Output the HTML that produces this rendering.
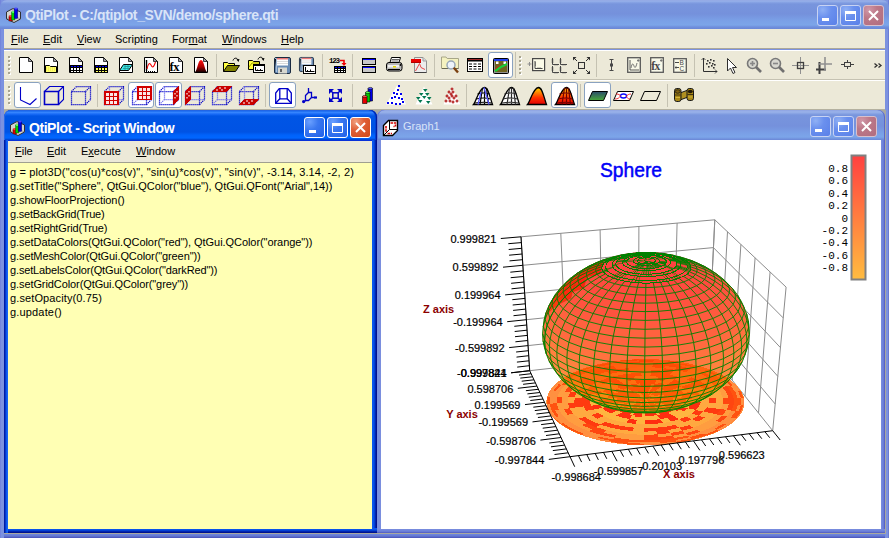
<!DOCTYPE html>
<html><head><meta charset="utf-8"><style>
*{box-sizing:border-box}
html,body{margin:0;padding:0;width:889px;height:538px;overflow:hidden;background:#7a8fdf;font-family:"Liberation Sans", sans-serif;font-size:11px}
.a{position:absolute}
#main{left:0;top:0;width:889px;height:538px;background:linear-gradient(90deg,#6a78d8 0,#7c92e0 1px,#7c92e0 3px,#7890df 4px) left/4px 100% no-repeat,linear-gradient(270deg,#5a68c8 0,#7c92e0 1px) right/3px 100% no-repeat,#7b91df}
#mtitle{left:0;top:0;width:889px;height:29px;border-radius:7px 7px 0 0;background:linear-gradient(180deg,#8fa3e2 0,#9ab3ea 1px,#8aa6e6 2px,#7895dd 4px,#7591dc 14px,#7a9fe6 20px,#7ca5e9 25px,#6f8fdd 27px,#6a86d6 29px)}
.ttxt{color:#d8e4f8;font-weight:bold;font-size:14px;letter-spacing:-.3px;white-space:nowrap}
.menu{background:#ece9d8;white-space:nowrap;color:#000}
.menu span{position:absolute;top:0}
u{text-decoration:underline;text-underline-offset:1px}
.tb{background:#ece9d8}
#mdi{left:4px;top:110px;width:882px;height:424px;background:#a8a8a0}
.btn{position:absolute;width:21px;height:21px;border-radius:3px}
.ib{border:1px solid #c8d3f3;background:radial-gradient(circle at 25% 20%,#8fb0f4 0,#6a90ee 40%,#5a80e8 100%)}
.ibc{border:1px solid #d8c0cc;background:radial-gradient(circle at 25% 20%,#d098a8 0,#bc7888 40%,#b06c80 100%)}
.ab{border:1px solid #fff;background:radial-gradient(circle at 25% 20%,#6aa0ff 0,#3a78f0 40%,#2060e8 100%)}
.abc{border:1px solid #fff;background:radial-gradient(circle at 25% 20%,#f0a080 0,#e06038 40%,#d04818 100%)}
svg text{font-family:"Liberation Sans", sans-serif}
svg .mono text{font-family:"Liberation Mono",monospace}
</style></head><body>
<div id="main" class="a">
 <div id="mtitle" class="a"></div>
 <svg class="a" style="left:6px;top:7px" width="16" height="16" viewBox="0 0 16 16"><path d="M.5 5L7 1.5L14.5 5V12L8 15.5L.5 12Z" fill="#d4d4d0" stroke="#303030"/><path d="M.5 12L7 8.5L14.5 12M7 1.5V8.5" stroke="#888" fill="none" stroke-width=".7"/><rect x="3" y="9" width="3.5" height="5" fill="#e00000" stroke="#400000" stroke-width=".4"/><ellipse cx="4.75" cy="9" rx="1.75" ry=".9" fill="#ff4040"/><rect x="5.5" y="5" width="3.5" height="8" fill="#00d000" stroke="#004000" stroke-width=".4"/><ellipse cx="7.25" cy="5" rx="1.75" ry=".9" fill="#60ff60"/><rect x="8.2" y="1.5" width="3.5" height="10" fill="#0000e0" stroke="#000040" stroke-width=".4"/><ellipse cx="9.95" cy="1.5" rx="1.75" ry=".9" fill="#4848ff"/></svg>
 <div class="a ttxt" style="left:25px;top:7px;letter-spacing:-.38px">QtiPlot - C:/qtiplot_SVN/demo/sphere.qti</div>
 <div class="btn ib" style="left:817px;top:5px"><svg width="19" height="19" viewBox="0 0 19 19" style="position:absolute;left:0;top:0"><rect x="4" y="12" width="7" height="3" fill="#fff"/></svg></div><div class="btn ib" style="left:840px;top:5px"><svg width="19" height="19" viewBox="0 0 19 19" style="position:absolute;left:0;top:0"><path d="M4.5 5.5H14.5V14.5H4.5Z" fill="none" stroke="#fff"/><rect x="4" y="5" width="11" height="3" fill="#fff"/></svg></div><div class="btn ibc" style="left:863px;top:5px"><svg width="19" height="19" viewBox="0 0 19 19" style="position:absolute;left:0;top:0"><path d="M5 5L14 14M14 5L5 14" stroke="#fff" stroke-width="2"/></svg></div>
 <div class="a menu" style="left:4px;top:29px;width:881px;height:20px;border-bottom:1px solid #aca899">
  <span style="left:7px;top:4px"><u>F</u>ile</span><span style="left:39px;top:4px"><u>E</u>dit</span><span style="left:73px;top:4px"><u>V</u>iew</span><span style="left:111px;top:4px">Scripting</span><span style="left:168px;top:4px">For<u>m</u>at</span><span style="left:218px;top:4px"><u>W</u>indows</span><span style="left:277px;top:4px"><u>H</u>elp</span>
 </div>
 <div class="a tb" style="left:4px;top:50px;width:881px;height:59px;border-top:1px solid #fff"></div>
 <div class="a" style="left:4px;top:534px;width:881px;height:4px;background:linear-gradient(180deg,#7088dc,#6478d4 50%,#4850b8)"></div>
 <div class="a" style="left:4px;top:79px;width:881px;height:1px;background:#c5c2b2"></div>
 <div class="a" style="left:4px;top:80px;width:881px;height:1px;background:#fff"></div>
 <div class="a" style="left:4px;top:109px;width:881px;height:1px;background:#b4b1a0"></div>
<div class="a" style="left:8px;top:56px;width:2px;height:2px;background:#a8a590;box-shadow:1px 1px 0 #fff"></div>
<div class="a" style="left:8px;top:60px;width:2px;height:2px;background:#a8a590;box-shadow:1px 1px 0 #fff"></div>
<div class="a" style="left:8px;top:64px;width:2px;height:2px;background:#a8a590;box-shadow:1px 1px 0 #fff"></div>
<div class="a" style="left:8px;top:68px;width:2px;height:2px;background:#a8a590;box-shadow:1px 1px 0 #fff"></div>
<div class="a" style="left:8px;top:72px;width:2px;height:2px;background:#a8a590;box-shadow:1px 1px 0 #fff"></div>
<div class="a" style="left:216px;top:54px;width:1px;height:23px;background:#c5c2b2"></div>
<div class="a" style="left:322px;top:54px;width:1px;height:23px;background:#c5c2b2"></div>
<div class="a" style="left:352px;top:54px;width:1px;height:23px;background:#c5c2b2"></div>
<div class="a" style="left:434px;top:54px;width:1px;height:23px;background:#c5c2b2"></div>
<div class="a" style="left:488px;top:52px;width:25px;height:26px;background:#fff;border:1px solid #8aa2c0;border-radius:3px"></div>
<div class="a" style="left:515px;top:52px;width:1px;height:26px;background:#c5c2b2"></div>
<div class="a" style="left:519px;top:56px;width:2px;height:2px;background:#a8a590;box-shadow:1px 1px 0 #fff"></div>
<div class="a" style="left:519px;top:60px;width:2px;height:2px;background:#a8a590;box-shadow:1px 1px 0 #fff"></div>
<div class="a" style="left:519px;top:64px;width:2px;height:2px;background:#a8a590;box-shadow:1px 1px 0 #fff"></div>
<div class="a" style="left:519px;top:68px;width:2px;height:2px;background:#a8a590;box-shadow:1px 1px 0 #fff"></div>
<div class="a" style="left:519px;top:72px;width:2px;height:2px;background:#a8a590;box-shadow:1px 1px 0 #fff"></div>
<div class="a" style="left:596px;top:54px;width:1px;height:23px;background:#c5c2b2"></div>
<div class="a" style="left:694px;top:54px;width:1px;height:23px;background:#c5c2b2"></div>
<div class="a" style="left:8px;top:86px;width:2px;height:2px;background:#a8a590;box-shadow:1px 1px 0 #fff"></div>
<div class="a" style="left:8px;top:90px;width:2px;height:2px;background:#a8a590;box-shadow:1px 1px 0 #fff"></div>
<div class="a" style="left:8px;top:94px;width:2px;height:2px;background:#a8a590;box-shadow:1px 1px 0 #fff"></div>
<div class="a" style="left:8px;top:98px;width:2px;height:2px;background:#a8a590;box-shadow:1px 1px 0 #fff"></div>
<div class="a" style="left:8px;top:102px;width:2px;height:2px;background:#a8a590;box-shadow:1px 1px 0 #fff"></div>
<div class="a" style="left:14px;top:82px;width:27px;height:26px;background:#fff;border:1px solid #8aa2c0;border-radius:3px"></div>
<div class="a" style="left:97px;top:84px;width:1px;height:23px;background:#c5c2b2"></div>
<div class="a" style="left:128px;top:82px;width:26px;height:26px;background:#fff;border:1px solid #8aa2c0;border-radius:3px"></div>
<div class="a" style="left:155px;top:82px;width:27px;height:26px;background:#fff;border:1px solid #8aa2c0;border-radius:3px"></div>
<div class="a" style="left:265px;top:84px;width:1px;height:23px;background:#c5c2b2"></div>
<div class="a" style="left:269px;top:82px;width:27px;height:26px;background:#fff;border:1px solid #8aa2c0;border-radius:3px"></div>
<div class="a" style="left:352px;top:84px;width:1px;height:23px;background:#c5c2b2"></div>
<div class="a" style="left:466px;top:84px;width:1px;height:23px;background:#c5c2b2"></div>
<div class="a" style="left:551px;top:82px;width:27px;height:26px;background:#fff;border:1px solid #8aa2c0;border-radius:3px"></div>
<div class="a" style="left:580px;top:84px;width:1px;height:23px;background:#c5c2b2"></div>
<div class="a" style="left:584px;top:82px;width:27px;height:26px;background:#fff;border:1px solid #8aa2c0;border-radius:3px"></div>
<div class="a" style="left:667px;top:84px;width:1px;height:23px;background:#c5c2b2"></div>
<svg class="a" style="left:0;top:0" width="889" height="110" viewBox="0 0 889 110"><g transform="translate(19 57)"><path d="M.5 .5H9.5L13.5 4.5V15.5H.5Z" fill="#fff" stroke="#000"/><path d="M9.5 .5V4.5H13.5Z" fill="#a0a0a8" stroke="#000" stroke-width=".7"/></g><g transform="translate(44 57)"><path d="M.5 .5H9.5L13.5 4.5V15.5H.5Z" fill="#fff" stroke="#000"/><path d="M9.5 .5V4.5H13.5Z" fill="#a0a0a8" stroke="#000" stroke-width=".7"/><path d="M1.5 8.5H5.5L6.5 9.5H12.5V15.5H1.5Z" fill="#ffff70" stroke="#000"/><path d="M2 11H12M2 13H12" stroke="#e8e040" stroke-dasharray="1 1" stroke-width="1"/></g><g transform="translate(69 57)"><path d="M.5 .5H9.5L13.5 4.5V15.5H.5Z" fill="#fff" stroke="#000"/><path d="M9.5 .5V4.5H13.5Z" fill="#a0a0a8" stroke="#000" stroke-width=".7"/><rect x="1" y="8" width="13" height="8" fill="#000"/><rect x="2" y="9" width="2" height="1" fill="#0000f0"/><rect x="2" y="11" width="2" height="2" fill="#fff"/><rect x="2" y="14" width="2" height="1" fill="#fff"/><rect x="5" y="9" width="2" height="1" fill="#0000f0"/><rect x="5" y="11" width="2" height="2" fill="#fff"/><rect x="5" y="14" width="2" height="1" fill="#fff"/><rect x="8" y="9" width="2" height="1" fill="#0000f0"/><rect x="8" y="11" width="2" height="2" fill="#fff"/><rect x="8" y="14" width="2" height="1" fill="#fff"/><rect x="11" y="9" width="2" height="1" fill="#0000f0"/><rect x="11" y="11" width="2" height="2" fill="#fff"/><rect x="11" y="14" width="2" height="1" fill="#fff"/></g><g transform="translate(94 57)"><path d="M.5 .5H9.5L13.5 4.5V15.5H.5Z" fill="#fff" stroke="#000"/><path d="M9.5 .5V4.5H13.5Z" fill="#a0a0a8" stroke="#000" stroke-width=".7"/><rect x="1" y="8" width="13" height="8" fill="#000"/><rect x="2" y="9" width="2" height="1" fill="#0000f0"/><rect x="2" y="11" width="2" height="2" fill="#ffff60"/><rect x="2" y="14" width="2" height="1" fill="#ffff60"/><rect x="5" y="9" width="2" height="1" fill="#0000f0"/><rect x="5" y="11" width="2" height="2" fill="#ffff60"/><rect x="5" y="14" width="2" height="1" fill="#ffff60"/><rect x="8" y="9" width="2" height="1" fill="#0000f0"/><rect x="8" y="11" width="2" height="2" fill="#ffff60"/><rect x="8" y="14" width="2" height="1" fill="#ffff60"/><rect x="11" y="9" width="2" height="1" fill="#0000f0"/><rect x="11" y="11" width="2" height="2" fill="#ffff60"/><rect x="11" y="14" width="2" height="1" fill="#ffff60"/></g><g transform="translate(119 57)"><path d="M.5 .5H9.5L13.5 4.5V15.5H.5Z" fill="#fff" stroke="#000"/><path d="M9.5 .5V4.5H13.5Z" fill="#a0a0a8" stroke="#000" stroke-width=".7"/><path d="M4.5 7.5H13.5L9.5 13.5H.5Z" fill="#40e8e8" stroke="#000"/><path d="M5.5 9.5H11.5M4 11.5H10M6 8V13M9 8V13" stroke="#209090" stroke-width=".8"/></g><g transform="translate(144 57)"><path d="M.5 .5H9.5L13.5 4.5V15.5H.5Z" fill="#fff" stroke="#000"/><path d="M9.5 .5V4.5H13.5Z" fill="#a0a0a8" stroke="#000" stroke-width=".7"/><path d="M2.5 3V14" stroke="#000" stroke-width="1.4"/><path d="M2 14.5H12" stroke="#000" stroke-dasharray="1 1"/><path d="M3 12C4 7 5.5 5 7 8S9.5 11 11.5 5" stroke="#f00000" fill="none" stroke-width="1.1"/></g><g transform="translate(169 57)"><path d="M.5 .5H9.5L13.5 4.5V15.5H.5Z" fill="#fff" stroke="#000"/><path d="M9.5 .5V4.5H13.5Z" fill="#a0a0a8" stroke="#000" stroke-width=".7"/><text x=".5" y="13.5" style="font-family:Liberation Serif" font-weight="bold" font-size="12.5" letter-spacing="-.5">fx</text></g><g transform="translate(194 57)"><path d="M.5 .5H9.5L13.5 4.5V15.5H.5Z" fill="#fff" stroke="#000"/><path d="M9.5 .5V4.5H13.5Z" fill="#a0a0a8" stroke="#000" stroke-width=".7"/><defs><linearGradient id="g3d" x1="0" y1="0" x2="0" y2="1"><stop offset="0" stop-color="#ff1010"/><stop offset=".55" stop-color="#b00000"/><stop offset="1" stop-color="#180000"/></linearGradient></defs><path d="M1 15C3.5 13 4 3 7 3S10.5 13 13 15Z" fill="url(#g3d)"/></g><g transform="translate(223 56)"><path d="M10 4.5C11 1.5 14 1.5 15 4" stroke="#000" fill="none"/><path d="M13.5 3.5L16.5 3L15.5 6Z" fill="#000"/><path d="M.5 6.5H4.5L5.5 7.5H11.5V9.5H.5Z" fill="#ffff40" stroke="#000"/><path d="M.5 7V15.5" stroke="#000"/><path d="M1 7H4L5 8H11V9.5H4.5L1 15Z" fill="#ffff40"/><path d="M4.5 9.5H16.5L12.5 15.5H.5Z" fill="#808000" stroke="#000"/></g><g transform="translate(248 56)"><path d="M10 3.5C11 .5 14 .5 15 3" stroke="#000" fill="none"/><path d="M13.5 2.5L16.5 2L15.5 5Z" fill="#000"/><path d="M.5 4.5H4.5L5.5 5.5H11.5V13.5H.5Z" fill="#ffff40" stroke="#000"/><path d="M1 11L4 7H11" stroke="#a0a000" fill="none"/><rect x="5.5" y="8.5" width="11" height="8" fill="#fff" stroke="#000"/><path d="M5.5 9.5H16.5" stroke="#000"/><path d="M7.5 11V14.5H15M9.5 13.5V14.5M12.5 13V14.5" stroke="#000" fill="none"/></g><g transform="translate(274 57)"><rect x=".5" y=".5" width="16" height="16" rx="1.5" fill="#6a8cb4" stroke="#1a2a40"/><path d="M1 1.5H2.5V15" stroke="#a8c0dc" stroke-width="1"/><rect x="3" y="1" width="11" height="7.5" fill="#fff"/><rect x="3" y="1" width="11" height="1.5" fill="#e87878"/><path d="M3 4.5H14M3 6.5H14" stroke="#d0d0d0" stroke-width=".8"/><rect x="4" y="10.5" width="9" height="6" fill="#d8d8d0"/><rect x="6" y="12" width="2" height="3" fill="#606060"/></g><g transform="translate(299 57)"><g transform="scale(.88)"><rect x=".5" y=".5" width="16" height="16" rx="1.5" fill="#6a8cb4" stroke="#1a2a40"/><path d="M1 1.5H2.5V15" stroke="#a8c0dc" stroke-width="1"/><rect x="3" y="1" width="11" height="7.5" fill="#fff"/><rect x="3" y="1" width="11" height="1.5" fill="#e87878"/><path d="M3 4.5H14M3 6.5H14" stroke="#d0d0d0" stroke-width=".8"/><rect x="4" y="10.5" width="9" height="6" fill="#d8d8d0"/><rect x="6" y="12" width="2" height="3" fill="#606060"/></g><rect x="4.5" y="8.5" width="12" height="8" fill="#fff" stroke="#000"/><path d="M6.5 10V14.5H15.5M8.5 13V14.5M11.5 12.5V14.5" stroke="#000" fill="none"/></g><g transform="translate(329 57)"><text x="0" y="6.2" style="font-family:Liberation Mono" font-weight="bold" font-size="7.5" letter-spacing="-1.2">123</text><path d="M10.5 3.5H15V6" stroke="#f00000" stroke-width="1.6" fill="none"/><path d="M12.5 6H17.5L15 9Z" fill="#f00000"/><rect x="5" y="9" width="12" height="7" fill="#000"/><path d="M6 10.5H16" stroke="#0000f0" stroke-dasharray="2 1"/><path d="M6 12.5H16M6 14.5H16" stroke="#fff" stroke-dasharray="2 1"/></g><g transform="translate(361 57)"><rect x="1.5" y="1.5" width="13" height="6" fill="#c8c8c8" stroke="#000"/><path d="M2 2.5H14" stroke="#0000ff"/><rect x="1.5" y="9.5" width="13" height="6" fill="#c8c8c8" stroke="#000"/><path d="M2 10.5H14" stroke="#0000ff"/></g><g transform="translate(386 57)"><path d="M5.5 .5H14.5L13 5.5H4Z" fill="#fff" stroke="#000"/><path d="M6 2.5H13M5.5 4H12.5" stroke="#000" stroke-width=".6"/><rect x=".5" y="5.5" width="15.5" height="8.5" rx="2.5" fill="#b8b8b8" stroke="#000"/><rect x="2" y="8" width="11" height="2.5" fill="#f0f0f0"/><rect x="7" y="9" width="3" height="1.5" fill="#e8d800"/><path d="M2 12.5H14" stroke="#000"/><circle cx="14.5" cy="8" r=".9" fill="#000"/></g><g transform="translate(410 57)"><path d="M4.5 .5H13L16.5 4V15.5H4.5Z" fill="#ececec" stroke="#909090"/><path d="M4.5 15.5H16.5" stroke="#404040"/><path d="M13 .5V4H16.5" fill="#d8d8d8" stroke="#a0a0a0"/><rect x="1" y="2" width="10" height="4" fill="#e80000"/><rect x="1" y="5" width="10" height="1" fill="#b00000"/><path d="M5.5 14L9.5 6.5L11 10.5L15 12.5" stroke="#e84848" fill="none" stroke-width="1"/></g><g transform="translate(441 56)"><path d="M.5 1H5L6.2 2.5H17.5V12.5H.5Z" fill="#f4f2c0" stroke="#a8a688"/><path d="M1 12.5H17.5" stroke="#686850"/><circle cx="10" cy="9" r="4" fill="#eef4fa" stroke="#98a8b8" stroke-width="1.5"/><path d="M12.8 11.8L17 16.5" stroke="#7a4010" stroke-width="2.4"/></g><g transform="translate(467 58)"><rect x=".5" y=".5" width="15" height="13" fill="#fff" stroke="#000"/><rect x="1" y="1" width="14" height="2.5" fill="#000"/><path d="M1 1.5H15" stroke="#a02828"/><path d="M2 6H14M2 8.5H14M2 11H14" stroke="#000" stroke-width="1.2" stroke-dasharray="3 1.5"/></g><g transform="translate(493 58)"><rect x=".5" y=".5" width="15" height="15" rx="1" fill="#909090" stroke="#000"/><rect x="1" y="1" width="14" height="2" fill="#2040f0"/><rect x="2" y="3" width="12" height="11" fill="#706420"/><rect x="3" y="3.5" width="2.5" height="2.5" fill="#fff"/><rect x="10.5" y="3.5" width="2.5" height="2.5" fill="#fff"/><path d="M2 13C6 10 9 8 14 6" stroke="#18d038" stroke-width="2.2"/><path d="M2 11.5L6 7.5" stroke="#e02020" stroke-width="1"/></g><g transform="translate(527 58)"><path d="M2.5 4V8M.5 6H4.5" stroke="#909090"/><rect x="5.6" y=".6" width="12" height="12" fill="#fbfbe8" stroke="#484848" stroke-width="1.2"/><path d="M8 3V10.5H15.5" stroke="#484848" fill="none"/><path d="M8 5H9M8 7H9M11 10.5V9.5M13 10.5V9.5" stroke="#484848"/></g><g transform="translate(551 57)"><g fill="none" stroke="#484848"><path d="M1.5 1V7.5H8M9.5 1V7.5H16M1.5 9V15.5H8M9.5 9V15.5H16"/><path d="M.5 3H2.5M.5 5H2.5M8.5 3H10.5M8.5 5H10.5M.5 11H2.5M.5 13H2.5M8.5 11H10.5M8.5 13H10.5M4 7.5V8.5M6 7.5V8.5M12 7.5V8.5M14 7.5V8.5M4 15.5V16.5M6 15.5V16.5M12 15.5V16.5M14 15.5V16.5" stroke-width=".8"/></g></g><g transform="translate(573 57)"><g stroke="#303030" fill="none"><rect x="5.5" y="5.5" width="6" height="6"/><path d="M1 1L4 4M16 1L13 4M1 16L4 13M16 16L13 13"/></g><path d="M0 0H3.5L0 3.5ZM17 0H13.5L17 3.5ZM0 17H3.5L0 13.5ZM17 17H13.5L17 13.5Z" fill="#303030"/></g><g transform="translate(609 59)"><path d="M.5 .5H4.5M2.5 .5V11.5M.5 11.5H4.5" stroke="#484848" fill="none"/><rect x="1" y="4.5" width="3" height="3" fill="#484848"/></g><g transform="translate(627 57)"><rect x=".7" y=".7" width="12.6" height="14.6" fill="#f8f8e8" stroke="#585858" stroke-width="1.3"/><path d="M3 3V13H12" stroke="#484848" fill="none" stroke-width=".9"/><path d="M4 11C5 6 6 6 7 9S9 10 10 6" stroke="#686868" fill="none" stroke-width=".9"/><path d="M10 3.5H12.5M11.2 2V5" stroke="#686868" stroke-width=".8"/></g><g transform="translate(650 57)"><rect x=".7" y=".7" width="12.6" height="14.6" fill="#f8f8e8" stroke="#585858" stroke-width="1.3"/><text x="1.2" y="12.8" style="font-family:Liberation Serif" font-weight="bold" font-size="11.5" fill="#484848" letter-spacing="-.6">fx</text><path d="M10 3.5H12.5M11.2 2V5" stroke="#686868" stroke-width=".8"/></g><g transform="translate(673 58)"><rect x=".7" y=".7" width="12.6" height="13.6" fill="#f8f8e8" stroke="#585858" stroke-width="1.3"/><path d="M2 4.5H6M2 9.5H6" stroke="#484848"/><circle cx="3" cy="9.5" r="1.1" fill="#484848"/><text x="6.5" y="7" style="font-family:Liberation Sans" font-size="6.5" fill="#484848">B</text><text x="6.5" y="12.8" style="font-family:Liberation Sans" font-size="6.5" fill="#484848">C</text></g><g transform="translate(701 57)"><g stroke="#303030" fill="none"><path d="M2.5 1V14.5H16"/><path d="M.5 3L2.5 1L4.5 3M14 12.5L16 14.5L14 16.5M4 14.5H14" stroke-width=".8"/></g><g fill="#303030"><rect x="6" y="3" width="1.6" height="1.6"/><rect x="9" y="2" width="1.6" height="1.6"/><rect x="12" y="3" width="1.6" height="1.6"/><rect x="5" y="6" width="1.6" height="1.6"/><rect x="8" y="5" width="1.6" height="1.6"/><rect x="11" y="6" width="1.6" height="1.6"/><rect x="7" y="9" width="1.6" height="1.6"/><rect x="10" y="8" width="1.6" height="1.6"/><rect x="12" y="10" width="1.6" height="1.6"/><rect x="13" y="7" width="1.6" height="1.6"/></g></g><g transform="translate(727 58)"><path d="M.5 .5V13L3.5 10L6 15.5L8 14.5L5.5 9.5H9.5Z" fill="#fff" stroke="#303030"/></g><g transform="translate(746 57)"><circle cx="6.5" cy="6.5" r="5" fill="#d8d8d0" stroke="#787878" stroke-width="1.6"/><path d="M10 10L15 15" stroke="#707070" stroke-width="2.6"/><path d="M4 6.5H9" stroke="#888" stroke-width="1.6"/><path d="M6.5 4V9" stroke="#888" stroke-width="1.6"/></g><g transform="translate(769 57)"><circle cx="6.5" cy="6.5" r="5" fill="#d8d8d0" stroke="#787878" stroke-width="1.6"/><path d="M10 10L15 15" stroke="#707070" stroke-width="2.6"/><path d="M4 6.5H9" stroke="#888" stroke-width="1.6"/></g><g transform="translate(792 57)"><path d="M0 8.5H17M8.5 0V17" stroke="#909090"/><rect x="5.5" y="5.5" width="6" height="6" fill="none" stroke="#404040" stroke-width="1.3"/></g><g transform="translate(815 57)"><path d="M1 12.5H11M4.5 5V17" stroke="#404040" stroke-width="2"/><path d="M3 7H17M10 0V14" stroke="#909090" stroke-width="1.6"/></g><g transform="translate(841 60)"><path d="M0 4.5H13M6.5 0V9" stroke="#404040"/><rect x="3.5" y="2.5" width="6" height="4" fill="#ece9d8" stroke="#404040"/></g><g transform="translate(874 63)"><path d="M.5 .5L3 2.5L.5 4.5M4.5 .5L7 2.5L4.5 4.5" stroke="#303030" stroke-width="1.3" fill="none"/></g><g transform="translate(14 82)"><path d="M6.5 5V18L16 22.5L22.5 16.5" stroke="#0000c8" fill="none" stroke-width="1.1"/></g><g transform="translate(43 85)"><path d="M1.5 6.5H15.5V19.5H1.5Z" fill="none" stroke="#0000c8" stroke-width="1.6"/><path d="M1.5 6.5L6.5 1.5H20.5V14.5L15.5 19.5M15.5 6.5L20.5 1.5" fill="none" stroke="#0000c8" stroke-width="1.1"/></g><g transform="translate(70 85)"><g fill="none" stroke-width="1.25" stroke-dasharray="1.2 .8"><path d="M1.5 6.5H15.5V19.5H1.5Z" stroke="#0000c8"/><path d="M1.5 6.5L6.5 1.5H20.5V14.5L15.5 19.5M15.5 6.5L20.5 1.5" stroke="#0000c8"/></g></g><g transform="translate(103 85)"><g fill="none" stroke-width="1.25" stroke-dasharray="1.2 .8"><path d="M1.5 6.5H15.5V19.5H1.5Z" stroke="#0000c8"/><path d="M1.5 6.5L6.5 1.5H20.5V14.5L15.5 19.5M15.5 6.5L20.5 1.5" stroke="#0000c8"/><path d="M6.5 1.5V14.5H20.5M6.5 14.5L1.5 19.5" stroke="#7070f0"/></g><rect x="1" y="6" width="15" height="14" fill="#d00000"/><rect x="3" y="8" width="3" height="3" fill="#fff" fill-opacity=".9"/><rect x="3" y="12" width="3" height="3" fill="#fff" fill-opacity=".9"/><rect x="3" y="16" width="3" height="3" fill="#fff" fill-opacity=".9"/><rect x="7" y="8" width="3" height="3" fill="#fff" fill-opacity=".9"/><rect x="7" y="12" width="3" height="3" fill="#fff" fill-opacity=".9"/><rect x="7" y="16" width="3" height="3" fill="#fff" fill-opacity=".9"/><rect x="11" y="8" width="3" height="3" fill="#fff" fill-opacity=".9"/><rect x="11" y="12" width="3" height="3" fill="#fff" fill-opacity=".9"/><rect x="11" y="16" width="3" height="3" fill="#fff" fill-opacity=".9"/></g><g transform="translate(131 85)"><g fill="none" stroke-width="1.25" stroke-dasharray="1.2 .8"><path d="M1.5 6.5H15.5V19.5H1.5Z" stroke="#0000c8"/><path d="M1.5 6.5L6.5 1.5H20.5V14.5L15.5 19.5M15.5 6.5L20.5 1.5" stroke="#0000c8"/><path d="M6.5 1.5V14.5H20.5M6.5 14.5L1.5 19.5" stroke="#7070f0"/></g><rect x="6" y="1" width="15" height="14" fill="#d00000"/><rect x="8" y="3" width="3" height="3" fill="#fff" fill-opacity=".9"/><rect x="8" y="7" width="3" height="3" fill="#fff" fill-opacity=".9"/><rect x="8" y="11" width="3" height="3" fill="#fff" fill-opacity=".9"/><rect x="12" y="3" width="3" height="3" fill="#fff" fill-opacity=".9"/><rect x="12" y="7" width="3" height="3" fill="#fff" fill-opacity=".9"/><rect x="12" y="11" width="3" height="3" fill="#fff" fill-opacity=".9"/><rect x="16" y="3" width="3" height="3" fill="#fff" fill-opacity=".9"/><rect x="16" y="7" width="3" height="3" fill="#fff" fill-opacity=".9"/><rect x="16" y="11" width="3" height="3" fill="#fff" fill-opacity=".9"/></g><g transform="translate(158 85)"><g fill="none" stroke-width="1.25" stroke-dasharray="1.2 .8"><path d="M1.5 6.5H15.5V19.5H1.5Z" stroke="#0000c8"/><path d="M1.5 6.5L6.5 1.5H20.5V14.5L15.5 19.5M15.5 6.5L20.5 1.5" stroke="#0000c8"/><path d="M6.5 1.5V14.5H20.5M6.5 14.5L1.5 19.5" stroke="#7070f0"/></g><path d="M15.5 6.5L20.5 1.5V14.5L15.5 19.5Z" fill="#c80000" stroke="#c80000"/><path d="M17 8V9.5M19 6V7.5M17 12V13.5M19 10V11.5" stroke="#fff" stroke-width="1.1"/></g><g transform="translate(184 85)"><g fill="none" stroke-width="1.25" stroke-dasharray="1.2 .8"><path d="M1.5 6.5H15.5V19.5H1.5Z" stroke="#0000c8"/><path d="M1.5 6.5L6.5 1.5H20.5V14.5L15.5 19.5M15.5 6.5L20.5 1.5" stroke="#0000c8"/><path d="M6.5 1.5V14.5H20.5M6.5 14.5L1.5 19.5" stroke="#7070f0"/></g><path d="M1.5 6.5L6.5 1.5V14.5L1.5 19.5Z" fill="#c80000" stroke="#c80000"/><path d="M3 8V9.5M5 6V7.5M3 12V13.5M5 10V11.5" stroke="#fff" stroke-width="1.1"/></g><g transform="translate(211 85)"><g fill="none" stroke-width="1.25" stroke-dasharray="1.2 .8"><path d="M1.5 6.5H15.5V19.5H1.5Z" stroke="#0000c8"/><path d="M1.5 6.5L6.5 1.5H20.5V14.5L15.5 19.5M15.5 6.5L20.5 1.5" stroke="#0000c8"/><path d="M6.5 1.5V14.5H20.5M6.5 14.5L1.5 19.5" stroke="#7070f0"/></g><path d="M1.5 6.5L6.5 1.5H20.5L15.5 6.5Z" fill="#c80000" stroke="#c80000"/><path d="M8 3H10M13 3H15M5 5H7M10 5H12" stroke="#fff" stroke-width="1.1"/></g><g transform="translate(238 85)"><g fill="none" stroke-width="1.25" stroke-dasharray="1.2 .8"><path d="M1.5 6.5H15.5V19.5H1.5Z" stroke="#0000c8"/><path d="M1.5 6.5L6.5 1.5H20.5V14.5L15.5 19.5M15.5 6.5L20.5 1.5" stroke="#0000c8"/><path d="M6.5 1.5V14.5H20.5M6.5 14.5L1.5 19.5" stroke="#7070f0"/></g><path d="M1.5 19.5L6.5 14.5H20.5L15.5 19.5Z" fill="#c80000" stroke="#c80000"/><path d="M8 16H10M13 16H15M5 18H7M10 18H12" stroke="#fff" stroke-width="1.1"/></g><g transform="translate(275 88)"><g fill="none" stroke="#0000c8" stroke-width="1.3"><path d="M.7 15.3V5L4.2 .7H12.8L16.3 5V15.3Z"/><path d="M4.8 .7V10.8H12.2V.7"/><path d="M.7 15.3L4.8 10.8M16.3 15.3L12.2 10.8"/></g></g><g transform="translate(302 88)"><g fill="none" stroke="#0000c8" stroke-width="1.3"><path d="M6.5 0V4.5M9.5 9.5H14.5"/><path d="M3.5 7.5L6.5 4.5H9.5V9.5L6.5 12.5H3.5Z"/><path d="M3.5 12.5L1.5 14"/></g><rect x="12" y="8.5" width="3" height="2" fill="#0000c8"/><circle cx="1.6" cy="13.6" r="1.6" fill="#0000c8"/></g><g transform="translate(329 89)"><g fill="none" stroke="#0000c8" stroke-width="1.5"><rect x="3.8" y="3.8" width="5.4" height="5.4"/><path d="M1.5 1.5L3.8 3.8M11.5 1.5L9.2 3.8M1.5 11.5L3.8 9.2M11.5 11.5L9.2 9.2"/></g><path d="M0 0H5L0 5ZM13 0H8L13 5ZM0 13H5L0 8ZM13 13H8L13 8Z" fill="#0000c8"/></g><g transform="translate(362 86)"><path d="M6 2.5H10.5V15H6Z" fill="#0000e8" stroke="#000" stroke-width=".6"/><ellipse cx="8.3" cy="2.5" rx="2.3" ry="1.1" fill="#5050ff" stroke="#000" stroke-width=".5"/><path d="M3.5 6.5H8V16H3.5Z" fill="#00c800" stroke="#000" stroke-width=".6"/><ellipse cx="5.8" cy="6.5" rx="2.3" ry="1.1" fill="#50ff50" stroke="#000" stroke-width=".5"/><path d="M.5 10.5H5V17.5H.5Z" fill="#e80000" stroke="#000" stroke-width=".6"/><ellipse cx="2.8" cy="10.5" rx="2.3" ry="1.1" fill="#ff5050" stroke="#000" stroke-width=".5"/></g><g transform="translate(386 85)"><path d="M11 .5L20 19.5H0Z" fill="#fff"/><rect x="12" y="0" width="2" height="2" fill="#0000f0"/><rect x="11" y="4" width="2" height="2" fill="#0000f0"/><rect x="7" y="7" width="2" height="2" fill="#0000f0"/><rect x="10" y="8" width="2" height="2" fill="#0000f0"/><rect x="14" y="8" width="2" height="2" fill="#0000f0"/><rect x="8" y="11" width="2" height="2" fill="#0000f0"/><rect x="5" y="12" width="2" height="2" fill="#0000f0"/><rect x="12" y="12" width="2" height="2" fill="#0000f0"/><rect x="15" y="13" width="2" height="2" fill="#0000f0"/><rect x="1" y="17" width="2" height="2" fill="#0000f0"/><rect x="5" y="17" width="2" height="2" fill="#0000f0"/><rect x="9" y="18" width="2" height="2" fill="#0000f0"/><rect x="13" y="18" width="2" height="2" fill="#0000f0"/><rect x="16" y="16" width="2" height="2" fill="#0000f0"/></g><g transform="translate(415 86)"><path d="M9 .5L17.5 18.5H.5Z" fill="#fff"/><path d="M8 3H12.5L10.25 6Z" fill="#007850"/><path d="M4 7H8.5L6.25 10Z" fill="#007850"/><path d="M10 7H14.5L12.25 10Z" fill="#007850"/><path d="M1 11H5.5L3.25 14Z" fill="#007850"/><path d="M7 10H11.5L9.25 13Z" fill="#007850"/><path d="M12 11H16.5L14.25 14Z" fill="#007850"/><path d="M3 14H7.5L5.25 17Z" fill="#007850"/><path d="M11 15H15.5L13.25 18Z" fill="#007850"/></g><g transform="translate(443 86)"><path d="M9 .5L17.5 18.5H.5Z" fill="#fff"/><path d="M7.5 3H10.5M9 1.5V4.5" stroke="#a80000" stroke-width="1.1"/><path d="M4.5 6H7.5M6 4.5V7.5" stroke="#a80000" stroke-width="1.1"/><path d="M8.5 6H11.5M10 4.5V7.5" stroke="#a80000" stroke-width="1.1"/><path d="M6.5 8H9.5M8 6.5V9.5" stroke="#a80000" stroke-width="1.1"/><path d="M2.5 10H5.5M4 8.5V11.5" stroke="#a80000" stroke-width="1.1"/><path d="M7.5 10H10.5M9 8.5V11.5" stroke="#a80000" stroke-width="1.1"/><path d="M11.5 10H14.5M13 8.5V11.5" stroke="#a80000" stroke-width="1.1"/><path d="M4.5 12H7.5M6 10.5V13.5" stroke="#a80000" stroke-width="1.1"/><path d="M9.5 12H12.5M11 10.5V13.5" stroke="#a80000" stroke-width="1.1"/><path d="M1.5 15H4.5M3 13.5V16.5" stroke="#a80000" stroke-width="1.1"/><path d="M5.5 15H8.5M7 13.5V16.5" stroke="#a80000" stroke-width="1.1"/><path d="M8.5 16H11.5M10 14.5V17.5" stroke="#a80000" stroke-width="1.1"/><path d="M12.5 15H15.5M14 13.5V16.5" stroke="#a80000" stroke-width="1.1"/></g><g transform="translate(473 86)"><path d="M.5 18.5C3 16 6 2 11.5 1.5C15.5 1.5 17 12 19.5 18.5Z" fill="#fff" stroke="#000" stroke-width="1.3"/><path d="M9.5 2L7 18.5M11.5 1.5V18.5M13.5 2L15.5 18.5M4.5 8Q11 6 16.5 8M3 13Q11 11 17.5 13M2 17Q11 15.5 18.5 17" stroke="#000" stroke-width="1.2" fill="none"/><path d="M11 1.5L16 18.5M8 6L5 18.5" stroke="#5858ff" stroke-width="1.3"/></g><g transform="translate(500 86)"><path d="M.5 18.5C3 16 6 2 11.5 1.5C15.5 1.5 17 12 19.5 18.5Z" fill="#fff" stroke="#000" stroke-width="1.3"/><path d="M9.5 2L7 18.5M11.5 1.5V18.5M13.5 2L15.5 18.5M4.5 8Q11 6 16.5 8M3 13Q11 11 17.5 13M2 17Q11 15.5 18.5 17" stroke="#282828" stroke-width="1.2" fill="none"/></g><g transform="translate(527 86)"><defs><linearGradient id="hg" x1="0" y1="0" x2="0" y2="1"><stop offset="0" stop-color="#ffd800"/><stop offset=".6" stop-color="#ff3000"/><stop offset="1" stop-color="#e00000"/></linearGradient></defs><path d="M.5 18.5C3 16 6 2 11.5 1.5C15.5 1.5 17 12 19.5 18.5Z" fill="url(#hg)" stroke="#000" stroke-width="1.3"/></g><g transform="translate(555 86)"><path d="M.5 18.5C3 16 6 2 11.5 1.5C15.5 1.5 17 12 19.5 18.5Z" fill="url(#hg)" stroke="#000" stroke-width="1.3"/><path d="M9.5 2L7 18.5M11.5 1.5V18.5M13.5 2L15.5 18.5M4.5 8Q11 6 16.5 8M3 13Q11 11 17.5 13M2 17Q11 15.5 18.5 17" stroke="#700000" stroke-width="1.2" fill="none"/></g><g transform="translate(588 91)"><defs><linearGradient id="pg" x1="0" y1="0" x2="0" y2="1"><stop offset="0" stop-color="#2c4c6c"/><stop offset="1" stop-color="#48a838"/></linearGradient></defs><path d="M4.5 .5H19.5L15.5 9.5H.5Z" fill="url(#pg)" stroke="#000"/></g><g transform="translate(613 91)"><path d="M4.5 .5H20.5L16.5 9.5H.5Z" fill="#fff" stroke="#000"/><ellipse cx="10.5" cy="5" rx="3" ry="2" fill="none" stroke="#0000ff" stroke-width="1.3"/><path d="M3 3C6 3 7 4 7.5 5M13.5 5C14 4 16 3 18 3M2 8C5 8 6 7 7.5 5M13.5 5C14 7 15 8 17 8" stroke="#f02020" fill="none" stroke-width=".9"/></g><g transform="translate(640 91)"><path d="M4.5 .5H20.5L16.5 9.5H.5Z" fill="none" stroke="#000"/></g><g transform="translate(674 88)"><path d="M6 5L14 2V9L6 12Z" fill="#b09020" stroke="#181818"/><rect x=".5" y=".5" width="6.5" height="13" rx="2.2" fill="#a88818" stroke="#181818"/><rect x="13" y=".5" width="6.5" height="12" rx="2.2" fill="#a88818" stroke="#181818"/><ellipse cx="3.75" cy="3.5" rx="2.5" ry="1.8" fill="#806010" stroke="#181818" stroke-width=".8"/><ellipse cx="16.25" cy="3.5" rx="2.5" ry="1.8" fill="#201808"/><path d="M1 7H6.5M13.5 6.5H19" stroke="#282010" stroke-width=".8"/><path d="M1.5 9.5H6M14 9H18.5" stroke="#e0c048" stroke-width=".8"/></g></svg>
 <div id="mdi" class="a"></div>

 <!-- script window -->
 <div class="a" style="left:4px;top:110px;width:373px;height:423px;background:#0831d9;border-radius:7px 7px 0 0">
  <div class="a" style="left:0;top:0;width:373px;height:30px;border-radius:7px 7px 0 0;box-shadow:inset -1px 0 #0020a0,inset -2px 0 #0040d8,inset 1px 0 #2a6ae8;background:linear-gradient(180deg,#3a6fe0 0,#0a5ae8 1px,#3d8cff 2px,#1a6cf8 4px,#0055e5 6px,#0053e4 22px,#0062fa 25px,#0066ff 28px,#0040c8 30px)"></div>
  <div class="a" style="left:368px;top:30px;width:5px;height:393px;background:linear-gradient(90deg,#0a5af0 0,#0850e8 2px,#0030c0 3px,#000880 5px)"></div>
  <div class="a" style="left:4px;top:418px;width:369px;height:5px;background:linear-gradient(180deg,#0a5af0 0,#0850e8 2px,#0030c0 3px,#000880 5px)"></div><div class="a" style="left:0;top:418px;width:4px;height:5px;background:#0018a0"></div>
  <div class="a" style="left:0;top:30px;width:4px;height:393px;background:linear-gradient(90deg,#0018a0 0,#0020a8 1px,#0850e8 2px,#1868f8 4px)"></div>
  <svg class="a" style="left:6px;top:10px" width="16" height="16" viewBox="0 0 16 16"><path d="M.5 5L7 1.5L14.5 5V12L8 15.5L.5 12Z" fill="#d4d4d0" stroke="#303030"/><path d="M.5 12L7 8.5L14.5 12M7 1.5V8.5" stroke="#888" fill="none" stroke-width=".7"/><rect x="3" y="9" width="3.5" height="5" fill="#e00000" stroke="#400000" stroke-width=".4"/><ellipse cx="4.75" cy="9" rx="1.75" ry=".9" fill="#ff4040"/><rect x="5.5" y="5" width="3.5" height="8" fill="#00d000" stroke="#004000" stroke-width=".4"/><ellipse cx="7.25" cy="5" rx="1.75" ry=".9" fill="#60ff60"/><rect x="8.2" y="1.5" width="3.5" height="10" fill="#0000e0" stroke="#000040" stroke-width=".4"/><ellipse cx="9.95" cy="1.5" rx="1.75" ry=".9" fill="#4848ff"/></svg>
  <div class="a ttxt" style="left:25px;top:10px;color:#fff;letter-spacing:-.45px">QtiPlot - Script Window</div>
  <div class="btn ab" style="left:300px;top:7px"><svg width="19" height="19" viewBox="0 0 19 19" style="position:absolute;left:0;top:0"><rect x="4" y="12" width="7" height="3" fill="#fff"/></svg></div><div class="btn ab" style="left:323px;top:7px"><svg width="19" height="19" viewBox="0 0 19 19" style="position:absolute;left:0;top:0"><path d="M4.5 5.5H14.5V14.5H4.5Z" fill="none" stroke="#fff"/><rect x="4" y="5" width="11" height="3" fill="#fff"/></svg></div><div class="btn abc" style="left:346px;top:7px"><svg width="19" height="19" viewBox="0 0 19 19" style="position:absolute;left:0;top:0"><path d="M5 5L14 14M14 5L5 14" stroke="#fff" stroke-width="2"/></svg></div>
  <div class="a menu" style="left:4px;top:31px;width:364px;height:21px">
   <span style="left:7px;top:4px"><u>F</u>ile</span><span style="left:39px;top:4px"><u>E</u>dit</span><span style="left:73px;top:4px">E<u>x</u>ecute</span><span style="left:128px;top:4px"><u>W</u>indow</span>
  </div>
  <div class="a" style="left:4px;top:52px;width:364px;height:367px;background:#ffffb4;border-top:1px solid #a0a090;padding:2px 0 0 2px;line-height:14px;white-space:pre;color:#000"><div style="letter-spacing:0.140px">g = plot3D(&quot;cos(u)*cos(v)&quot;, &quot;sin(u)*cos(v)&quot;, &quot;sin(v)&quot;, -3.14, 3.14, -2, 2)</div><div style="letter-spacing:-0.031px">g.setTitle(&quot;Sphere&quot;, QtGui.QColor(&quot;blue&quot;), QtGui.QFont(&quot;Arial&quot;,14))</div><div style="letter-spacing:-0.068px">g.showFloorProjection()</div><div style="letter-spacing:-0.223px">g.setBackGrid(True)</div><div style="letter-spacing:-0.122px">g.setRightGrid(True)</div><div style="letter-spacing:-0.060px">g.setDataColors(QtGui.QColor(&quot;red&quot;), QtGui.QColor(&quot;orange&quot;))</div><div style="letter-spacing:-0.099px">g.setMeshColor(QtGui.QColor(&quot;green&quot;))</div><div style="letter-spacing:-0.147px">g.setLabelsColor(QtGui.QColor(&quot;darkRed&quot;))</div><div style="letter-spacing:-0.092px">g.setGridColor(QtGui.QColor(&quot;grey&quot;))</div><div style="letter-spacing:0.118px">g.setOpacity(0.75)</div><div style="letter-spacing:0.164px">g.update()</div></div>
 </div>

 <!-- graph window -->
 <div class="a" style="left:377px;top:110px;width:508px;height:423px;background:#7a8ede;border-radius:7px 7px 0 0">
  <div class="a" style="left:504px;top:30px;width:4px;height:393px;background:linear-gradient(90deg,#7a8ede,#6a7ed8 60%,#5058c0)"></div><div class="a" style="left:0;top:419px;width:508px;height:4px;background:linear-gradient(180deg,#7a8ede,#6a7ed8 60%,#5058c0)"></div>
  <div class="a" style="left:0;top:0;width:508px;height:30px;border-radius:7px 7px 0 0;box-shadow:inset -1px 0 #5a68c8,inset 1px 0 #6a7ad4;background:linear-gradient(180deg,#8fa3e2 0,#9ab3ea 2px,#7895dd 5px,#7591dc 16px,#7a9fe6 23px,#7ca5e9 27px,#6a86d6 30px)"></div>
  <svg class="a" style="left:5px;top:9px" width="17" height="18" viewBox="0 0 17 18"><path d="M1.5 6.5L6.5 1.5H15.5V11.5L10.5 16.5H1.5Z" fill="#fff" stroke="#000" stroke-width="1.4"/><path d="M7.5 2V10.5H15M7.5 10.5L2 16" stroke="#000" fill="none" stroke-width="1"/><path d="M8.5 4H13.5V7.5M12.5 7.5H11.5M4 7V13.5M5.5 14.5H10" stroke="#d00000" fill="none" stroke-width="1.6" stroke-dasharray="2.5 .8"/></svg>
  <div class="a" style="left:26px;top:10px;color:#d8e4f8;font-size:11px">Graph1</div>
  <div class="btn ib" style="left:433px;top:6px"><svg width="19" height="19" viewBox="0 0 19 19" style="position:absolute;left:0;top:0"><rect x="4" y="12" width="7" height="3" fill="#fff"/></svg></div><div class="btn ib" style="left:456px;top:6px"><svg width="19" height="19" viewBox="0 0 19 19" style="position:absolute;left:0;top:0"><path d="M4.5 5.5H14.5V14.5H4.5Z" fill="none" stroke="#fff"/><rect x="4" y="5" width="11" height="3" fill="#fff"/></svg></div><div class="btn ibc" style="left:479px;top:6px"><svg width="19" height="19" viewBox="0 0 19 19" style="position:absolute;left:0;top:0"><path d="M5 5L14 14M14 5L5 14" stroke="#fff" stroke-width="2"/></svg></div>
  <svg class="a" style="left:4px;top:30px;background:#fff" width="500" height="389" viewBox="381 140 500 389">
   <text x="631" y="177" text-anchor="middle" fill="#0000f8" stroke="#0000f8" stroke-width=".45" font-size="19.3">Sphere</text>
   <defs><linearGradient id="lg" x1="0" y1="0" x2="0" y2="1"><stop offset="0" stop-color="#ff4040"/><stop offset="1" stop-color="#ffbc40"/></linearGradient></defs>
   <rect x="851.5" y="155.5" width="14" height="124" fill="url(#lg)" stroke="#808080" stroke-width="2"/>
   <g class="mono" font-size="11" text-anchor="end" fill="#000">
    <text x="848" y="172">0.8</text><text x="848" y="184.4">0.6</text><text x="848" y="196.8">0.4</text><text x="848" y="209.2">0.2</text><text x="848" y="221.6">0</text><text x="848" y="234">-0.2</text><text x="848" y="246.4">-0.4</text><text x="848" y="258.8">-0.6</text><text x="848" y="271.2">-0.8</text>
   </g>
   <path d="M529.7 370.7L521 236.8M566.4 366.6L560.8 233.3M602.6 362.5L600.1 229.8M638.4 358.5L638.9 226.4M673.7 354.6L677.1 223.1M708.5 350.7L714.8 219.8M529.7 370.7L708.5 350.7M528 345.6L709.7 326.1M526.4 319.7L710.9 300.8M524.6 293L712.2 274.6M522.8 265.3L713.4 247.6M521 236.8L714.8 219.8M772.7 430.7L786.1 287.1M758.5 412.9L770.1 272M745 396.1L755.1 257.8M732.2 380.2L740.9 244.4M720.1 365L727.5 231.7M708.5 350.7L714.8 219.8M772.7 430.7L708.5 350.7M775.2 404L709.7 326.1M777.8 376.3L710.9 300.8M780.5 347.7L712.2 274.6M783.2 317.9L713.4 247.6M786.1 287.1L714.8 219.8" stroke="#8c8c8c" stroke-width="1" fill="none"/>
   <path fill="#fff" stroke="#fff" d="M623.5 411L633.9 412.2L635.4 412.6L626.4 411.5ZM633.9 412.2L644.7 412.6L644.7 412.9L635.4 412.6ZM644.7 412.6L655.4 412.3L654.1 412.7L644.7 412.9ZM655.4 412.3L665.9 411.2L663.1 411.7L654.1 412.7ZM585.8 397.9L595.2 401.8L599.8 404.5L591.2 401ZM599.8 404.5L609.8 407.4L613.7 409L604.8 406.5ZM595.2 401.8L606.1 404.9L609.8 407.4L599.8 404.5ZM609.8 407.4L620.8 409.6L623.5 411L613.7 409ZM606.1 404.9L618.3 407.3L620.8 409.6L609.8 407.4ZM620.8 409.6L632.5 410.9L633.9 412.2L623.5 411ZM618.3 407.3L631.2 408.8L632.5 410.9L620.8 409.6ZM632.5 410.9L644.6 411.4L644.7 412.6L633.9 412.2ZM631.2 408.8L644.6 409.3L644.6 411.4L632.5 410.9ZM644.6 411.4L656.7 411L655.4 412.3L644.7 412.6ZM644.6 409.3L658 408.9L656.7 411L644.6 411.4ZM656.7 411L668.6 409.8L665.9 411.2L655.4 412.3ZM658 408.9L671 407.6L668.6 409.8L656.7 411ZM668.6 409.8L679.7 407.8L675.8 409.4L665.9 411.2ZM671 407.6L683.2 405.4L679.7 407.8L668.6 409.8ZM679.7 407.8L689.8 405L684.9 406.9L675.8 409.4ZM683.2 405.4L694.4 402.3L689.8 405L679.7 407.8ZM694.4 402.3L704.1 398.5L698.7 401.6L689.8 405ZM704.1 398.5L712.1 394.2L706 397.6L698.7 401.6ZM572.6 389.3L580.9 394.1L585.8 397.9L578 393.5ZM580.9 394.1L591.1 398.2L595.2 401.8L585.8 397.9ZM591.1 398.2L602.9 401.7L606.1 404.9L595.2 401.8ZM602.9 401.7L616 404.2L618.3 407.3L606.1 404.9ZM616 404.2L630 405.8L631.2 408.8L618.3 407.3ZM630 405.8L644.5 406.4L644.6 409.3L631.2 408.8ZM644.5 406.4L659.1 406L658 408.9L644.6 409.3ZM659.1 406L673.2 404.5L671 407.6L658 408.9ZM673.2 404.5L686.5 402.1L683.2 405.4L671 407.6ZM686.5 402.1L698.5 398.8L694.4 402.3L683.2 405.4ZM698.5 398.8L709 394.8L704.1 398.5L694.4 402.3ZM709 394.8L717.6 390.1L712.1 394.2L704.1 398.5ZM561.2 379L567.8 384.5L572.6 389.3L566.3 384.1ZM556.9 373.3L563.8 379.1L567.8 384.5L561.2 379ZM567.8 384.5L576.7 389.5L580.9 394.1L572.6 389.3ZM563.8 379.1L573.1 384.3L576.7 389.5L567.8 384.5ZM576.7 389.5L587.5 394L591.1 398.2L580.9 394.1ZM573.1 384.3L584.5 388.9L587.5 394L576.7 389.5ZM587.5 394L600.1 397.6L602.9 401.7L591.1 398.2ZM584.5 388.9L597.7 392.7L600.1 397.6L587.5 394ZM600.1 397.6L614.1 400.3L616 404.2L602.9 401.7ZM597.7 392.7L612.5 395.5L614.1 400.3L600.1 397.6ZM614.1 400.3L629 402L630 405.8L616 404.2ZM612.5 395.5L628.2 397.3L629 402L614.1 400.3ZM629 402L644.5 402.6L644.5 406.4L630 405.8ZM628.2 397.3L644.5 398L644.5 402.6L629 402ZM644.5 402.6L660 402.1L659.1 406L644.5 406.4ZM644.5 398L660.9 397.5L660 402.1L644.5 402.6ZM660 402.1L675.1 400.6L673.2 404.5L659.1 406ZM660.9 397.5L676.7 395.9L675.1 400.6L660 402.1ZM675.1 400.6L689.3 398L686.5 402.1L673.2 404.5ZM676.7 395.9L691.6 393.2L689.3 398L675.1 400.6ZM689.3 398L702.1 394.6L698.5 398.8L686.5 402.1ZM691.6 393.2L705.1 389.6L702.1 394.6L689.3 398ZM702.1 394.6L713.3 390.3L709 394.8L698.5 398.8ZM705.1 389.6L716.8 385.1L713.3 390.3L702.1 394.6ZM713.3 390.3L722.4 385.3L717.6 390.1L709 394.8ZM716.8 385.1L726.5 379.9L722.4 385.3L713.3 390.3ZM722.4 385.3L729.4 379.8L724.2 384.9L717.6 390.1ZM726.5 379.9L733.7 374.2L729.4 379.8L722.4 385.3ZM733.7 374.2L738.6 368.1L734 374L729.4 379.8ZM549 360.9L553.6 367.2L556.9 373.3L552.5 367.3ZM553.6 367.2L560.7 373.1L563.8 379.1L556.9 373.3ZM560.7 373.1L570.3 378.5L573.1 384.3L563.8 379.1ZM570.3 378.5L582.1 383.2L584.5 388.9L573.1 384.3ZM582.1 383.2L595.9 387.1L597.7 392.7L584.5 388.9ZM595.9 387.1L611.2 390L612.5 395.5L597.7 392.7ZM611.2 390L627.6 391.9L628.2 397.3L612.5 395.5ZM627.6 391.9L644.5 392.5L644.5 398L628.2 397.3ZM644.5 392.5L661.5 392L660.9 397.5L644.5 398ZM661.5 392L678 390.4L676.7 395.9L660.9 397.5ZM678 390.4L693.5 387.6L691.6 393.2L676.7 395.9ZM693.5 387.6L707.6 383.9L705.1 389.6L691.6 393.2ZM707.6 383.9L719.7 379.3L716.8 385.1L705.1 389.6ZM719.7 379.3L729.7 373.9L726.5 379.9L716.8 385.1ZM729.7 373.9L737.2 368.1L733.7 374.2L726.5 379.9ZM737.2 368.1L742.2 361.8L738.6 368.1L733.7 374.2ZM546.5 354.3L551.2 360.6L553.6 367.2L549 360.9ZM551.2 360.6L558.5 366.6L560.7 373.1L553.6 367.2ZM558.5 366.6L568.3 372.1L570.3 378.5L560.7 373.1ZM568.3 372.1L580.5 376.9L582.1 383.2L570.3 378.5ZM580.5 376.9L594.6 380.9L595.9 387.1L582.1 383.2ZM594.6 380.9L610.3 383.8L611.2 390L595.9 387.1ZM610.3 383.8L627.1 385.7L627.6 391.9L611.2 390ZM627.1 385.7L644.6 386.4L644.5 392.5L627.6 391.9ZM644.6 386.4L662 385.9L661.5 392L644.5 392.5ZM662 385.9L679 384.2L678 390.4L661.5 392ZM679 384.2L694.9 381.4L693.5 387.6L678 390.4ZM694.9 381.4L709.3 377.6L707.6 383.9L693.5 387.6ZM709.3 377.6L721.8 372.9L719.7 379.3L707.6 383.9ZM721.8 372.9L732 367.4L729.7 373.9L719.7 379.3ZM732 367.4L739.7 361.5L737.2 368.1L729.7 373.9ZM739.7 361.5L744.8 355.2L742.2 361.8L737.2 368.1ZM545 347.3L549.8 353.7L551.2 360.6L546.5 354.3ZM544.7 340.1L549.4 346.4L549.8 353.7L545 347.3ZM549.8 353.7L557.2 359.7L558.5 366.6L551.2 360.6ZM549.4 346.4L556.8 352.4L557.2 359.7L549.8 353.7ZM557.2 359.7L567.2 365.2L568.3 372.1L558.5 366.6ZM556.8 352.4L566.9 357.9L567.2 365.2L557.2 359.7ZM567.2 365.2L579.5 370L580.5 376.9L568.3 372.1ZM566.9 357.9L579.2 362.7L579.5 370L567.2 365.2ZM579.5 370L593.8 374L594.6 380.9L580.5 376.9ZM579.2 362.7L593.6 366.6L593.8 374L579.5 370ZM593.8 374L609.8 377L610.3 383.8L594.6 380.9ZM593.6 366.6L609.7 369.6L609.8 377L593.8 374ZM609.8 377L626.9 378.8L627.1 385.7L610.3 383.8ZM609.7 369.6L626.9 371.4L626.9 378.8L609.8 377ZM626.9 378.8L644.6 379.5L644.6 386.4L627.1 385.7ZM626.9 371.4L644.7 372.1L644.6 379.5L626.9 378.8ZM644.6 379.5L662.4 379L662 385.9L644.6 386.4ZM644.7 372.1L662.5 371.6L662.4 379L644.6 379.5ZM662.4 379L679.6 377.3L679 384.2L662 385.9ZM662.5 371.6L679.8 369.9L679.6 377.3L662.4 379ZM679.6 377.3L695.8 374.5L694.9 381.4L679 384.2ZM679.8 369.9L696.1 367.1L695.8 374.5L679.6 377.3ZM695.8 374.5L710.4 370.7L709.3 377.6L694.9 381.4ZM696.1 367.1L710.8 363.3L710.4 370.7L695.8 374.5ZM710.4 370.7L723.1 365.9L721.8 372.9L709.3 377.6ZM710.8 363.3L723.5 358.6L723.1 365.9L710.4 370.7ZM723.1 365.9L733.4 360.5L732 367.4L721.8 372.9ZM723.5 358.6L733.9 353.2L733.4 360.5L723.1 365.9ZM733.4 360.5L741.2 354.5L739.7 361.5L732 367.4ZM733.9 353.2L741.7 347.3L741.2 354.5L733.4 360.5ZM741.2 354.5L746.4 348.2L744.8 355.2L739.7 361.5ZM741.7 347.3L746.9 341L746.4 348.2L741.2 354.5ZM746.4 348.2L748.7 341.7L747.1 348.7L744.8 355.2ZM746.9 341L749.3 334.6L748.7 341.7L746.4 348.2ZM543 340.7L545 347.2L546.4 354.2L544.5 347.7ZM542.6 333.6L544.6 340L545 347.2L543 340.7ZM545.3 332.8L550.1 339L549.4 346.4L544.7 340.1ZM550.1 339L557.5 344.9L556.8 352.4L549.4 346.4ZM557.5 344.9L567.4 350.2L566.9 357.9L556.8 352.4ZM567.4 350.2L579.7 354.9L579.2 362.7L566.9 357.9ZM579.7 354.9L594.1 358.8L593.6 366.6L579.2 362.7ZM594.1 358.8L610 361.6L609.7 369.6L593.6 366.6ZM610 361.6L627.1 363.5L626.9 371.4L609.7 369.6ZM627.1 363.5L644.7 364.1L644.7 372.1L626.9 371.4ZM644.7 364.1L662.5 363.6L662.5 371.6L644.7 372.1ZM662.5 363.6L679.7 362L679.8 369.9L662.5 371.6ZM679.7 362L695.8 359.2L696.1 367.1L679.8 369.9ZM695.8 359.2L710.4 355.5L710.8 363.3L696.1 367.1ZM710.4 355.5L723.1 350.9L723.5 358.6L710.8 363.3ZM723.1 350.9L733.4 345.6L733.9 353.2L723.5 358.6ZM733.4 345.6L741.2 339.8L741.7 347.3L733.9 353.2ZM741.2 339.8L746.3 333.6L746.9 341L741.7 347.3ZM746.3 333.6L748.7 327.3L749.3 334.6L746.9 341ZM748.7 327.3L748.4 321L748.9 328.1L749.3 334.6ZM543.3 326.4L545.3 332.7L544.6 340L542.6 333.6ZM547.1 325.4L551.8 331.4L550.1 339L545.3 332.8ZM551.8 331.4L559.1 337.1L557.5 344.9L550.1 339ZM559.1 337.1L568.9 342.3L567.4 350.2L557.5 344.9ZM568.9 342.3L581 346.8L579.7 354.9L567.4 350.2ZM581 346.8L595.1 350.6L594.1 358.8L579.7 354.9ZM595.1 350.6L610.7 353.4L610 361.6L594.1 358.8ZM610.7 353.4L627.5 355.1L627.1 363.5L610 361.6ZM627.5 355.1L644.8 355.8L644.7 364.1L627.1 363.5ZM644.8 355.8L662.2 355.3L662.5 363.6L644.7 364.1ZM662.2 355.3L679.1 353.7L679.7 362L662.5 363.6ZM679.1 353.7L695 351L695.8 359.2L679.7 362ZM695 351L709.3 347.4L710.4 355.5L695.8 359.2ZM709.3 347.4L721.7 342.9L723.1 350.9L710.4 355.5ZM721.7 342.9L731.9 337.8L733.4 345.6L723.1 350.9ZM731.9 337.8L739.6 332.2L741.2 339.8L733.4 345.6ZM739.6 332.2L744.6 326.2L746.3 333.6L741.2 339.8ZM744.6 326.2L747 320.1L748.7 327.3L746.3 333.6ZM747 320.1L746.7 314L748.4 321L748.7 327.3ZM545.9 313.1L545.1 319.2L543.3 326.4L544.1 320.1ZM545.1 319.2L547.1 325.3L545.3 332.7L543.3 326.4ZM550 318.1L554.6 323.8L551.8 331.4L547.1 325.4ZM554.6 323.8L561.7 329.3L559.1 337.1L551.8 331.4ZM561.7 329.3L571.2 334.2L568.9 342.3L559.1 337.1ZM571.2 334.2L583 338.6L581 346.8L568.9 342.3ZM583 338.6L596.6 342.1L595.1 350.6L581 346.8ZM596.6 342.1L611.8 344.8L610.7 353.4L595.1 350.6ZM611.8 344.8L628.1 346.5L627.5 355.1L610.7 353.4ZM628.1 346.5L644.9 347.1L644.8 355.8L627.5 355.1ZM644.9 347.1L661.8 346.6L662.2 355.3L644.8 355.8ZM661.8 346.6L678.2 345.1L679.1 353.7L662.2 355.3ZM678.2 345.1L693.6 342.5L695 351L679.1 353.7ZM693.6 342.5L707.5 339.1L709.3 347.4L695 351ZM707.5 339.1L719.6 334.8L721.7 342.9L709.3 347.4ZM719.6 334.8L729.5 329.9L731.9 337.8L721.7 342.9ZM729.5 329.9L737 324.5L739.6 332.2L731.9 337.8ZM737 324.5L741.9 318.8L744.6 326.2L739.6 332.2ZM741.9 318.8L744.2 312.9L747 320.1L744.6 326.2ZM744.2 312.9L743.9 307.1L746.7 314L747 320.1ZM548.7 306.3L548 312.1L545.1 319.2L545.9 313.1ZM548 312.1L549.9 318L547.1 325.3L545.1 319.2ZM554 310.8L558.4 316.3L554.6 323.8L550 318.1ZM558.9 303.8L563.1 308.8L558.4 316.3L554 310.8ZM558.4 316.3L565.2 321.4L561.7 329.3L554.6 323.8ZM563.1 308.8L569.7 313.6L565.2 321.4L558.4 316.3ZM565.2 321.4L574.4 326.1L571.2 334.2L561.7 329.3ZM569.7 313.6L578.4 318L574.4 326.1L565.2 321.4ZM574.4 326.1L585.7 330.2L583 338.6L571.2 334.2ZM578.4 318L589.1 321.8L585.7 330.2L574.4 326.1ZM585.7 330.2L598.8 333.5L596.6 342.1L583 338.6ZM589.1 321.8L601.5 324.9L598.8 333.5L585.7 330.2ZM598.8 333.5L613.3 336.1L611.8 344.8L596.6 342.1ZM601.5 324.9L615.2 327.3L613.3 336.1L598.8 333.5ZM613.3 336.1L628.9 337.6L628.1 346.5L611.8 344.8ZM615.2 327.3L629.9 328.7L628.9 337.6L613.3 336.1ZM628.9 337.6L645 338.2L644.9 347.1L628.1 346.5ZM629.9 328.7L645.1 329.3L645 338.2L628.9 337.6ZM645 338.2L661.2 337.8L661.8 346.6L644.9 347.1ZM645.1 329.3L660.4 328.8L661.2 337.8L645 338.2ZM661.2 337.8L676.9 336.3L678.2 345.1L661.8 346.6ZM660.4 328.8L675.2 327.5L676.9 336.3L661.2 337.8ZM676.9 336.3L691.6 333.9L693.6 342.5L678.2 345.1ZM675.2 327.5L689.2 325.3L691.6 333.9L676.9 336.3ZM691.6 333.9L705 330.7L707.5 339.1L693.6 342.5ZM689.2 325.3L701.8 322.2L705 330.7L691.6 333.9ZM705 330.7L716.6 326.6L719.6 334.8L707.5 339.1ZM701.8 322.2L712.8 318.5L716.6 326.6L705 330.7ZM716.6 326.6L726.1 322L729.5 329.9L719.6 334.8ZM712.8 318.5L721.8 314.2L726.1 322L716.6 326.6ZM726.1 322L733.3 316.9L737 324.5L729.5 329.9ZM721.8 314.2L728.6 309.4L733.3 316.9L726.1 322ZM733.3 316.9L738.1 311.5L741.9 318.8L737 324.5ZM728.6 309.4L733.2 304.4L738.1 311.5L733.3 316.9ZM738.1 311.5L740.3 305.9L744.2 312.9L741.9 318.8ZM733.2 304.4L735.4 299.2L740.3 305.9L738.1 311.5ZM740.3 305.9L740.1 300.4L743.9 307.1L744.2 312.9ZM735.4 299.2L735.2 294L740.1 300.4L740.3 305.9ZM740.1 300.4L737.5 295L741.2 301.3L743.9 307.1ZM735.2 294L732.8 288.9L737.5 295L740.1 300.4ZM555.6 294.2L552.6 299.6L548.7 306.3L551.8 300.6ZM560.3 288.3L557.6 293.3L552.6 299.6L555.6 294.2ZM552.6 299.6L552 305.2L548 312.1L548.7 306.3ZM557.6 293.3L557 298.5L552 305.2L552.6 299.6ZM552 305.2L553.9 310.7L549.9 318L548 312.1ZM557 298.5L558.9 303.7L553.9 310.7L552 305.2ZM564.9 297L568.9 301.7L563.1 308.8L558.9 303.8ZM568.9 301.7L575 306L569.7 313.6L563.1 308.8ZM575 306L583.1 310.1L578.4 318L569.7 313.6ZM583.1 310.1L593.1 313.5L589.1 321.8L578.4 318ZM593.1 313.5L604.7 316.4L601.5 324.9L589.1 321.8ZM604.7 316.4L617.5 318.5L615.2 327.3L601.5 324.9ZM617.5 318.5L631.1 319.9L629.9 328.7L615.2 327.3ZM631.1 319.9L645.3 320.4L645.1 329.3L629.9 328.7ZM645.3 320.4L659.5 320L660.4 328.8L645.1 329.3ZM659.5 320L673.2 318.8L675.2 327.5L660.4 328.8ZM673.2 318.8L686.2 316.7L689.2 325.3L675.2 327.5ZM686.2 316.7L698 313.9L701.8 322.2L689.2 325.3ZM698 313.9L708.2 310.5L712.8 318.5L701.8 322.2ZM708.2 310.5L716.6 306.6L721.8 314.2L712.8 318.5ZM716.6 306.6L723 302.2L728.6 309.4L721.8 314.2ZM723 302.2L727.3 297.5L733.2 304.4L728.6 309.4ZM727.3 297.5L729.4 292.8L735.4 299.2L733.2 304.4ZM729.4 292.8L729.4 288L735.2 294L735.4 299.2ZM729.4 288L727.1 283.3L732.8 288.9L735.2 294ZM727.1 283.3L722.9 278.8L728.2 284.1L732.8 288.9ZM565.2 283.5L560.3 288.3L566 282.7L570.5 278.3ZM566 282.7L563.5 287.3L557.6 293.3L560.3 288.3ZM563.5 287.3L563.1 292.1L557 298.5L557.6 293.3ZM563.1 292.1L564.8 296.9L558.9 303.7L557 298.5ZM571.7 290.6L575.5 294.8L568.9 301.7L564.9 297ZM579.5 284.6L582.8 288.3L575.5 294.8L571.7 290.6ZM575.5 294.8L581.1 298.8L575 306L568.9 301.7ZM582.8 288.3L588 291.8L581.1 298.8L575.5 294.8ZM581.1 298.8L588.6 302.4L583.1 310.1L575 306ZM588 291.8L594.7 295L588.6 302.4L581.1 298.8ZM588.6 302.4L597.7 305.5L593.1 313.5L583.1 310.1ZM594.7 295L602.9 297.8L597.7 305.5L588.6 302.4ZM597.7 305.5L608.3 308.1L604.7 316.4L593.1 313.5ZM602.9 297.8L612.4 300.1L608.3 308.1L597.7 305.5ZM608.3 308.1L620 310L617.5 318.5L604.7 316.4ZM612.4 300.1L622.9 301.7L620 310L608.3 308.1ZM620 310L632.5 311.2L631.1 319.9L617.5 318.5ZM622.9 301.7L634 302.8L632.5 311.2L620 310ZM632.5 311.2L645.4 311.6L645.3 320.4L631.1 319.9ZM634 302.8L645.6 303.2L645.4 311.6L632.5 311.2ZM645.4 311.6L658.4 311.3L659.5 320L645.3 320.4ZM645.6 303.2L657.1 302.9L658.4 311.3L645.4 311.6ZM658.4 311.3L670.9 310.2L673.2 318.8L659.5 320ZM657.1 302.9L668.3 301.9L670.9 310.2L658.4 311.3ZM670.9 310.2L682.8 308.3L686.2 316.7L673.2 318.8ZM668.3 301.9L678.9 300.3L682.8 308.3L670.9 310.2ZM682.8 308.3L693.5 305.8L698 313.9L686.2 316.7ZM678.9 300.3L688.6 298.1L693.5 305.8L682.8 308.3ZM693.5 305.8L702.9 302.8L708.2 310.5L698 313.9ZM688.6 298.1L697 295.4L702.9 302.8L693.5 305.8ZM702.9 302.8L710.7 299.2L716.6 306.6L708.2 310.5ZM697 295.4L704 292.2L710.7 299.2L702.9 302.8ZM710.7 299.2L716.6 295.3L723 302.2L716.6 306.6ZM704 292.2L709.3 288.7L716.6 295.3L710.7 299.2ZM716.6 295.3L720.6 291.1L727.3 297.5L723 302.2ZM709.3 288.7L713 285L720.6 291.1L716.6 295.3ZM720.6 291.1L722.6 286.7L729.4 292.8L727.3 297.5ZM713 285L714.8 281.2L722.6 286.7L720.6 291.1ZM722.6 286.7L722.5 282.4L729.4 288L729.4 292.8ZM714.8 281.2L714.8 277.3L722.5 282.4L722.6 286.7ZM722.5 282.4L720.6 278.1L727.1 283.3L729.4 288ZM714.8 277.3L713.1 273.5L720.6 278.1L722.5 282.4ZM720.6 278.1L716.7 274.1L722.9 278.8L727.1 283.3ZM713.1 273.5L709.7 269.9L716.7 274.1L720.6 278.1ZM709.7 269.9L704.8 266.6L711.2 270.3L716.7 274.1ZM588.9 266.2L583.7 269.5L576.7 273.6L582.5 269.9ZM576.7 273.6L572.6 277.6L566 282.7L570.5 278.3ZM583.7 269.5L580.1 273.1L572.6 277.6L576.7 273.6ZM572.6 277.6L570.4 281.8L563.5 287.3L566 282.7ZM580.1 273.1L578.1 276.8L570.4 281.8L572.6 277.6ZM570.4 281.8L570 286.2L563.1 292.1L563.5 287.3ZM578.1 276.8L577.9 280.7L570 286.2L570.4 281.8ZM570 286.2L571.7 290.5L564.8 296.9L563.1 292.1ZM577.9 280.7L579.4 284.5L571.7 290.5L570 286.2ZM587.9 279.1L590.9 282.4L582.8 288.3L579.5 284.6ZM597 274.3L599.6 276.9L590.9 282.4L587.9 279.1ZM590.9 282.4L595.4 285.4L588 291.8L582.8 288.3ZM599.6 276.9L603.5 279.5L595.4 285.4L590.9 282.4ZM595.4 285.4L601.4 288.1L594.7 295L588 291.8ZM603.5 279.5L608.5 281.7L601.4 288.1L595.4 285.4ZM601.4 288.1L608.6 290.5L602.9 297.8L594.7 295ZM608.5 281.7L614.6 283.7L608.6 290.5L601.4 288.1ZM608.6 290.5L616.8 292.4L612.4 300.1L602.9 297.8ZM614.6 283.7L621.6 285.3L616.8 292.4L608.6 290.5ZM616.8 292.4L625.9 293.9L622.9 301.7L612.4 300.1ZM621.6 285.3L629.2 286.5L625.9 293.9L616.8 292.4ZM625.9 293.9L635.7 294.8L634 302.8L622.9 301.7ZM629.2 286.5L637.4 287.3L635.7 294.8L625.9 293.9ZM635.7 294.8L645.7 295.1L645.6 303.2L634 302.8ZM637.4 287.3L645.8 287.5L645.7 295.1L635.7 294.8ZM645.7 295.1L655.7 294.9L657.1 302.9L645.6 303.2ZM645.8 287.5L654.3 287.3L655.7 294.9L645.7 295.1ZM655.7 294.9L665.5 294L668.3 301.9L657.1 302.9ZM654.3 287.3L662.5 286.6L665.5 294L655.7 294.9ZM665.5 294L674.8 292.6L678.9 300.3L668.3 301.9ZM662.5 286.6L670.3 285.5L674.8 292.6L665.5 294ZM674.8 292.6L683.2 290.7L688.6 298.1L678.9 300.3ZM670.3 285.5L677.4 283.9L683.2 290.7L674.8 292.6ZM683.2 290.7L690.5 288.4L697 295.4L688.6 298.1ZM677.4 283.9L683.6 282L690.5 288.4L683.2 290.7ZM690.5 288.4L696.6 285.7L704 292.2L697 295.4ZM683.6 282L688.8 279.7L696.6 285.7L690.5 288.4ZM696.6 285.7L701.4 282.7L709.3 288.7L704 292.2ZM688.8 279.7L692.8 277.2L701.4 282.7L696.6 285.7ZM701.4 282.7L704.6 279.5L713 285L709.3 288.7ZM692.8 277.2L695.5 274.5L704.6 279.5L701.4 282.7ZM704.6 279.5L706.2 276.2L714.8 281.2L713 285ZM695.5 274.5L697 271.8L706.2 276.2L704.6 279.5ZM706.2 276.2L706.3 272.8L714.8 277.3L714.8 281.2ZM697 271.8L697.1 269L706.3 272.8L706.2 276.2ZM706.3 272.8L704.9 269.5L713.1 273.5L714.8 277.3ZM697.1 269L696 266.2L704.9 269.5L706.3 272.8ZM704.9 269.5L702 266.4L709.7 269.9L713.1 273.5ZM696 266.2L693.5 263.5L702 266.4L704.9 269.5ZM702 266.4L697.7 263.5L704.8 266.6L709.7 269.9ZM693.5 263.5L689.9 261.1L697.7 263.5L702 266.4ZM697.7 263.5L692.1 260.8L698.4 263.5L704.8 266.6ZM689.9 261.1L685.3 258.9L692.1 260.8L697.7 263.5ZM685.3 258.9L679.7 256.9L685.5 258.5L692.1 260.8ZM614.1 256.7L608.4 258.6L601.6 260.5L608.4 258.3ZM601.6 260.5L595.9 263.1L588.9 266.2L595.4 263.2ZM608.4 258.6L603.6 260.8L595.9 263.1L601.6 260.5ZM595.9 263.1L591.4 266L583.7 269.5L588.9 266.2ZM603.6 260.8L599.8 263.2L591.4 266L595.9 263.1ZM591.4 266L588.3 269.1L580.1 273.1L583.7 269.5ZM599.8 263.2L597.2 265.9L588.3 269.1L591.4 266ZM588.3 269.1L586.6 272.4L578.1 276.8L580.1 273.1ZM597.2 265.9L595.8 268.6L586.6 272.4L588.3 269.1ZM586.6 272.4L586.5 275.7L577.9 280.7L578.1 276.8ZM595.8 268.6L595.8 271.4L586.5 275.7L586.6 272.4ZM586.5 275.7L587.9 279.1L579.4 284.5L577.9 280.7ZM595.8 271.4L597 274.2L587.9 279.1L586.5 275.7ZM606.7 270L608.8 272.2L599.6 276.9L597 274.3ZM616.8 266.5L618.4 268L608.8 272.2L606.7 270ZM627.2 263.6L628.3 264.7L618.4 268L616.8 266.5ZM637.8 261.6L638.3 262.1L628.3 264.7L627.2 263.6ZM648.4 260.3L648.3 260.2L638.3 262.1L637.8 261.6ZM648.4 260.3L648.3 260.2L658.3 259.2L659 259.9ZM659 259.9L658.3 259.2L668 259L669.4 260.2ZM669.4 260.2L668 259L677.4 259.6L679.4 261.4ZM679.4 261.4L677.4 259.6L686.4 261L689.1 263.2ZM608.8 272.2L612 274.2L603.5 279.5L599.6 276.9ZM618.4 268L620.8 269.5L612 274.2L608.8 272.2ZM628.3 264.7L629.8 265.6L620.8 269.5L618.4 268ZM638.3 262.1L639 262.5L629.8 265.6L628.3 264.7ZM648.3 260.2L648.2 260.1L639 262.5L638.3 262.1ZM648.3 260.2L648.2 260.1L657.2 258.6L658.3 259.2ZM658.3 259.2L657.2 258.6L666.1 257.9L668 259ZM668 259L666.1 257.9L674.6 258L677.4 259.6ZM677.4 259.6L674.6 258L682.8 258.9L686.4 261ZM612 274.2L616 276L608.5 281.7L603.5 279.5ZM620.8 269.5L623.8 270.9L616 276L612 274.2ZM629.8 265.6L631.8 266.5L623.8 270.9L620.8 269.5ZM639 262.5L639.9 262.9L631.8 266.5L629.8 265.6ZM648.2 260.1L648 260.1L639.9 262.9L639 262.5ZM648.2 260.1L648 260.1L655.9 258.1L657.2 258.6ZM657.2 258.6L655.9 258.1L663.7 256.9L666.1 257.9ZM666.1 257.9L663.7 256.9L671.1 256.6L674.6 258ZM674.6 258L671.1 256.6L678.3 257.1L682.8 258.9ZM616 276L620.9 277.5L614.6 283.7L608.5 281.7ZM623.8 270.9L627.5 272L620.9 277.5L616 276ZM631.8 266.5L634.2 267.2L627.5 272L623.8 270.9ZM639.9 262.9L641 263.2L634.2 267.2L631.8 266.5ZM648 260.1L647.7 260L641 263.2L639.9 262.9ZM648 260.1L647.7 260L654.4 257.6L655.9 258.1ZM655.9 258.1L654.4 257.6L660.8 256.1L663.7 256.9ZM663.7 256.9L660.8 256.1L667 255.4L671.1 256.6ZM671.1 256.6L667 255.4L673 255.5L678.3 257.1ZM620.9 277.5L626.5 278.8L621.6 285.3L614.6 283.7ZM627.5 272L631.7 273L626.5 278.8L620.9 277.5ZM634.2 267.2L636.9 267.8L631.7 273L627.5 272ZM641 263.2L642.2 263.5L636.9 267.8L634.2 267.2ZM647.7 260L647.4 259.9L642.2 263.5L641 263.2ZM647.7 260L647.4 259.9L652.6 257.2L654.4 257.6ZM654.4 257.6L652.6 257.2L657.6 255.4L660.8 256.1ZM660.8 256.1L657.6 255.4L662.4 254.4L667 255.4ZM667 255.4L662.4 254.4L667 254.3L673 255.5ZM626.5 278.8L632.7 279.8L629.2 286.5L621.6 285.3ZM631.7 273L636.2 273.6L632.7 279.8L626.5 278.8ZM636.9 267.8L639.9 268.3L636.2 273.6L631.7 273ZM642.2 263.5L643.5 263.7L639.9 268.3L636.9 267.8ZM647.4 259.9L647.1 259.9L643.5 263.7L642.2 263.5ZM647.4 259.9L647.1 259.9L650.7 257L652.6 257.2ZM652.6 257.2L650.7 257L654.1 254.9L657.6 255.4ZM657.6 255.4L654.1 254.9L657.5 253.7L662.4 254.4ZM662.4 254.4L657.5 253.7L660.6 253.4L667 254.3ZM632.7 279.8L639.2 280.3L637.4 287.3L629.2 286.5ZM636.2 273.6L641.1 274.1L639.2 280.3L632.7 279.8ZM639.9 268.3L643 268.5L641.1 274.1L636.2 273.6ZM643.5 263.7L644.9 263.8L643 268.5L639.9 268.3ZM647.1 259.9L646.8 259.9L644.9 263.8L643.5 263.7ZM647.1 259.9L646.8 259.9L648.7 256.8L650.7 257ZM650.7 257L648.7 256.8L650.5 254.6L654.1 254.9ZM654.1 254.9L650.5 254.6L652.2 253.2L657.5 253.7ZM657.5 253.7L652.2 253.2L653.8 252.8L660.6 253.4ZM639.2 280.3L646 280.6L645.8 287.5L637.4 287.3ZM641.1 274.1L646.1 274.2L646 280.6L639.2 280.3ZM643 268.5L646.3 268.6L646.1 274.2L641.1 274.1ZM644.9 263.8L646.4 263.8L646.3 268.6L643 268.5ZM646.8 259.9L646.5 259.8L646.4 263.8L644.9 263.8ZM646.8 259.9L646.5 259.8L646.6 256.7L648.7 256.8ZM648.7 256.8L646.6 256.7L646.7 254.5L650.5 254.6ZM650.5 254.6L646.7 254.5L646.8 253.1L652.2 253.2ZM652.2 253.2L646.8 253.1L646.9 252.6L653.8 252.8ZM646 280.6L652.7 280.4L654.3 287.3L645.8 287.5ZM646.1 274.2L651.1 274.1L652.7 280.4L646 280.6ZM646.3 268.6L649.5 268.6L651.1 274.1L646.1 274.2ZM646.4 263.8L647.8 263.8L649.5 268.6L646.3 268.6ZM646.5 259.8L646.2 259.9L647.8 263.8L646.4 263.8ZM646.5 259.8L646.2 259.9L644.5 256.8L646.6 256.7ZM646.6 256.7L644.5 256.8L642.9 254.6L646.7 254.5ZM646.7 254.5L642.9 254.6L641.4 253.2L646.8 253.1ZM646.8 253.1L641.4 253.2L639.9 252.7L646.9 252.6ZM652.7 280.4L659.3 279.8L662.5 286.6L654.3 287.3ZM651.1 274.1L656 273.7L659.3 279.8L652.7 280.4ZM649.5 268.6L652.7 268.3L656 273.7L651.1 274.1ZM647.8 263.8L649.2 263.7L652.7 268.3L649.5 268.6ZM646.2 259.9L645.9 259.9L649.2 263.7L647.8 263.8ZM646.2 259.9L645.9 259.9L642.5 256.9L644.5 256.8ZM644.5 256.8L642.5 256.9L639.3 254.8L642.9 254.6ZM642.9 254.6L639.3 254.8L636.1 253.6L641.4 253.2ZM641.4 253.2L636.1 253.6L633.1 253.3L639.9 252.7ZM659.3 279.8L665.6 278.9L670.3 285.5L662.5 286.6ZM656 273.7L660.7 273L665.6 278.9L659.3 279.8ZM652.7 268.3L655.6 267.9L660.7 273L656 273.7ZM649.2 263.7L650.6 263.5L655.6 267.9L652.7 268.3ZM645.9 259.9L645.6 259.9L650.6 263.5L649.2 263.7ZM645.9 259.9L645.6 259.9L640.6 257.2L642.5 256.9ZM642.5 256.9L640.6 257.2L635.7 255.3L639.3 254.8ZM639.3 254.8L635.7 255.3L631.1 254.3L636.1 253.6ZM636.1 253.6L631.1 254.3L626.7 254.2L633.1 253.3ZM665.6 278.9L671.2 277.7L677.4 283.9L670.3 285.5ZM660.7 273L664.9 272.1L671.2 277.7L665.6 278.9ZM655.6 267.9L658.4 267.3L664.9 272.1L660.7 273ZM650.6 263.5L651.8 263.2L658.4 267.3L655.6 267.9ZM645.6 259.9L645.3 260L651.8 263.2L650.6 263.5ZM645.6 259.9L645.3 260L638.8 257.6L640.6 257.2ZM640.6 257.2L638.8 257.6L632.5 256L635.7 255.3ZM635.7 255.3L632.5 256L626.4 255.3L631.1 254.3ZM631.1 254.3L626.4 255.3L620.7 255.4L626.7 254.2ZM671.2 277.7L676.2 276.1L683.6 282L677.4 283.9ZM664.9 272.1L668.6 271L676.2 276.1L671.2 277.7ZM658.4 267.3L660.8 266.6L668.6 271L664.9 272.1ZM651.8 263.2L652.9 262.9L660.8 266.6L658.4 267.3ZM645.3 260L645 260.1L652.9 262.9L651.8 263.2ZM645.3 260L645 260.1L637.2 258L638.8 257.6ZM638.8 257.6L637.2 258L629.6 256.8L632.5 256ZM632.5 256L629.6 256.8L622.3 256.5L626.4 255.3ZM626.4 255.3L622.3 256.5L615.3 256.9L620.7 255.4ZM676.2 276.1L680.4 274.4L688.8 279.7L683.6 282ZM668.6 271L671.8 269.7L680.4 274.4L676.2 276.1ZM660.8 266.6L662.9 265.7L671.8 269.7L668.6 271ZM652.9 262.9L653.8 262.5L662.9 265.7L660.8 266.6ZM645 260.1L644.8 260.1L653.8 262.5L652.9 262.9ZM645 260.1L644.8 260.1L635.9 258.6L637.2 258ZM637.2 258L635.9 258.6L627.1 257.8L629.6 256.8ZM629.6 256.8L627.1 257.8L618.7 257.9L622.3 256.5ZM622.3 256.5L618.7 257.9L610.6 258.7L615.3 256.9ZM680.4 274.4L683.7 272.4L692.8 277.2L688.8 279.7ZM671.8 269.7L674.2 268.2L683.7 272.4L680.4 274.4ZM662.9 265.7L664.5 264.8L674.2 268.2L671.8 269.7ZM653.8 262.5L654.6 262.1L664.5 264.8L662.9 265.7ZM644.8 260.1L644.6 260.2L654.6 262.1L653.8 262.5ZM644.8 260.1L644.6 260.2L634.8 259.2L635.9 258.6ZM635.9 258.6L634.8 259.2L625.1 258.9L627.1 257.8ZM627.1 257.8L625.1 258.9L615.8 259.5L618.7 257.9ZM618.7 257.9L615.8 259.5L606.9 260.8L610.6 258.7ZM683.7 272.4L686 270.2L695.5 274.5L692.8 277.2ZM674.2 268.2L675.9 266.6L686 270.2L683.7 272.4ZM664.5 264.8L665.6 263.8L675.9 266.6L674.2 268.2ZM654.6 262.1L655.1 261.6L665.6 263.8L664.5 264.8ZM644.6 260.2L644.5 260.3L655.1 261.6L654.6 262.1ZM644.6 260.2L644.5 260.3L634 259.8L634.8 259.2ZM634.8 259.2L634 259.8L623.7 260.1L625.1 258.9ZM625.1 258.9L623.7 260.1L613.7 261.2L615.8 259.5ZM615.8 259.5L613.7 261.2L604.1 263L606.9 260.8ZM686 270.2L687.2 268L697 271.8L695.5 274.5ZM675.9 266.6L676.9 265L687.2 268L686 270.2ZM665.6 263.8L666.3 262.7L676.9 265L675.9 266.6ZM655.1 261.6L655.4 261.2L666.3 262.7L665.6 263.8ZM644.5 260.3L644.5 260.4L655.4 261.2L655.1 261.6ZM644.5 260.3L644.5 260.4L633.6 260.5L634 259.8ZM634 259.8L633.6 260.5L622.8 261.4L623.7 260.1ZM623.7 260.1L622.8 261.4L612.4 263L613.7 261.2ZM613.7 261.2L612.4 263L602.4 265.4L604.1 263ZM687.2 268L687.3 265.8L697.1 269L697 271.8ZM676.9 265L677 263.3L687.3 265.8L687.2 268ZM666.3 262.7L666.4 261.6L677 263.3L676.9 265ZM655.4 261.2L655.5 260.7L666.4 261.6L666.3 262.7ZM644.5 260.4L644.4 260.6L655.5 260.7L655.4 261.2ZM644.5 260.4L644.4 260.6L633.4 261.2L633.6 260.5ZM633.6 260.5L633.4 261.2L622.6 262.7L622.8 261.4ZM622.8 261.4L622.6 262.7L612 264.9L612.4 263ZM612.4 263L612 264.9L601.8 267.8L602.4 265.4ZM687.3 265.8L686.4 263.6L696 266.2L697.1 269ZM677 263.3L676.4 261.7L686.4 263.6L687.3 265.8ZM666.4 261.6L666 260.5L676.4 261.7L677 263.3ZM655.5 260.7L655.3 260.2L666 260.5L666.4 261.6ZM644.4 260.6L644.5 260.7L655.3 260.2L655.5 260.7ZM644.4 260.6L644.5 260.7L633.6 261.9L633.4 261.2ZM633.4 261.2L633.6 261.9L622.9 264L622.6 262.7ZM622.6 262.7L622.9 264L612.4 266.7L612 264.9ZM612 264.9L612.4 266.7L602.3 270.3L601.8 267.8ZM686.4 263.6L684.5 261.4L693.5 263.5L696 266.2ZM676.4 261.7L675 260.1L684.5 261.4L686.4 263.6ZM666 260.5L665.1 259.5L675 260.1L676.4 261.7ZM655.3 260.2L654.9 259.7L665.1 259.5L666 260.5ZM644.5 260.7L644.6 260.8L654.9 259.7L655.3 260.2ZM644.5 260.7L644.6 260.8L634.2 262.6L633.6 261.9ZM633.6 261.9L634.2 262.6L623.9 265.2L622.9 264ZM622.9 264L623.9 265.2L613.8 268.6L612.4 266.7ZM612.4 266.7L613.8 268.6L604.1 272.7L602.3 270.3ZM684.5 261.4L681.6 259.4L689.9 261.1L693.5 263.5ZM675 260.1L672.9 258.6L681.6 259.4L684.5 261.4ZM665.1 259.5L663.7 258.5L672.9 258.6L675 260.1ZM654.9 259.7L654.3 259.3L663.7 258.5L665.1 259.5ZM644.6 260.8L644.7 260.9L654.3 259.3L654.9 259.7ZM644.6 260.8L644.7 260.9L635 263.2L634.2 262.6ZM634.2 262.6L635 263.2L625.5 266.4L623.9 265.2ZM623.9 265.2L625.5 266.4L616 270.3L613.8 268.6ZM613.8 268.6L616 270.3L606.9 274.9L604.1 272.7ZM681.6 259.4L677.9 257.6L685.3 258.9L689.9 261.1ZM672.9 258.6L670.1 257.2L677.9 257.6L681.6 259.4ZM663.7 258.5L661.9 257.7L670.1 257.2L672.9 258.6ZM654.3 259.3L653.5 258.9L661.9 257.7L663.7 258.5ZM644.7 260.9L644.9 261L653.5 258.9L654.3 259.3ZM644.7 260.9L644.9 261L636.2 263.8L635 263.2ZM635 263.2L636.2 263.8L627.6 267.5L625.5 266.4ZM625.5 266.4L627.6 267.5L619.1 271.9L616 270.3ZM616 270.3L619.1 271.9L610.8 277L606.9 274.9ZM677.9 257.6L673.4 256.1L679.7 256.9L685.3 258.9ZM670.1 257.2L666.7 256.1L673.4 256.1L677.9 257.6ZM661.9 257.7L659.7 256.9L666.7 256.1L670.1 257.2ZM653.5 258.9L652.5 258.5L659.7 256.9L661.9 257.7ZM644.9 261L645.1 261L652.5 258.5L653.5 258.9ZM644.9 261L645.1 261L637.6 264.4L636.2 263.8ZM636.2 263.8L637.6 264.4L630.2 268.5L627.6 267.5ZM627.6 267.5L630.2 268.5L622.9 273.3L619.1 271.9ZM619.1 271.9L622.9 273.3L615.7 278.9L610.8 277ZM673.4 256.1L668.2 254.8L673.3 255.3L679.7 256.9ZM666.7 256.1L662.8 255.1L668.2 254.8L673.4 256.1ZM659.7 256.9L657.2 256.2L662.8 255.1L666.7 256.1ZM652.5 258.5L651.3 258.3L657.2 256.2L659.7 256.9ZM645.1 261L645.4 261.1L651.3 258.3L652.5 258.5ZM645.1 261L645.4 261.1L639.3 264.8L637.6 264.4ZM637.6 264.4L639.3 264.8L633.3 269.3L630.2 268.5ZM630.2 268.5L633.3 269.3L627.3 274.5L622.9 273.3ZM622.9 273.3L627.3 274.5L621.5 280.5L615.7 278.9ZM668.2 254.8L662.5 253.8L666.2 254.1L673.3 255.3ZM662.8 255.1L658.6 254.3L662.5 253.8L668.2 254.8ZM657.2 256.2L654.4 255.7L658.6 254.3L662.8 255.1ZM651.3 258.3L650.1 258L654.4 255.7L657.2 256.2ZM645.4 261.1L645.7 261.2L650.1 258L651.3 258.3ZM645.4 261.1L645.7 261.2L641.2 265.1L639.3 264.8ZM639.3 264.8L641.2 265.1L636.7 269.9L633.3 269.3ZM633.3 269.3L636.7 269.9L632.2 275.5L627.3 274.5ZM627.3 274.5L632.2 275.5L627.9 281.7L621.5 280.5ZM662.5 253.8L656.4 253.1L658.7 253.2L666.2 254.1ZM658.6 254.3L654 253.8L656.4 253.1L662.5 253.8ZM654.4 255.7L651.4 255.4L654 253.8L658.6 254.3ZM650.1 258L648.7 257.9L651.4 255.4L654.4 255.7ZM645.7 261.2L646 261.2L648.7 257.9L650.1 258ZM645.7 261.2L646 261.2L643.2 265.4L641.2 265.1ZM641.2 265.1L643.2 265.4L640.4 270.4L636.7 269.9ZM636.7 269.9L640.4 270.4L637.6 276.1L632.2 275.5ZM632.2 275.5L637.6 276.1L634.9 282.6L627.9 281.7ZM656.4 253.1L650.1 252.7L650.9 252.8L658.7 253.2ZM654 253.8L649.2 253.5L650.1 252.7L656.4 253.1ZM651.4 255.4L648.3 255.2L649.2 253.5L654 253.8ZM648.7 257.9L647.3 257.8L648.3 255.2L651.4 255.4ZM646 261.2L646.3 261.2L647.3 257.8L648.7 257.9ZM646 261.2L646.3 261.2L645.3 265.5L643.2 265.4ZM643.2 265.4L645.3 265.5L644.2 270.6L640.4 270.4ZM640.4 270.4L644.2 270.6L643.2 276.4L637.6 276.1ZM637.6 276.1L643.2 276.4L642.1 283L634.9 282.6ZM649.2 253.5L644.4 253.5L643.7 252.7L650.1 252.7ZM648.3 255.2L645.1 255.2L644.4 253.5L649.2 253.5ZM647.3 257.8L645.9 257.8L645.1 255.2L648.3 255.2ZM646.3 261.2L646.6 261.2L645.9 257.8L647.3 257.8ZM646.3 261.2L646.6 261.2L647.4 265.5L645.3 265.5ZM645.3 265.5L647.4 265.5L648.1 270.6L644.2 270.6ZM644.2 270.6L648.1 270.6L648.9 276.5L643.2 276.4ZM643.2 276.4L648.9 276.5L649.6 283L642.1 283ZM643.1 252.7L635.3 253.1L637.4 253L643.7 252.7ZM644.4 253.5L639.6 253.8L637.4 253L643.7 252.7ZM645.1 255.2L642 255.4L639.6 253.8L644.4 253.5ZM645.9 257.8L644.4 257.9L642 255.4L645.1 255.2ZM646.6 261.2L646.9 261.2L644.4 257.9L645.9 257.8ZM646.6 261.2L646.9 261.2L649.5 265.4L647.4 265.5ZM647.4 265.5L649.5 265.4L652 270.4L648.1 270.6ZM648.1 270.6L652 270.4L654.5 276.2L648.9 276.5ZM648.9 276.5L654.5 276.2L656.9 282.6L649.6 283ZM637.4 253L631.3 253.7L627.7 253.9L635.3 253.1ZM639.6 253.8L635 254.3L631.3 253.7L637.4 253ZM642 255.4L639 255.7L635 254.3L639.6 253.8ZM644.4 257.9L643.1 258L639 255.7L642 255.4ZM646.9 261.2L647.3 261.2L643.1 258L644.4 257.9ZM646.9 261.2L647.3 261.2L651.5 265.2L649.5 265.4ZM649.5 265.4L651.5 265.2L655.7 270L652 270.4ZM652 270.4L655.7 270L659.9 275.6L654.5 276.2ZM654.5 276.2L659.9 275.6L663.9 281.8L656.9 282.6ZM631.3 253.7L625.5 254.6L620.6 255.1L627.7 253.9ZM635 254.3L630.7 255L625.5 254.6L631.3 253.7ZM639 255.7L636.2 256.2L630.7 255L635 254.3ZM643.1 258L641.8 258.2L636.2 256.2L639 255.7ZM647.3 261.2L647.5 261.1L641.8 258.2L643.1 258ZM647.3 261.2L647.5 261.1L653.4 264.8L651.5 265.2ZM651.5 265.2L653.4 264.8L659.2 269.4L655.7 270ZM655.7 270L659.2 269.4L664.9 274.7L659.9 275.6ZM659.9 275.6L664.9 274.7L670.4 280.7L663.9 281.8ZM625.5 254.6L620.3 255.9L614.1 256.7L620.6 255.1ZM630.7 255L626.8 255.9L620.3 255.9L625.5 254.6ZM636.2 256.2L633.6 256.8L626.8 255.9L630.7 255ZM641.8 258.2L640.6 258.5L633.6 256.8L636.2 256.2ZM647.5 261.1L647.8 261L640.6 258.5L641.8 258.2ZM647.5 261.1L647.8 261L655.1 264.4L653.4 264.8ZM653.4 264.8L655.1 264.4L662.3 268.6L659.2 269.4ZM659.2 269.4L662.3 268.6L669.4 273.5L664.9 274.7ZM664.9 274.7L669.4 273.5L676.3 279.1L670.4 280.7ZM620.3 255.9L615.6 257.5L608.4 258.6L614.1 256.7ZM626.8 255.9L623.3 257.1L615.6 257.5L620.3 255.9ZM633.6 256.8L631.3 257.6L623.3 257.1L626.8 255.9ZM640.6 258.5L639.6 258.9L631.3 257.6L633.6 256.8ZM647.8 261L648 261L639.6 258.9L640.6 258.5ZM647.8 261L648 261L656.5 263.9L655.1 264.4ZM655.1 264.4L656.5 263.9L665 267.6L662.3 268.6ZM662.3 268.6L665 267.6L673.3 272.1L669.4 273.5ZM669.4 273.5L673.3 272.1L681.4 277.3L676.3 279.1ZM615.6 257.5L611.8 259.2L603.6 260.8L608.4 258.6ZM623.3 257.1L620.4 258.4L611.8 259.2L615.6 257.5ZM631.3 257.6L629.5 258.4L620.4 258.4L623.3 257.1ZM639.6 258.9L638.8 259.2L629.5 258.4L631.3 257.6ZM648 261L648.2 260.9L638.8 259.2L639.6 258.9ZM648 261L648.2 260.9L657.7 263.3L656.5 263.9ZM656.5 263.9L657.7 263.3L667.2 266.5L665 267.6ZM665 267.6L667.2 266.5L676.5 270.5L673.3 272.1ZM673.3 272.1L676.5 270.5L685.4 275.2L681.4 277.3ZM611.8 259.2L608.8 261.2L599.8 263.2L603.6 260.8ZM620.4 258.4L618.2 259.9L608.8 261.2L611.8 259.2ZM629.5 258.4L628 259.4L618.2 259.9L620.4 258.4ZM638.8 259.2L638.1 259.7L628 259.4L629.5 258.4ZM648.2 260.9L648.4 260.8L638.1 259.7L638.8 259.2ZM648.2 260.9L648.4 260.8L658.7 262.7L657.7 263.3ZM657.7 263.3L658.7 262.7L668.8 265.4L667.2 266.5ZM667.2 266.5L668.8 265.4L678.8 268.8L676.5 270.5ZM676.5 270.5L678.8 268.8L688.5 273L685.4 275.2ZM608.8 261.2L606.7 263.3L597.2 265.9L599.8 263.2ZM618.2 259.9L616.7 261.5L606.7 263.3L608.8 261.2ZM628 259.4L627.1 260.4L616.7 261.5L618.2 259.9ZM638.1 259.7L637.7 260.1L627.1 260.4L628 259.4ZM648.4 260.8L648.5 260.7L637.7 260.1L638.1 259.7ZM648.4 260.8L648.5 260.7L659.3 262L658.7 262.7ZM658.7 262.7L659.3 262L669.9 264.1L668.8 265.4ZM668.8 265.4L669.9 264.1L680.3 267L678.8 268.8ZM678.8 268.8L680.3 267L690.3 270.6L688.5 273ZM606.7 263.3L605.6 265.5L595.8 268.6L597.2 265.9ZM616.7 261.5L615.9 263.1L605.6 265.5L606.7 263.3ZM627.1 260.4L626.6 261.5L615.9 263.1L616.7 261.5ZM637.7 260.1L637.5 260.6L626.6 261.5L627.1 260.4ZM648.5 260.7L648.5 260.6L637.5 260.6L637.7 260.1ZM648.5 260.7L648.5 260.6L659.5 261.3L659.3 262ZM659.3 262L659.5 261.3L670.4 262.8L669.9 264.1ZM669.9 264.1L670.4 262.8L680.9 265.1L680.3 267ZM680.3 267L680.9 265.1L691.1 268.1L690.3 270.6ZM605.6 265.5L605.6 267.7L595.8 271.4L595.8 268.6ZM615.9 263.1L616 264.8L605.6 267.7L605.6 265.5ZM626.6 261.5L626.6 262.6L616 264.8L615.9 263.1ZM637.5 260.6L637.5 261.1L626.6 262.6L626.6 261.5ZM648.5 260.6L648.5 260.5L637.5 261.1L637.5 260.6ZM648.5 260.6L648.5 260.5L659.4 260.6L659.5 261.3ZM659.5 261.3L659.4 260.6L670.2 261.5L670.4 262.8ZM670.4 262.8L670.2 261.5L680.6 263.2L680.9 265.1ZM680.9 265.1L680.6 263.2L690.7 265.7L691.1 268.1ZM605.6 267.7L606.7 270L597 274.2L595.8 271.4ZM616 264.8L616.8 266.4L606.7 270L605.6 267.7ZM626.6 262.6L627.2 263.6L616.8 266.4L616 264.8ZM637.5 261.1L637.8 261.6L627.2 263.6L626.6 262.6ZM648.5 260.5L648.4 260.3L637.8 261.6L637.5 261.1ZM648.5 260.5L648.4 260.3L659 259.9L659.4 260.6ZM659.4 260.6L659 259.9L669.4 260.2L670.2 261.5ZM670.2 261.5L669.4 260.2L679.5 261.4L680.6 263.2ZM680.6 263.2L679.5 261.4L689.1 263.3L690.7 265.7Z"/>
   <g shape-rendering="crispEdges"><path fill="#ff9d40" d="M738.9 388L736.4 385.2L733.5 382.5L730.2 379.9L726.6 377.5L722.5 375.1L718.1 372.9L713.5 370.9L708.5 369L703.2 367.2L697.7 365.6L692 364.2L686.1 362.9L680 361.8L673.8 360.9L667.5 360.2L661.1 359.6L654.6 359.3L648.1 359.1L641.6 359.1L635.1 359.3L628.6 359.7L622.2 360.3L615.9 361L609.8 361.9L603.7 363.1L597.8 364.3L592.2 365.8L586.7 367.4L581.5 369.2L576.6 371.1L572 373.2L567.6 375.4L563.7 377.8L560 380.3L556.8 382.8L554 385.5L551.6 388.3L549.6 391.2L548.1 394.1L547 397.1L546.4 400.1L546.4 403.1L546.8 406.2L547.7 409.2L549.1 412.3L551 415.3L553.5 418.2L556.4 421.1L559.8 423.8L563.7 426.5L568 429.1L572.8 431.5L578 433.8L583.6 435.9L589.5 437.8L595.8 439.5L602.4 441L609.2 442.3L616.3 443.4L623.5 444.2L630.9 444.8L638.3 445.2L645.8 445.3L653.3 445.2L660.7 444.8L668.1 444.2L675.3 443.3L682.3 442.2L689.1 440.9L695.7 439.4L701.9 437.6L707.9 435.7L713.4 433.6L718.6 431.3L723.3 428.8L727.6 426.3L731.4 423.6L734.8 420.8L737.7 417.9L740 415L741.9 412L743.3 408.9L744.1 405.9L744.5 402.8L744.3 399.8L743.7 396.7L742.6 393.8L741 390.8L738.9 388Z"/>
<path fill="#ffb540" d="M675.7 395.5L673.8 393.5L682.2 391.8L684.6 394.4ZM666.4 396.6L665.1 395.2L673.8 393.5L675.7 395.5ZM656.8 397.8L656.1 397L665.1 395.2L666.4 396.6ZM647.1 399L647 398.8L656.1 397L656.8 397.8ZM647.1 399L647 398.8L637.8 400.7L637.3 400.1ZM637.3 400.1L637.8 400.7L628.6 402.5L627.6 401.3ZM627.6 401.3L628.6 402.5L619.5 404.3L618 402.5ZM618 402.5L619.5 404.3L610.7 406.1L608.7 403.6ZM608.7 403.6L610.7 406.1L602.2 407.8L599.8 404.7ZM599.8 404.7L602.2 407.8L594.1 409.4L591.3 405.7ZM673.8 393.5L671.3 391.6L678.9 389.4L682.2 391.8ZM665.1 395.2L663.4 393.9L671.3 391.6L673.8 393.5ZM656.1 397L655.2 396.3L663.4 393.9L665.1 395.2ZM647 398.8L646.8 398.7L655.2 396.3L656.1 397ZM647 398.8L646.8 398.7L638.4 401.2L637.8 400.7ZM637.8 400.7L638.4 401.2L630 403.6L628.6 402.5ZM628.6 402.5L630 403.6L621.7 406.1L619.5 404.3ZM619.5 404.3L621.7 406.1L613.6 408.4L610.7 406.1ZM610.7 406.1L613.6 408.4L605.7 410.7L602.2 407.8ZM602.2 407.8L605.7 410.7L598.3 412.9L594.1 409.4ZM671.3 391.6L668.1 389.9L674.7 387.2L678.9 389.4ZM663.4 393.9L661.1 392.7L668.1 389.9L671.3 391.6ZM655.2 396.3L654 395.6L661.1 392.7L663.4 393.9ZM646.8 398.7L646.7 398.6L654 395.6L655.2 396.3ZM646.8 398.7L646.7 398.6L639.3 401.6L638.4 401.2ZM638.4 401.2L639.3 401.6L631.8 404.7L630 403.6ZM630 403.6L631.8 404.7L624.5 407.6L621.7 406.1ZM621.7 406.1L624.5 407.6L617.3 410.6L613.6 408.4ZM613.6 408.4L617.3 410.6L610.4 413.4L605.7 410.7ZM605.7 410.7L610.4 413.4L603.7 416.1L598.3 412.9ZM668.1 389.9L664.3 388.5L669.8 385.3L674.7 387.2ZM661.1 392.7L658.5 391.7L664.3 388.5L668.1 389.9ZM654 395.6L652.6 395.1L658.5 391.7L661.1 392.7ZM646.7 398.6L646.4 398.5L652.6 395.1L654 395.6ZM646.7 398.6L646.4 398.5L640.2 402L639.3 401.6ZM639.3 401.6L640.2 402L634 405.5L631.8 404.7ZM631.8 404.7L634 405.5L627.9 409L624.5 407.6ZM624.5 407.6L627.9 409L621.8 412.4L617.3 410.6ZM617.3 410.6L621.8 412.4L616 415.7L610.4 413.4ZM610.4 413.4L616 415.7L610.4 418.9L603.7 416.1ZM664.3 388.5L660.1 387.3L664.3 383.9L669.8 385.3ZM658.5 391.7L655.6 390.9L660.1 387.3L664.3 388.5ZM652.6 395.1L650.9 394.6L655.6 390.9L658.5 391.7ZM646.4 398.5L646.2 398.5L650.9 394.6L652.6 395.1ZM646.4 398.5L646.2 398.5L641.4 402.3L640.2 402ZM640.2 402L641.4 402.3L636.5 406.2L634 405.5ZM634 405.5L636.5 406.2L631.7 410.1L627.9 409ZM627.9 409L631.7 410.1L627 413.9L621.8 412.4ZM621.8 412.4L627 413.9L622.4 417.6L616 415.7ZM616 415.7L622.4 417.6L618 421.1L610.4 418.9ZM660.1 387.3L655.5 386.4L658.4 382.8L664.3 383.9ZM655.6 390.9L652.4 390.3L655.5 386.4L660.1 387.3ZM650.9 394.6L649.2 394.3L652.4 390.3L655.6 390.9ZM646.2 398.5L645.9 398.4L649.2 394.3L650.9 394.6ZM646.2 398.5L645.9 398.4L642.6 402.6L641.4 402.3ZM641.4 402.3L642.6 402.6L639.2 406.8L636.5 406.2ZM636.5 406.2L639.2 406.8L635.9 410.9L631.7 410.1ZM631.7 410.1L635.9 410.9L632.6 415L627 413.9ZM627 413.9L632.6 415L629.5 419L622.4 417.6ZM622.4 417.6L629.5 419L626.4 422.8L618 421.1ZM655.5 386.4L650.6 385.9L652.2 382.1L658.4 382.8ZM652.4 390.3L649 389.9L650.6 385.9L655.5 386.4ZM649.2 394.3L647.3 394.1L649 389.9L652.4 390.3ZM645.9 398.4L645.6 398.4L647.3 394.1L649.2 394.3ZM645.9 398.4L645.6 398.4L643.9 402.7L642.6 402.6ZM642.6 402.6L643.9 402.7L642.1 407.1L639.2 406.8ZM639.2 406.8L642.1 407.1L640.4 411.5L635.9 410.9ZM635.9 410.9L640.4 411.5L638.7 415.7L632.6 415ZM632.6 415L638.7 415.7L637 419.9L629.5 419ZM629.5 419L637 419.9L635.4 423.9L626.4 422.8ZM650.6 385.9L645.7 385.7L645.8 381.8L652.2 382.1ZM649 389.9L645.5 389.8L645.7 385.7L650.6 385.9ZM647.3 394.1L645.4 394L645.5 389.8L649 389.9ZM645.6 398.4L645.3 398.4L645.4 394L647.3 394.1ZM645.6 398.4L645.3 398.4L645.2 402.8L643.9 402.7ZM643.9 402.7L645.2 402.8L645.1 407.2L642.1 407.1ZM642.1 407.1L645.1 407.2L645 411.6L640.4 411.5ZM640.4 411.5L645 411.6L644.8 416L638.7 415.7ZM638.7 415.7L644.8 416L644.7 420.2L637 419.9ZM637 419.9L644.7 420.2L644.6 424.3L635.4 423.9ZM645.7 385.7L640.7 385.9L639.3 382L645.8 381.8ZM645.5 389.8L642.1 389.9L640.7 385.9L645.7 385.7ZM645.4 394L643.5 394.1L642.1 389.9L645.5 389.8ZM645.3 398.4L645 398.4L643.5 394.1L645.4 394ZM645.3 398.4L645 398.4L646.5 402.7L645.2 402.8ZM645.2 402.8L646.5 402.7L648.1 407.1L645.1 407.2ZM645.1 407.2L648.1 407.1L649.6 411.5L645 411.6ZM645 411.6L649.6 411.5L651.1 415.8L644.8 416ZM644.8 416L651.1 415.8L652.5 420L644.7 420.2ZM644.7 420.2L652.5 420L653.9 424L644.6 424.3ZM640.7 385.9L635.8 386.3L633.1 382.6L639.3 382ZM642.1 389.9L638.7 390.2L635.8 386.3L640.7 385.9ZM643.5 394.1L641.7 394.3L638.7 390.2L642.1 389.9ZM645 398.4L644.7 398.4L641.7 394.3L643.5 394.1ZM645 398.4L644.7 398.4L647.8 402.6L646.5 402.7ZM646.5 402.7L647.8 402.6L651 406.8L648.1 407.1ZM648.1 407.1L651 406.8L654.1 411L649.6 411.5ZM649.6 411.5L654.1 411L657.1 415.2L651.1 415.8ZM651.1 415.8L657.1 415.2L660.1 419.2L652.5 420ZM652.5 420L660.1 419.2L662.9 423L653.9 424ZM635.8 386.3L631.2 387.1L627.1 383.7L633.1 382.6ZM638.7 390.2L635.5 390.8L631.2 387.1L635.8 386.3ZM641.7 394.3L639.9 394.6L635.5 390.8L638.7 390.2ZM644.7 398.4L644.4 398.5L639.9 394.6L641.7 394.3ZM644.7 398.4L644.4 398.5L649.1 402.4L647.8 402.6ZM647.8 402.6L649.1 402.4L653.7 406.3L651 406.8ZM651 406.8L653.7 406.3L658.3 410.3L654.1 411ZM654.1 411L658.3 410.3L662.8 414.1L657.1 415.2ZM657.1 415.2L662.8 414.1L667.2 417.9L660.1 419.2ZM660.1 419.2L667.2 417.9L671.4 421.4L662.9 423ZM631.2 387.1L626.9 388.3L621.5 385.1L627.1 383.7ZM635.5 390.8L632.5 391.6L626.9 388.3L631.2 387.1ZM639.9 394.6L638.3 395L632.5 391.6L635.5 390.8ZM644.4 398.5L644.2 398.5L638.3 395L639.9 394.6ZM644.4 398.5L644.2 398.5L650.2 402.1L649.1 402.4ZM649.1 402.4L650.2 402.1L656.2 405.7L653.7 406.3ZM653.7 406.3L656.2 405.7L662.2 409.2L658.3 410.3ZM658.3 410.3L662.2 409.2L668.1 412.7L662.8 414.1ZM662.8 414.1L668.1 412.7L673.8 416L667.2 417.9ZM667.2 417.9L673.8 416L679.2 419.3L671.4 421.4ZM626.9 388.3L623 389.7L616.6 386.9L621.5 385.1ZM632.5 391.6L629.8 392.6L623 389.7L626.9 388.3ZM638.3 395L636.8 395.5L629.8 392.6L632.5 391.6ZM644.2 398.5L644 398.6L636.8 395.5L638.3 395ZM644.2 398.5L644 398.6L651.2 401.7L650.2 402.1ZM650.2 402.1L651.2 401.7L658.5 404.8L656.2 405.7ZM656.2 405.7L658.5 404.8L665.6 407.9L662.2 409.2ZM662.2 409.2L665.6 407.9L672.7 410.9L668.1 412.7ZM668.1 412.7L672.7 410.9L679.5 413.8L673.8 416ZM673.8 416L679.5 413.8L686 416.6L679.2 419.3ZM623 389.7L619.8 391.3L612.3 389L616.6 386.9ZM629.8 392.6L627.5 393.7L619.8 391.3L623 389.7ZM636.8 395.5L635.6 396.2L627.5 393.7L629.8 392.6ZM644 398.6L643.8 398.7L635.6 396.2L636.8 395.5ZM644 398.6L643.8 398.7L652.1 401.3L651.2 401.7ZM651.2 401.7L652.1 401.3L660.3 403.8L658.5 404.8ZM658.5 404.8L660.3 403.8L668.5 406.3L665.6 407.9ZM665.6 407.9L668.5 406.3L676.5 408.8L672.7 410.9ZM672.7 410.9L676.5 408.8L684.3 411.2L679.5 413.8ZM679.5 413.8L684.3 411.2L691.7 413.5L686 416.6ZM619.8 391.3L617.1 393.2L608.8 391.4L612.3 389ZM627.5 393.7L625.7 395L617.1 393.2L619.8 391.3ZM635.6 396.2L634.6 396.9L625.7 395L627.5 393.7ZM643.8 398.7L643.6 398.8L634.6 396.9L635.6 396.2ZM643.8 398.7L643.6 398.8L652.7 400.8L652.1 401.3ZM652.1 401.3L652.7 400.8L661.8 402.7L660.3 403.8ZM660.3 403.8L661.8 402.7L670.8 404.6L668.5 406.3ZM668.5 406.3L670.8 404.6L679.6 406.5L676.5 408.8ZM676.5 408.8L679.6 406.5L688 408.3L684.3 411.2ZM684.3 411.2L688 408.3L696.1 410L691.7 413.5ZM617.1 393.2L615.2 395.2L606.3 394L608.8 391.4ZM625.7 395L624.4 396.4L615.2 395.2L617.1 393.2ZM634.6 396.9L633.9 397.7L624.4 396.4L625.7 395ZM643.6 398.8L643.5 398.9L633.9 397.7L634.6 396.9ZM643.6 398.8L643.5 398.9L653.2 400.2L652.7 400.8ZM652.7 400.8L653.2 400.2L662.9 401.5L661.8 402.7ZM661.8 402.7L662.9 401.5L672.4 402.8L670.8 404.6ZM670.8 404.6L672.4 402.8L681.7 404L679.6 406.5ZM679.6 406.5L681.7 404L690.6 405.2L688 408.3ZM688 408.3L690.6 405.2L699.1 406.3L696.1 410ZM615.2 395.2L614 397.3L604.7 396.8L606.3 394ZM624.4 396.4L623.6 397.9L614 397.3L615.2 395.2ZM633.9 397.7L633.4 398.5L623.6 397.9L624.4 396.4ZM643.5 398.9L643.4 399.1L633.4 398.5L633.9 397.7ZM643.5 398.9L643.4 399.1L653.5 399.7L653.2 400.2ZM653.2 400.2L653.5 399.7L663.5 400.2L662.9 401.5ZM662.9 401.5L663.5 400.2L673.3 400.8L672.4 402.8ZM672.4 402.8L673.3 400.8L682.8 401.4L681.7 404ZM681.7 404L682.8 401.4L692 401.9L690.6 405.2ZM690.6 405.2L692 401.9L700.6 402.4L699.1 406.3ZM614 397.3L613.6 399.6L604.2 399.7L604.7 396.8ZM623.6 397.9L623.3 399.4L613.6 399.6L614 397.3ZM633.4 398.5L633.3 399.3L623.3 399.4L623.6 397.9ZM643.4 399.1L643.4 399.2L633.3 399.3L633.4 398.5ZM643.4 399.1L643.4 399.2L653.5 399.1L653.5 399.7ZM653.5 399.7L653.5 399.1L663.6 399L663.5 400.2ZM663.5 400.2L663.6 399L673.4 398.8L673.3 400.8ZM673.3 400.8L673.4 398.8L683 398.7L682.8 401.4ZM682.8 401.4L683 398.7L692.1 398.6L692 401.9ZM692 401.9L692.1 398.6L700.8 398.5L700.6 402.4ZM613.6 399.6L614 401.8L604.7 402.5L604.2 399.7ZM623.3 399.4L623.7 401L614 401.8L613.6 399.6ZM633.3 399.3L633.5 400.2L623.7 401L623.3 399.4ZM643.4 399.2L643.5 399.3L633.5 400.2L633.3 399.3ZM643.4 399.2L643.5 399.3L653.4 398.5L653.5 399.1ZM653.5 399.1L653.4 398.5L663.2 397.7L663.6 399ZM663.6 399L663.2 397.7L672.8 396.9L673.4 398.8ZM673.4 398.8L672.8 396.9L682.2 396.1L683 398.7ZM683 398.7L682.2 396.1L691.1 395.4L692.1 398.6ZM692.1 398.6L691.1 395.4L699.5 394.7L700.8 398.5ZM614 401.8L615.3 403.9L606.3 405.3L604.7 402.5ZM623.7 401L624.6 402.5L615.3 403.9L614 401.8ZM633.5 400.2L634 401L624.6 402.5L623.7 401ZM643.5 399.3L643.5 399.5L634 401L633.5 400.2ZM643.5 399.3L643.5 399.5L653 398L653.4 398.5ZM653.4 398.5L653 398L662.4 396.5L663.2 397.7ZM663.2 397.7L662.4 396.5L671.6 395L672.8 396.9ZM672.8 396.9L671.6 395L680.4 393.6L682.2 396.1ZM682.2 396.1L680.4 393.6L688.8 392.3L691.1 395.4ZM691.1 395.4L688.8 392.3L696.8 391L699.5 394.7ZM615.3 403.9L617.3 406L608.9 408L606.3 405.3ZM624.6 402.5L626 403.9L617.3 406L615.3 403.9ZM634 401L634.8 401.7L626 403.9L624.6 402.5ZM643.5 399.5L643.7 399.6L634.8 401.7L634 401ZM643.5 399.5L643.7 399.6L652.5 397.4L653 398ZM653 398L652.5 397.4L661.2 395.3L662.4 396.5ZM662.4 396.5L661.2 395.3L669.6 393.3L671.6 395ZM671.6 395L669.6 393.3L677.8 391.3L680.4 393.6ZM680.4 393.6L677.8 391.3L685.5 389.4L688.8 392.3ZM688.8 392.3L685.5 389.4L692.8 387.6L696.8 391ZM617.3 406L620.1 407.9L612.5 410.5L608.9 408ZM626 403.9L627.9 405.2L620.1 407.9L617.3 406ZM634.8 401.7L635.9 402.4L627.9 405.2L626 403.9ZM643.7 399.6L643.8 399.7L635.9 402.4L634.8 401.7ZM643.7 399.6L643.8 399.7L651.7 397L652.5 397.4ZM652.5 397.4L651.7 397L659.5 394.3L661.2 395.3ZM661.2 395.3L659.5 394.3L667.1 391.7L669.6 393.3ZM669.6 393.3L667.1 391.7L674.3 389.2L677.8 391.3ZM677.8 391.3L674.3 389.2L681.2 386.8L685.5 389.4ZM685.5 389.4L681.2 386.8L687.7 384.5L692.8 387.6ZM620.1 407.9L623.6 409.5L617 412.7L612.5 410.5ZM627.9 405.2L630.4 406.3L623.6 409.5L620.1 407.9ZM635.9 402.4L637.2 403L630.4 406.3L627.9 405.2ZM643.8 399.7L644 399.8L637.2 403L635.9 402.4ZM643.8 399.7L644 399.8L650.8 396.5L651.7 397ZM651.7 397L650.8 396.5L657.5 393.4L659.5 394.3ZM659.5 394.3L657.5 393.4L664 390.3L667.1 391.7ZM667.1 391.7L664 390.3L670.2 387.3L674.3 389.2ZM674.3 389.2L670.2 387.3L676.1 384.5L681.2 386.8ZM681.2 386.8L676.1 384.5L681.6 381.9L687.7 384.5ZM623.6 409.5L627.7 410.9L622.3 414.5L617 412.7ZM630.4 406.3L633.2 407.3L627.7 410.9L623.6 409.5ZM637.2 403L638.7 403.6L633.2 407.3L630.4 406.3ZM644 399.8L644.3 399.9L638.7 403.6L637.2 403ZM644 399.8L644.3 399.9L649.8 396.2L650.8 396.5ZM650.8 396.5L649.8 396.2L655.2 392.6L657.5 393.4ZM657.5 393.4L655.2 392.6L660.4 389.1L664 390.3ZM664 390.3L660.4 389.1L665.4 385.8L670.2 387.3ZM670.2 387.3L665.4 385.8L670.2 382.6L676.1 384.5ZM676.1 384.5L670.2 382.6L674.6 379.6L681.6 381.9ZM627.7 410.9L632.2 412L628.2 415.9L622.3 414.5ZM633.2 407.3L636.3 408L632.2 412L627.7 410.9ZM638.7 403.6L640.4 404L636.3 408L633.2 407.3ZM644.3 399.9L644.5 399.9L640.4 404L638.7 403.6ZM644.3 399.9L644.5 399.9L648.6 395.9L649.8 396.2ZM649.8 396.2L648.6 395.9L652.6 392L655.2 392.6ZM655.2 392.6L652.6 392L656.5 388.2L660.4 389.1ZM660.4 389.1L656.5 388.2L660.2 384.6L665.4 385.8ZM665.4 385.8L660.2 384.6L663.7 381.1L670.2 382.6ZM670.2 382.6L663.7 381.1L666.9 377.9L674.6 379.6ZM632.2 412L637.1 412.8L634.6 417L628.2 415.9ZM636.3 408L639.7 408.5L637.1 412.8L632.2 412ZM640.4 404L642.3 404.3L639.7 408.5L636.3 408ZM644.5 399.9L644.8 400L642.3 404.3L640.4 404ZM644.5 399.9L644.8 400L647.4 395.7L648.6 395.9ZM648.6 395.9L647.4 395.7L649.8 391.6L652.6 392ZM652.6 392L649.8 391.6L652.3 387.6L656.5 388.2ZM656.5 388.2L652.3 387.6L654.6 383.7L660.2 384.6ZM660.2 384.6L654.6 383.7L656.7 380.1L663.7 381.1ZM663.7 381.1L656.7 380.1L658.8 376.7L666.9 377.9ZM637.1 412.8L642.3 413.2L641.3 417.5L634.6 417ZM639.7 408.5L643.2 408.8L642.3 413.2L637.1 412.8ZM642.3 404.3L644.2 404.4L643.2 408.8L639.7 408.5ZM644.8 400L645.1 400L644.2 404.4L642.3 404.3ZM644.8 400L645.1 400L646.1 395.6L647.4 395.7ZM647.4 395.7L646.1 395.6L647 391.4L649.8 391.6ZM649.8 391.6L647 391.4L647.9 387.2L652.3 387.6ZM652.3 387.6L647.9 387.2L648.7 383.3L654.6 383.7ZM654.6 383.7L648.7 383.3L649.5 379.6L656.7 380.1ZM656.7 380.1L649.5 379.6L650.3 376.1L658.8 376.7ZM642.3 413.2L647.5 413.2L648.1 417.5L641.3 417.5ZM643.2 408.8L646.8 408.8L647.5 413.2L642.3 413.2ZM644.2 404.4L646.1 404.4L646.8 408.8L643.2 408.8ZM645.1 400L645.4 400L646.1 404.4L644.2 404.4ZM645.1 400L645.4 400L644.7 395.6L646.1 395.6ZM646.1 395.6L644.7 395.6L644.1 391.4L647 391.4ZM647 391.4L644.1 391.4L643.4 387.2L647.9 387.2ZM647.9 387.2L643.4 387.2L642.8 383.3L648.7 383.3ZM648.7 383.3L642.8 383.3L642.2 379.5L649.5 379.6ZM649.5 379.6L642.2 379.5L641.7 376L650.3 376.1ZM647.5 413.2L652.6 412.9L654.9 417.1L648.1 417.5ZM646.8 408.8L650.3 408.6L652.6 412.9L647.5 413.2ZM646.1 404.4L648 404.3L650.3 408.6L646.8 408.8ZM645.4 400L645.7 400L648 404.3L646.1 404.4ZM645.4 400L645.7 400L643.4 395.7L644.7 395.6ZM644.7 395.6L643.4 395.7L641.2 391.5L644.1 391.4ZM644.1 391.4L641.2 391.5L639 387.5L643.4 387.2ZM643.4 387.2L639 387.5L637 383.6L642.8 383.3ZM642.8 383.3L637 383.6L635 380L642.2 379.5ZM642.2 379.5L635 380L633.2 376.6L641.7 376ZM652.6 412.9L657.6 412.2L661.3 416.2L654.9 417.1ZM650.3 408.6L653.8 408.1L657.6 412.2L652.6 412.9ZM648 404.3L649.9 404L653.8 408.1L650.3 408.6ZM645.7 400L646 399.9L649.9 404L648 404.3ZM645.7 400L646 399.9L642.2 395.9L643.4 395.7ZM643.4 395.7L642.2 395.9L638.4 391.9L641.2 391.5ZM641.2 391.5L638.4 391.9L634.8 388.1L639 387.5ZM639 387.5L634.8 388.1L631.3 384.4L637 383.6ZM637 383.6L631.3 384.4L628 380.9L635 380ZM635 380L628 380.9L625 377.7L633.2 376.6ZM657.6 412.2L662.2 411.1L667.4 414.8L661.3 416.2ZM653.8 408.1L656.9 407.4L662.2 411.1L657.6 412.2ZM649.9 404L651.6 403.6L656.9 407.4L653.8 408.1ZM646 399.9L646.3 399.9L651.6 403.6L649.9 404ZM646 399.9L646.3 399.9L641 396.1L642.2 395.9ZM642.2 395.9L641 396.1L635.8 392.5L638.4 391.9ZM638.4 391.9L635.8 392.5L630.8 388.9L634.8 388.1ZM634.8 388.1L630.8 388.9L626 385.5L631.3 384.4ZM631.3 384.4L626 385.5L621.5 382.3L628 380.9ZM628 380.9L621.5 382.3L617.2 379.3L625 377.7ZM662.2 411.1L666.4 409.8L672.8 413L667.4 414.8ZM656.9 407.4L659.8 406.5L666.4 409.8L662.2 411.1ZM651.6 403.6L653.2 403.1L659.8 406.5L656.9 407.4ZM646.3 399.9L646.5 399.8L653.2 403.1L651.6 403.6ZM646.3 399.9L646.5 399.8L639.9 396.5L641 396.1ZM641 396.1L639.9 396.5L633.5 393.2L635.8 392.5ZM635.8 392.5L633.5 393.2L627.2 390.1L630.8 388.9ZM630.8 388.9L627.2 390.1L621.2 387L626 385.5ZM626 385.5L621.2 387L615.5 384.1L621.5 382.3ZM621.5 382.3L615.5 384.1L610.1 381.4L617.2 379.3ZM666.4 409.8L669.9 408.2L677.4 410.9L672.8 413ZM659.8 406.5L662.3 405.4L669.9 408.2L666.4 409.8ZM653.2 403.1L654.5 402.5L662.3 405.4L659.8 406.5ZM646.5 399.8L646.7 399.7L654.5 402.5L653.2 403.1ZM646.5 399.8L646.7 399.7L639 396.9L639.9 396.5ZM639.9 396.5L639 396.9L631.4 394.1L633.5 393.2ZM633.5 393.2L631.4 394.1L624 391.4L627.2 390.1ZM627.2 390.1L624 391.4L616.9 388.8L621.2 387ZM621.2 387L616.9 388.8L610.2 386.4L615.5 384.1ZM615.5 384.1L610.2 386.4L603.8 384.1L610.1 381.4ZM669.9 408.2L672.9 406.3L681.2 408.5L677.4 410.9ZM662.3 405.4L664.3 404.1L672.9 406.3L669.9 408.2ZM654.5 402.5L655.6 401.9L664.3 404.1L662.3 405.4ZM646.7 399.7L646.9 399.6L655.6 401.9L654.5 402.5ZM646.7 399.7L646.9 399.6L638.2 397.3L639 396.9ZM639 396.9L638.2 397.3L629.7 395.1L631.4 394.1ZM631.4 394.1L629.7 395.1L621.4 393L624 391.4ZM624 391.4L621.4 393L613.4 390.9L616.9 388.8ZM616.9 388.8L613.4 390.9L605.7 388.9L610.2 386.4ZM610.2 386.4L605.7 388.9L598.6 387.1L603.8 384.1ZM672.9 406.3L675 404.3L684 405.8L681.2 408.5ZM664.3 404.1L665.8 402.7L675 404.3L672.9 406.3ZM655.6 401.9L656.5 401.1L665.8 402.7L664.3 404.1ZM646.9 399.6L647 399.5L656.5 401.1L655.6 401.9ZM646.9 399.6L647 399.5L637.6 397.9L638.2 397.3ZM638.2 397.3L637.6 397.9L628.4 396.3L629.7 395.1ZM629.7 395.1L628.4 396.3L619.3 394.7L621.4 393ZM621.4 393L619.3 394.7L610.6 393.2L613.4 390.9ZM613.4 390.9L610.6 393.2L602.3 391.8L605.7 388.9ZM605.7 388.9L602.3 391.8L594.4 390.4L598.6 387.1ZM675 404.3L676.4 402.1L685.7 403L684 405.8ZM665.8 402.7L666.8 401.2L676.4 402.1L675 404.3ZM656.5 401.1L657 400.3L666.8 401.2L665.8 402.7ZM647 399.5L647.1 399.4L657 400.3L656.5 401.1ZM647 399.5L647.1 399.4L637.2 398.4L637.6 397.9ZM637.6 397.9L637.2 398.4L627.5 397.5L628.4 396.3ZM628.4 396.3L627.5 397.5L617.9 396.6L619.3 394.7ZM619.3 394.7L617.9 396.6L608.7 395.7L610.6 393.2ZM610.6 393.2L608.7 395.7L599.9 394.8L602.3 391.8ZM602.3 391.8L599.9 394.8L591.5 394.1L594.4 390.4ZM676.4 402.1L677 399.9L686.4 400.2L685.7 403ZM666.8 401.2L667.2 399.7L677 399.9L676.4 402.1ZM657 400.3L657.3 399.5L667.2 399.7L666.8 401.2ZM647.1 399.4L647.2 399.2L657.3 399.5L657 400.3ZM647.1 399.4L647.2 399.2L637.1 399L637.2 398.4ZM637.2 398.4L637.1 399L627 398.7L627.5 397.5ZM627.5 397.5L627 398.7L617.2 398.5L617.9 396.6ZM617.9 396.6L617.2 398.5L607.7 398.3L608.7 395.7ZM608.7 395.7L607.7 398.3L598.6 398.1L599.9 394.8ZM599.9 394.8L598.6 398.1L590 397.9L591.5 394.1ZM677 399.9L676.8 397.7L686.1 397.3L686.4 400.2ZM667.2 399.7L667.1 398.2L676.8 397.7L677 399.9ZM657.3 399.5L657.2 398.6L667.1 398.2L667.2 399.7ZM647.2 399.2L647.2 399.1L657.2 398.6L657.3 399.5ZM647.2 399.2L647.2 399.1L637.1 399.6L637.1 399ZM637.1 399L637.1 399.6L627.1 400L627 398.7ZM627 398.7L627.1 400L617.3 400.5L617.2 398.5ZM617.2 398.5L617.3 400.5L607.7 400.9L607.7 398.3ZM607.7 398.3L607.7 400.9L598.6 401.3L598.6 398.1ZM598.6 398.1L598.6 401.3L589.9 401.7L590 397.9ZM676.8 397.7L675.7 395.6L684.7 394.5L686.1 397.3ZM667.1 398.2L666.4 396.7L675.7 395.6L676.8 397.7ZM657.2 398.6L656.8 397.8L666.4 396.7L667.1 398.2ZM647.2 399.1L647.1 399L656.8 397.8L657.2 398.6ZM647.2 399.1L647.1 399L637.3 400.1L637.1 399.6ZM637.1 399.6L637.3 400.1L627.6 401.3L627.1 400ZM627.1 400L627.6 401.3L618 402.4L617.3 400.5ZM617.3 400.5L618 402.4L608.7 403.5L607.7 400.9ZM607.7 400.9L608.7 403.5L599.7 404.6L598.6 401.3ZM598.6 401.3L599.7 404.6L591.2 405.6L589.9 401.7Z"/>
<path fill="#ffa940" d="M591.3 405.7L594.1 409.4L586.5 410.9L583.3 406.6ZM583.3 406.6L586.5 410.9L579.5 412.3L576 407.5ZM576 407.5L579.5 412.3L573.2 413.6L569.4 408.3ZM594.1 409.4L598.3 412.9L591.2 415L586.5 410.9ZM586.5 410.9L591.2 415L584.8 416.9L579.5 412.3ZM579.5 412.3L584.8 416.9L578.9 418.6L573.2 413.6ZM598.3 412.9L603.7 416.1L597.5 418.7L591.2 415ZM591.2 415L597.5 418.7L591.7 421L584.8 416.9ZM584.8 416.9L591.7 421L586.5 423.1L578.9 418.6ZM603.7 416.1L610.4 418.9L605.1 421.8L597.5 418.7ZM597.5 418.7L605.1 421.8L600.2 424.6L591.7 421ZM591.7 421L600.2 424.6L595.8 427.1L586.5 423.1ZM610.4 418.9L618 421.1L613.9 424.5L605.1 421.8ZM605.1 421.8L613.9 424.5L610.1 427.5L600.2 424.6ZM600.2 424.6L610.1 427.5L606.6 430.3L595.8 427.1ZM618 421.1L626.4 422.8L623.6 426.4L613.9 424.5ZM613.9 424.5L623.6 426.4L620.9 429.7L610.1 427.5ZM610.1 427.5L620.9 429.7L618.5 432.8L606.6 430.3ZM626.4 422.8L635.4 423.9L633.9 427.6L623.6 426.4ZM623.6 426.4L633.9 427.6L632.5 431.1L620.9 429.7ZM620.9 429.7L632.5 431.1L631.2 434.3L618.5 432.8ZM635.4 423.9L644.6 424.3L644.5 428.1L633.9 427.6ZM633.9 427.6L644.5 428.1L644.4 431.6L632.5 431.1ZM632.5 431.1L644.4 431.6L644.3 434.8L631.2 434.3ZM644.6 424.3L653.9 424L655.2 427.8L644.5 428.1ZM644.5 428.1L655.2 427.8L656.4 431.3L644.4 431.6ZM644.4 431.6L656.4 431.3L657.5 434.4L644.3 434.8ZM653.9 424L662.9 423L665.6 426.7L655.2 427.8ZM655.2 427.8L665.6 426.7L668.1 430L656.4 431.3ZM656.4 431.3L668.1 430L670.3 433.1L657.5 434.4ZM662.9 423L671.4 421.4L675.4 424.8L665.6 426.7ZM665.6 426.7L675.4 424.8L679.1 427.9L668.1 430ZM668.1 430L679.1 427.9L682.4 430.8L670.3 433.1ZM671.4 421.4L679.2 419.3L684.3 422.3L675.4 424.8ZM675.4 424.8L684.3 422.3L689.1 425.1L679.1 427.9ZM679.1 427.9L689.1 425.1L693.4 427.7L682.4 430.8ZM679.2 419.3L686 416.6L692.1 419.2L684.3 422.3ZM684.3 422.3L692.1 419.2L697.8 421.6L689.1 425.1ZM689.1 425.1L697.8 421.6L702.9 423.8L693.4 427.7ZM686 416.6L691.7 413.5L698.6 415.6L692.1 419.2ZM692.1 419.2L698.6 415.6L705 417.6L697.8 421.6ZM697.8 421.6L705 417.6L710.8 419.3L702.9 423.8ZM691.7 413.5L696.1 410L703.6 411.6L698.6 415.6ZM698.6 415.6L703.6 411.6L710.6 413.1L705 417.6ZM705 417.6L710.6 413.1L716.8 414.4L710.8 419.3ZM696.1 410L699.1 406.3L707 407.3L703.6 411.6ZM703.6 411.6L707 407.3L714.3 408.3L710.6 413.1ZM710.6 413.1L714.3 408.3L720.9 409.1L716.8 414.4ZM699.1 406.3L700.6 402.4L708.7 402.9L707 407.3ZM707 407.3L708.7 402.9L716.2 403.3L714.3 408.3ZM714.3 408.3L716.2 403.3L722.9 403.7L720.9 409.1ZM700.6 402.4L700.8 398.5L708.8 398.4L708.7 402.9ZM708.7 402.9L708.8 398.4L716.2 398.3L716.2 403.3ZM716.2 403.3L716.2 398.3L722.9 398.3L722.9 403.7ZM700.8 398.5L699.5 394.7L707.3 394.1L708.8 398.4ZM708.8 398.4L707.3 394.1L714.4 393.5L716.2 398.3ZM716.2 398.3L714.4 393.5L720.9 392.9L722.9 398.3ZM699.5 394.7L696.8 391L704.2 389.9L707.3 394.1ZM707.3 394.1L704.2 389.9L710.9 388.8L714.4 393.5ZM714.4 393.5L710.9 388.8L717 387.8L720.9 392.9ZM696.8 391L692.8 387.6L699.6 386L704.2 389.9ZM704.2 389.9L699.6 386L705.8 384.5L710.9 388.8ZM710.9 388.8L705.8 384.5L711.3 383.1L717 387.8ZM692.8 387.6L687.7 384.5L693.7 382.5L699.6 386ZM699.6 386L693.7 382.5L699.2 380.6L705.8 384.5ZM705.8 384.5L699.2 380.6L704.1 378.9L711.3 383.1ZM687.7 384.5L681.6 381.9L686.7 379.4L693.7 382.5ZM693.7 382.5L686.7 379.4L691.4 377.2L699.2 380.6ZM699.2 380.6L691.4 377.2L695.5 375.2L704.1 378.9ZM681.6 381.9L674.6 379.6L678.7 376.9L686.7 379.4ZM686.7 379.4L678.7 376.9L682.5 374.4L691.4 377.2ZM691.4 377.2L682.5 374.4L685.8 372.2L695.5 375.2ZM674.6 379.6L666.9 377.9L670 374.9L678.7 376.9ZM678.7 376.9L670 374.9L672.7 372.2L682.5 374.4ZM682.5 374.4L672.7 372.2L675.2 369.8L685.8 372.2ZM666.9 377.9L658.8 376.7L660.7 373.6L670 374.9ZM670 374.9L660.7 373.6L662.4 370.7L672.7 372.2ZM672.7 372.2L662.4 370.7L663.9 368.2L675.2 369.8ZM658.8 376.7L650.3 376.1L651 372.9L660.7 373.6ZM660.7 373.6L651 372.9L651.6 369.9L662.4 370.7ZM662.4 370.7L651.6 369.9L652.2 367.3L663.9 368.2ZM650.3 376.1L641.7 376L641.2 372.8L651 372.9ZM651 372.9L641.2 372.8L640.7 369.9L651.6 369.9ZM651.6 369.9L640.7 369.9L640.3 367.3L652.2 367.3ZM641.7 376L633.2 376.6L631.5 373.4L641.2 372.8ZM641.2 372.8L631.5 373.4L630 370.5L640.7 369.9ZM640.7 369.9L630 370.5L628.6 368L640.3 367.3ZM633.2 376.6L625 377.7L622.1 374.7L631.5 373.4ZM631.5 373.4L622.1 374.7L619.5 371.9L630 370.5ZM630 370.5L619.5 371.9L617.2 369.5L628.6 368ZM625 377.7L617.2 379.3L613.3 376.5L622.1 374.7ZM622.1 374.7L613.3 376.5L609.7 374L619.5 371.9ZM619.5 371.9L609.7 374L606.5 371.7L617.2 369.5ZM617.2 379.3L610.1 381.4L605.2 378.9L613.3 376.5ZM613.3 376.5L605.2 378.9L600.7 376.7L609.7 374ZM609.7 374L600.7 376.7L596.6 374.7L606.5 371.7ZM610.1 381.4L603.8 384.1L598 381.9L605.2 378.9ZM605.2 378.9L598 381.9L592.6 380L600.7 376.7ZM600.7 376.7L592.6 380L587.9 378.2L596.6 374.7ZM603.8 384.1L598.6 387.1L591.9 385.4L598 381.9ZM598 381.9L591.9 385.4L585.9 383.8L592.6 380ZM592.6 380L585.9 383.8L580.4 382.4L587.9 378.2ZM598.6 387.1L594.4 390.4L587.1 389.2L591.9 385.4ZM591.9 385.4L587.1 389.2L580.5 388L585.9 383.8ZM585.9 383.8L580.5 388L574.5 387L580.4 382.4ZM594.4 390.4L591.5 394.1L583.8 393.3L587.1 389.2ZM587.1 389.2L583.8 393.3L576.7 392.6L580.5 388ZM580.5 388L576.7 392.6L570.4 392L574.5 387ZM591.5 394.1L590 397.9L582 397.7L583.8 393.3ZM583.8 393.3L582 397.7L574.6 397.5L576.7 392.6ZM576.7 392.6L574.6 397.5L568 397.3L570.4 392ZM590 397.9L589.9 401.7L581.8 402.1L582 397.7ZM582 397.7L581.8 402.1L574.4 402.5L574.6 397.5ZM574.6 397.5L574.4 402.5L567.7 402.8L568 397.3ZM589.9 401.7L591.2 405.6L583.3 406.5L581.8 402.1ZM581.8 402.1L583.3 406.5L576 407.4L574.4 402.5ZM574.4 402.5L576 407.4L569.4 408.2L567.7 402.8Z"/>
<path fill="#ff9d40" d="M569.4 408.3L573.2 413.6L567.6 414.7L563.6 409ZM563.6 409L567.6 414.7L562.9 415.7L558.7 409.6ZM573.2 413.6L578.9 418.6L573.7 420.1L567.6 414.7ZM567.6 414.7L573.7 420.1L569.3 421.4L562.9 415.7ZM578.9 418.6L586.5 423.1L581.9 425L573.7 420.1ZM573.7 420.1L581.9 425L578 426.6L569.3 421.4ZM586.5 423.1L595.8 427.1L591.9 429.3L581.9 425ZM581.9 425L591.9 429.3L588.6 431.2L578 426.6ZM595.8 427.1L606.6 430.3L603.5 432.8L591.9 429.3ZM591.9 429.3L603.5 432.8L600.9 434.9L588.6 431.2ZM606.6 430.3L618.5 432.8L616.3 435.4L603.5 432.8ZM603.5 432.8L616.3 435.4L614.5 437.7L600.9 434.9ZM618.5 432.8L631.2 434.3L630.1 437.1L616.3 435.4ZM616.3 435.4L630.1 437.1L629.1 439.5L614.5 437.7ZM631.2 434.3L644.3 434.8L644.3 437.7L630.1 437.1ZM630.1 437.1L644.3 437.7L644.2 440.1L629.1 439.5ZM644.3 434.8L657.5 434.4L658.5 437.3L644.3 437.7ZM644.3 437.7L658.5 437.3L659.3 439.7L644.2 440.1ZM657.5 434.4L670.3 433.1L672.3 435.8L658.5 437.3ZM658.5 437.3L672.3 435.8L674.1 438.1L659.3 439.7ZM670.3 433.1L682.4 430.8L685.4 433.3L672.3 435.8ZM672.3 435.8L685.4 433.3L687.9 435.5L674.1 438.1ZM682.4 430.8L693.4 427.7L697.2 429.9L685.4 433.3ZM685.4 433.3L697.2 429.9L700.4 431.8L687.9 435.5ZM693.4 427.7L702.9 423.8L707.4 425.7L697.2 429.9ZM697.2 429.9L707.4 425.7L711.3 427.4L700.4 431.8ZM702.9 423.8L710.8 419.3L715.9 420.9L707.4 425.7ZM707.4 425.7L715.9 420.9L720.3 422.3L711.3 427.4ZM710.8 419.3L716.8 414.4L722.4 415.6L715.9 420.9ZM715.9 420.9L722.4 415.6L727.1 416.6L720.3 422.3ZM716.8 414.4L720.9 409.1L726.7 409.9L722.4 415.6ZM722.4 415.6L726.7 409.9L731.6 410.6L727.1 416.6ZM720.9 409.1L722.9 403.7L728.8 404.1L726.7 409.9ZM726.7 409.9L728.8 404.1L733.8 404.4L731.6 410.6ZM722.9 403.7L722.9 398.3L728.7 398.2L728.8 404.1ZM728.8 404.1L728.7 398.2L733.7 398.1L733.8 404.4ZM722.9 398.3L720.9 392.9L726.5 392.5L728.7 398.2ZM728.7 398.2L726.5 392.5L731.3 392.1L733.7 398.1ZM720.9 392.9L717 387.8L722.3 387L726.5 392.5ZM726.5 392.5L722.3 387L726.8 386.3L731.3 392.1ZM717 387.8L711.3 383.1L716.2 382L722.3 387ZM722.3 387L716.2 382L720.3 381L726.8 386.3ZM711.3 383.1L704.1 378.9L708.4 377.4L716.2 382ZM716.2 382L708.4 377.4L712 376.2L720.3 381ZM704.1 378.9L695.5 375.2L699.2 373.5L708.4 377.4ZM708.4 377.4L699.2 373.5L702.2 372L712 376.2ZM695.5 375.2L685.8 372.2L688.7 370.2L699.2 373.5ZM699.2 373.5L688.7 370.2L691.2 368.6L702.2 372ZM685.8 372.2L675.2 369.8L677.3 367.7L688.7 370.2ZM688.7 370.2L677.3 367.7L679.1 365.9L691.2 368.6ZM675.2 369.8L663.9 368.2L665.2 366L677.3 367.7ZM677.3 367.7L665.2 366L666.3 364.1L679.1 365.9ZM663.9 368.2L652.2 367.3L652.7 365.1L665.2 366ZM665.2 366L652.7 365.1L653.1 363.2L666.3 364.1ZM652.2 367.3L640.3 367.3L640 365L652.7 365.1ZM652.7 365.1L640 365L639.7 363.1L653.1 363.2ZM640.3 367.3L628.6 368L627.4 365.8L640 365ZM640 365L627.4 365.8L626.4 363.9L639.7 363.1ZM628.6 368L617.2 369.5L615.2 367.4L627.4 365.8ZM627.4 365.8L615.2 367.4L613.5 365.6L626.4 363.9ZM617.2 369.5L606.5 371.7L603.7 369.8L615.2 367.4ZM615.2 367.4L603.7 369.8L601.4 368.1L613.5 365.6ZM606.5 371.7L596.6 374.7L593.1 372.9L603.7 369.8ZM603.7 369.8L593.1 372.9L590.2 371.4L601.4 368.1ZM596.6 374.7L587.9 378.2L583.7 376.7L593.1 372.9ZM593.1 372.9L583.7 376.7L580.2 375.4L590.2 371.4ZM587.9 378.2L580.4 382.4L575.7 381.2L583.7 376.7ZM583.7 376.7L575.7 381.2L571.7 380.1L580.2 375.4ZM580.4 382.4L574.5 387L569.3 386.1L575.7 381.2ZM575.7 381.2L569.3 386.1L564.9 385.4L571.7 380.1ZM574.5 387L570.4 392L564.8 391.5L569.3 386.1ZM569.3 386.1L564.8 391.5L560.1 391.1L564.9 385.4ZM570.4 392L568 397.3L562.2 397.2L564.8 391.5ZM564.8 391.5L562.2 397.2L557.3 397.1L560.1 391.1ZM568 397.3L567.7 402.8L561.8 403L562.2 397.2ZM562.2 397.2L561.8 403L556.8 403.3L557.3 397.1ZM567.7 402.8L569.4 408.2L563.6 408.9L561.8 403ZM561.8 403L563.6 408.9L558.6 409.5L556.8 403.3Z"/>
<path fill="#ff9040" d="M558.7 409.6L562.9 415.7L559 416.4L554.7 410.1ZM554.7 410.1L559 416.4L556.1 417L551.6 410.4ZM551.6 410.4L556.1 417L554.1 417.4L549.5 410.7ZM562.9 415.7L569.3 421.4L565.7 422.4L559 416.4ZM559 416.4L565.7 422.4L563 423.2L556.1 417ZM556.1 417L563 423.2L561.2 423.8L554.1 417.4ZM569.3 421.4L578 426.6L574.8 427.9L565.7 422.4ZM565.7 422.4L574.8 427.9L572.3 428.9L563 423.2ZM563 423.2L572.3 428.9L570.7 429.6L561.2 423.8ZM578 426.6L588.6 431.2L585.8 432.7L574.8 427.9ZM574.8 427.9L585.8 432.7L583.8 433.9L572.3 428.9ZM572.3 428.9L583.8 433.9L582.4 434.7L570.7 429.6ZM588.6 431.2L600.9 434.9L598.7 436.7L585.8 432.7ZM585.8 432.7L598.7 436.7L597.1 438L583.8 433.9ZM583.8 433.9L597.1 438L596 438.9L582.4 434.7ZM600.9 434.9L614.5 437.7L613 439.6L598.7 436.7ZM598.7 436.7L613 439.6L611.9 441L597.1 438ZM597.1 438L611.9 441L611.1 442L596 438.9ZM614.5 437.7L629.1 439.5L628.3 441.5L613 439.6ZM613 439.6L628.3 441.5L627.7 443L611.9 441ZM611.9 441L627.7 443L627.3 444L611.1 442ZM629.1 439.5L644.2 440.1L644.2 442.2L628.3 441.5ZM628.3 441.5L644.2 442.2L644.1 443.7L627.7 443ZM627.7 443L644.1 443.7L644.1 444.7L627.3 444ZM644.2 440.1L659.3 439.7L660 441.7L644.2 442.2ZM644.2 442.2L660 441.7L660.6 443.2L644.1 443.7ZM644.1 443.7L660.6 443.2L660.9 444.2L644.1 444.7ZM659.3 439.7L674.1 438.1L675.5 440L660 441.7ZM660 441.7L675.5 440L676.5 441.4L660.6 443.2ZM660.6 443.2L676.5 441.4L677.2 442.4L660.9 444.2ZM674.1 438.1L687.9 435.5L689.9 437.2L675.5 440ZM675.5 440L689.9 437.2L691.5 438.6L676.5 441.4ZM676.5 441.4L691.5 438.6L692.6 439.5L677.2 442.4ZM687.9 435.5L700.4 431.8L703.1 433.4L689.9 437.2ZM689.9 437.2L703.1 433.4L705.1 434.6L691.5 438.6ZM691.5 438.6L705.1 434.6L706.5 435.4L692.6 439.5ZM700.4 431.8L711.3 427.4L714.5 428.7L703.1 433.4ZM703.1 433.4L714.5 428.7L716.9 429.8L705.1 434.6ZM705.1 434.6L716.9 429.8L718.5 430.5L706.5 435.4ZM711.3 427.4L720.3 422.3L723.8 423.4L714.5 428.7ZM714.5 428.7L723.8 423.4L726.6 424.2L716.9 429.8ZM716.9 429.8L726.6 424.2L728.4 424.8L718.5 430.5ZM720.3 422.3L727.1 416.6L730.9 417.4L723.8 423.4ZM723.8 423.4L730.9 417.4L733.9 418L726.6 424.2ZM726.6 424.2L733.9 418L735.8 418.5L728.4 424.8ZM727.1 416.6L731.6 410.6L735.7 411.1L730.9 417.4ZM730.9 417.4L735.7 411.1L738.7 411.5L733.9 418ZM733.9 418L738.7 411.5L740.8 411.8L735.8 418.5ZM731.6 410.6L733.8 404.4L737.9 404.6L735.7 411.1ZM735.7 411.1L737.9 404.6L741 404.8L738.7 411.5ZM738.7 411.5L741 404.8L743.1 404.9L740.8 411.8ZM733.8 404.4L733.7 398.1L737.7 398.1L737.9 404.6ZM737.9 404.6L737.7 398.1L740.8 398.1L741 404.8ZM741 404.8L740.8 398.1L742.8 398L743.1 404.9ZM733.7 398.1L731.3 392.1L735.2 391.7L737.7 398.1ZM737.7 398.1L735.2 391.7L738.1 391.5L740.8 398.1ZM740.8 398.1L738.1 391.5L740.1 391.3L742.8 398ZM731.3 392.1L726.8 386.3L730.4 385.7L735.2 391.7ZM735.2 391.7L730.4 385.7L733.2 385.3L738.1 391.5ZM738.1 391.5L733.2 385.3L735 385L740.1 391.3ZM726.8 386.3L720.3 381L723.6 380.2L730.4 385.7ZM730.4 385.7L723.6 380.2L726.1 379.5L733.2 385.3ZM733.2 385.3L726.1 379.5L727.8 379.1L735 385ZM720.3 381L712 376.2L714.9 375.1L723.6 380.2ZM723.6 380.2L714.9 375.1L717.2 374.4L726.1 379.5ZM726.1 379.5L717.2 374.4L718.6 373.9L727.8 379.1ZM712 376.2L702.2 372L704.7 370.8L714.9 375.1ZM714.9 375.1L704.7 370.8L706.6 369.9L717.2 374.4ZM717.2 374.4L706.6 369.9L707.8 369.3L718.6 373.9ZM702.2 372L691.2 368.6L693.2 367.2L704.7 370.8ZM704.7 370.8L693.2 367.2L694.7 366.2L706.6 369.9ZM706.6 369.9L694.7 366.2L695.7 365.6L707.8 369.3ZM691.2 368.6L679.1 365.9L680.6 364.5L693.2 367.2ZM693.2 367.2L680.6 364.5L681.7 363.4L694.7 366.2ZM694.7 366.2L681.7 363.4L682.4 362.7L695.7 365.6ZM679.1 365.9L666.3 364.1L667.2 362.6L680.6 364.5ZM680.6 364.5L667.2 362.6L667.9 361.5L681.7 363.4ZM681.7 363.4L667.9 361.5L668.4 360.7L682.4 362.7ZM666.3 364.1L653.1 363.2L653.4 361.6L667.2 362.6ZM667.2 362.6L653.4 361.6L653.7 360.5L667.9 361.5ZM667.9 361.5L653.7 360.5L653.8 359.7L668.4 360.7ZM653.1 363.2L639.7 363.1L639.4 361.5L653.4 361.6ZM653.4 361.6L639.4 361.5L639.3 360.4L653.7 360.5ZM653.7 360.5L639.3 360.4L639.1 359.6L653.8 359.7ZM639.7 363.1L626.4 363.9L625.6 362.4L639.4 361.5ZM639.4 361.5L625.6 362.4L625 361.2L639.3 360.4ZM639.3 360.4L625 361.2L624.6 360.5L639.1 359.6ZM626.4 363.9L613.5 365.6L612.2 364.1L625.6 362.4ZM625.6 362.4L612.2 364.1L611.1 363L625 361.2ZM625 361.2L611.1 363L610.5 362.3L624.6 360.5ZM613.5 365.6L601.4 368.1L599.5 366.7L612.2 364.1ZM612.2 364.1L599.5 366.7L598 365.7L611.1 363ZM611.1 363L598 365.7L597.1 365L610.5 362.3ZM601.4 368.1L590.2 371.4L587.8 370.2L599.5 366.7ZM599.5 366.7L587.8 370.2L585.9 369.3L598 365.7ZM598 365.7L585.9 369.3L584.7 368.7L597.1 365ZM590.2 371.4L580.2 375.4L577.3 374.4L587.8 370.2ZM587.8 370.2L577.3 374.4L575.2 373.6L585.9 369.3ZM585.9 369.3L575.2 373.6L573.7 373.1L584.7 368.7ZM580.2 375.4L571.7 380.1L568.4 379.3L577.3 374.4ZM577.3 374.4L568.4 379.3L566 378.6L575.2 373.6ZM575.2 373.6L566 378.6L564.3 378.2L573.7 373.1ZM571.7 380.1L564.9 385.4L561.3 384.7L568.4 379.3ZM568.4 379.3L561.3 384.7L558.6 384.3L566 378.6ZM566 378.6L558.6 384.3L556.8 384L564.3 378.2ZM564.9 385.4L560.1 391.1L556.2 390.7L561.3 384.7ZM561.3 384.7L556.2 390.7L553.3 390.4L558.6 384.3ZM558.6 384.3L553.3 390.4L551.4 390.2L556.8 384ZM560.1 391.1L557.3 397.1L553.3 397L556.2 390.7ZM556.2 390.7L553.3 397L550.3 396.9L553.3 390.4ZM553.3 390.4L550.3 396.9L548.2 396.9L551.4 390.2ZM557.3 397.1L556.8 403.3L552.7 403.5L553.3 397ZM553.3 397L552.7 403.5L549.7 403.6L550.3 396.9ZM550.3 396.9L549.7 403.6L547.6 403.7L548.2 396.9ZM556.8 403.3L558.6 409.5L554.6 410L552.7 403.5ZM552.7 403.5L554.6 410L551.5 410.3L549.7 403.6ZM549.7 403.6L551.5 410.3L549.5 410.6L547.6 403.7Z"/>
<path fill="#ff8440" d="M549.5 410.7L554.1 417.4L553.1 417.6L548.5 410.8ZM548.5 410.8L553.1 417.6L553.1 417.6L548.5 410.8ZM554.1 417.4L561.2 423.8L560.2 424L553.1 417.6ZM553.1 417.6L560.2 424L560.2 424L553.1 417.6ZM561.2 423.8L570.7 429.6L569.8 429.9L560.2 424ZM560.2 424L569.8 429.9L569.8 429.9L560.2 424ZM570.7 429.6L582.4 434.7L581.7 435.1L569.8 429.9ZM569.8 429.9L581.7 435.1L581.7 435.1L569.8 429.9ZM582.4 434.7L596 438.9L595.4 439.3L581.7 435.1ZM581.7 435.1L595.4 439.3L595.4 439.3L581.7 435.1ZM596 438.9L611.1 442L610.7 442.5L595.4 439.3ZM595.4 439.3L610.7 442.5L610.7 442.5L595.4 439.3ZM611.1 442L627.3 444L627.1 444.5L610.7 442.5ZM610.7 442.5L627.1 444.5L627.1 444.5L610.7 442.5ZM627.3 444L644.1 444.7L644.1 445.2L627.1 444.5ZM627.1 444.5L644.1 445.2L644.1 445.2L627.1 444.5ZM644.1 444.7L660.9 444.2L661.1 444.7L644.1 445.2ZM644.1 445.2L661.1 444.7L661.1 444.7L644.1 445.2ZM660.9 444.2L677.2 442.4L677.6 442.9L661.1 444.7ZM661.1 444.7L677.6 442.9L677.6 442.9L661.1 444.7ZM677.2 442.4L692.6 439.5L693.1 439.9L677.6 442.9ZM677.6 442.9L693.1 439.9L693.1 439.9L677.6 442.9ZM692.6 439.5L706.5 435.4L707.2 435.8L693.1 439.9ZM693.1 439.9L707.2 435.8L707.2 435.8L693.1 439.9ZM706.5 435.4L718.5 430.5L719.3 430.8L707.2 435.8ZM707.2 435.8L719.3 430.8L719.3 430.8L707.2 435.8ZM718.5 430.5L728.4 424.8L729.3 425L719.3 430.8ZM719.3 430.8L729.3 425L729.3 425L719.3 430.8ZM728.4 424.8L735.8 418.5L736.8 418.7L729.3 425ZM729.3 425L736.8 418.7L736.8 418.7L729.3 425ZM735.8 418.5L740.8 411.8L741.8 411.9L736.8 418.7ZM736.8 418.7L741.8 411.9L741.8 411.9L736.8 418.7ZM740.8 411.8L743.1 404.9L744.1 405L741.8 411.9ZM741.8 411.9L744.1 405L744.1 405L741.8 411.9ZM743.1 404.9L742.8 398L743.9 398L744.1 405ZM744.1 405L743.9 398L743.9 398L744.1 405ZM742.8 398L740.1 391.3L741.1 391.3L743.9 398ZM743.9 398L741.1 391.3L741.1 391.3L743.9 398ZM740.1 391.3L735 385L735.9 384.8L741.1 391.3ZM741.1 391.3L735.9 384.8L735.9 384.8L741.1 391.3ZM735 385L727.8 379.1L728.6 378.9L735.9 384.8ZM735.9 384.8L728.6 378.9L728.6 378.9L735.9 384.8ZM727.8 379.1L718.6 373.9L719.4 373.6L728.6 378.9ZM728.6 378.9L719.4 373.6L719.4 373.6L728.6 378.9ZM718.6 373.9L707.8 369.3L708.5 369L719.4 373.6ZM719.4 373.6L708.5 369L708.5 369L719.4 373.6ZM707.8 369.3L695.7 365.6L696.2 365.2L708.5 369ZM708.5 369L696.2 365.2L696.2 365.2L708.5 369ZM695.7 365.6L682.4 362.7L682.8 362.3L696.2 365.2ZM696.2 365.2L682.8 362.3L682.8 362.3L696.2 365.2ZM682.4 362.7L668.4 360.7L668.6 360.3L682.8 362.3ZM682.8 362.3L668.6 360.3L668.6 360.3L682.8 362.3ZM668.4 360.7L653.8 359.7L653.9 359.3L668.6 360.3ZM668.6 360.3L653.9 359.3L653.9 359.3L668.6 360.3ZM653.8 359.7L639.1 359.6L639.1 359.2L653.9 359.3ZM653.9 359.3L639.1 359.2L639.1 359.2L653.9 359.3ZM639.1 359.6L624.6 360.5L624.4 360.1L639.1 359.2ZM639.1 359.2L624.4 360.1L624.4 360.1L639.1 359.2ZM624.6 360.5L610.5 362.3L610.1 361.9L624.4 360.1ZM624.4 360.1L610.1 361.9L610.1 361.9L624.4 360.1ZM610.5 362.3L597.1 365L596.6 364.7L610.1 361.9ZM610.1 361.9L596.6 364.7L596.6 364.7L610.1 361.9ZM597.1 365L584.7 368.7L584.1 368.3L596.6 364.7ZM596.6 364.7L584.1 368.3L584.1 368.3L596.6 364.7ZM584.7 368.7L573.7 373.1L573 372.8L584.1 368.3ZM584.1 368.3L573 372.8L573 372.8L584.1 368.3ZM573.7 373.1L564.3 378.2L563.5 378L573 372.8ZM573 372.8L563.5 378L563.5 378L573 372.8ZM564.3 378.2L556.8 384L555.9 383.8L563.5 378ZM563.5 378L555.9 383.8L555.9 383.8L563.5 378ZM556.8 384L551.4 390.2L550.4 390.1L555.9 383.8ZM555.9 383.8L550.4 390.1L550.4 390.1L555.9 383.8ZM551.4 390.2L548.2 396.9L547.2 396.8L550.4 390.1ZM550.4 390.1L547.2 396.8L547.2 396.8L550.4 390.1ZM548.2 396.9L547.6 403.7L546.5 403.7L547.2 396.8ZM547.2 396.8L546.5 403.7L546.5 403.7L547.2 396.8ZM547.6 403.7L549.5 410.6L548.4 410.7L546.5 403.7ZM546.5 403.7L548.4 410.7L548.4 410.7L546.5 403.7Z"/>
<path fill="#ff5f10" d="M554.1 417.4L561.2 423.8L560.2 424L553.1 417.6ZM561.2 423.8L570.7 429.6L569.8 429.9L560.2 424ZM570.7 429.6L582.4 434.7L581.7 435.1L569.8 429.9ZM627.3 444L644.1 444.7L644.1 445.2L627.1 444.5ZM660.9 444.2L677.2 442.4L677.6 442.9L661.1 444.7ZM677.2 442.4L692.6 439.5L693.1 439.9L677.6 442.9ZM706.5 435.4L718.5 430.5L719.3 430.8L707.2 435.8ZM742.8 398L740.1 391.3L741.1 391.3L743.9 398ZM727.8 379.1L718.6 373.9L719.4 373.6L728.6 378.9ZM639.1 359.6L624.6 360.5L624.4 360.1L639.1 359.2ZM624.6 360.5L610.5 362.3L610.1 361.9L624.4 360.1ZM548.2 396.9L547.6 403.7L546.5 403.7L547.2 396.8Z"/>
<path fill="#ff5210" d="M554.7 410.1L559 416.4L556.1 417L551.6 410.4ZM563 423.2L572.3 428.9L570.7 429.6L561.2 423.8ZM572.3 428.9L583.8 433.9L582.4 434.7L570.7 429.6ZM598.7 436.7L613 439.6L611.9 441L597.1 438ZM611.9 441L627.7 443L627.3 444L611.1 442ZM613 439.6L628.3 441.5L627.7 443L611.9 441ZM614.5 437.7L629.1 439.5L628.3 441.5L613 439.6ZM627.7 443L644.1 443.7L644.1 444.7L627.3 444ZM629.1 439.5L644.2 440.1L644.2 442.2L628.3 441.5ZM644.2 440.1L659.3 439.7L660 441.7L644.2 442.2ZM660 441.7L675.5 440L676.5 441.4L660.6 443.2ZM659.3 439.7L674.1 438.1L675.5 440L660 441.7ZM676.5 441.4L691.5 438.6L692.6 439.5L677.2 442.4ZM674.1 438.1L687.9 435.5L689.9 437.2L675.5 440ZM691.5 438.6L705.1 434.6L706.5 435.4L692.6 439.5ZM689.9 437.2L703.1 433.4L705.1 434.6L691.5 438.6ZM705.1 434.6L716.9 429.8L718.5 430.5L706.5 435.4ZM714.5 428.7L723.8 423.4L726.6 424.2L716.9 429.8ZM733.9 418L738.7 411.5L740.8 411.8L735.8 418.5ZM730.9 417.4L735.7 411.1L738.7 411.5L733.9 418ZM738.7 411.5L741 404.8L743.1 404.9L740.8 411.8ZM731.6 410.6L733.8 404.4L737.9 404.6L735.7 411.1ZM737.9 404.6L737.7 398.1L740.8 398.1L741 404.8ZM733.8 404.4L733.7 398.1L737.7 398.1L737.9 404.6ZM740.8 398.1L738.1 391.5L740.1 391.3L742.8 398ZM733.7 398.1L731.3 392.1L735.2 391.7L737.7 398.1ZM731.3 392.1L726.8 386.3L730.4 385.7L735.2 391.7ZM730.4 385.7L723.6 380.2L726.1 379.5L733.2 385.3ZM726.1 379.5L717.2 374.4L718.6 373.9L727.8 379.1ZM720.3 381L712 376.2L714.9 375.1L723.6 380.2ZM714.9 375.1L704.7 370.8L706.6 369.9L717.2 374.4ZM693.2 367.2L680.6 364.5L681.7 363.4L694.7 366.2ZM681.7 363.4L667.9 361.5L668.4 360.7L682.4 362.7ZM679.1 365.9L666.3 364.1L667.2 362.6L680.6 364.5ZM653.7 360.5L639.3 360.4L639.1 359.6L653.8 359.7ZM653.4 361.6L639.4 361.5L639.3 360.4L653.7 360.5ZM639.3 360.4L625 361.2L624.6 360.5L639.1 359.6ZM639.7 363.1L626.4 363.9L625.6 362.4L639.4 361.5ZM611.1 363L598 365.7L597.1 365L610.5 362.3ZM612.2 364.1L599.5 366.7L598 365.7L611.1 363ZM598 365.7L585.9 369.3L584.7 368.7L597.1 365ZM601.4 368.1L590.2 371.4L587.8 370.2L599.5 366.7ZM585.9 369.3L575.2 373.6L573.7 373.1L584.7 368.7ZM587.8 370.2L577.3 374.4L575.2 373.6L585.9 369.3ZM590.2 371.4L580.2 375.4L577.3 374.4L587.8 370.2ZM575.2 373.6L566 378.6L564.3 378.2L573.7 373.1ZM577.3 374.4L568.4 379.3L566 378.6L575.2 373.6ZM571.7 380.1L564.9 385.4L561.3 384.7L568.4 379.3ZM561.3 384.7L556.2 390.7L553.3 390.4L558.6 384.3ZM550.3 396.9L549.7 403.6L547.6 403.7L548.2 396.9ZM552.7 403.5L554.6 410L551.5 410.3L549.7 403.6ZM556.8 403.3L558.6 409.5L554.6 410L552.7 403.5Z"/>
<path fill="#ff4610" d="M569.4 408.3L573.2 413.6L567.6 414.7L563.6 409ZM586.5 423.1L595.8 427.1L591.9 429.3L581.9 425ZM591.9 429.3L603.5 432.8L600.9 434.9L588.6 431.2ZM595.8 427.1L606.6 430.3L603.5 432.8L591.9 429.3ZM603.5 432.8L616.3 435.4L614.5 437.7L600.9 434.9ZM644.3 437.7L658.5 437.3L659.3 439.7L644.2 440.1ZM644.3 434.8L657.5 434.4L658.5 437.3L644.3 437.7ZM658.5 437.3L672.3 435.8L674.1 438.1L659.3 439.7ZM670.3 433.1L682.4 430.8L685.4 433.3L672.3 435.8ZM685.4 433.3L697.2 429.9L700.4 431.8L687.9 435.5ZM715.9 420.9L722.4 415.6L727.1 416.6L720.3 422.3ZM716.8 414.4L720.9 409.1L726.7 409.9L722.4 415.6ZM726.7 409.9L728.8 404.1L733.8 404.4L731.6 410.6ZM728.8 404.1L728.7 398.2L733.7 398.1L733.8 404.4ZM722.9 403.7L722.9 398.3L728.7 398.2L728.8 404.1ZM728.7 398.2L726.5 392.5L731.3 392.1L733.7 398.1ZM726.5 392.5L722.3 387L726.8 386.3L731.3 392.1ZM717 387.8L711.3 383.1L716.2 382L722.3 387ZM716.2 382L708.4 377.4L712 376.2L720.3 381ZM711.3 383.1L704.1 378.9L708.4 377.4L716.2 382ZM708.4 377.4L699.2 373.5L702.2 372L712 376.2ZM688.7 370.2L677.3 367.7L679.1 365.9L691.2 368.6ZM685.8 372.2L675.2 369.8L677.3 367.7L688.7 370.2ZM677.3 367.7L665.2 366L666.3 364.1L679.1 365.9ZM665.2 366L652.7 365.1L653.1 363.2L666.3 364.1ZM663.9 368.2L652.2 367.3L652.7 365.1L665.2 366ZM615.2 367.4L603.7 369.8L601.4 368.1L613.5 365.6ZM617.2 369.5L606.5 371.7L603.7 369.8L615.2 367.4ZM603.7 369.8L593.1 372.9L590.2 371.4L601.4 368.1ZM606.5 371.7L596.6 374.7L593.1 372.9L603.7 369.8ZM587.9 378.2L580.4 382.4L575.7 381.2L583.7 376.7ZM574.5 387L570.4 392L564.8 391.5L569.3 386.1ZM562.2 397.2L561.8 403L556.8 403.3L557.3 397.1Z"/>
<path fill="#ff3a10" d="M591.3 405.7L594.1 409.4L586.5 410.9L583.3 406.6ZM584.8 416.9L591.7 421L586.5 423.1L578.9 418.6ZM598.3 412.9L603.7 416.1L597.5 418.7L591.2 415ZM591.7 421L600.2 424.6L595.8 427.1L586.5 423.1ZM605.1 421.8L613.9 424.5L610.1 427.5L600.2 424.6ZM613.9 424.5L623.6 426.4L620.9 429.7L610.1 427.5ZM623.6 426.4L633.9 427.6L632.5 431.1L620.9 429.7ZM644.5 428.1L655.2 427.8L656.4 431.3L644.4 431.6ZM656.4 431.3L668.1 430L670.3 433.1L657.5 434.4ZM655.2 427.8L665.6 426.7L668.1 430L656.4 431.3ZM665.6 426.7L675.4 424.8L679.1 427.9L668.1 430ZM679.1 427.9L689.1 425.1L693.4 427.7L682.4 430.8ZM679.2 419.3L686 416.6L692.1 419.2L684.3 422.3ZM692.1 419.2L698.6 415.6L705 417.6L697.8 421.6ZM691.7 413.5L696.1 410L703.6 411.6L698.6 415.6ZM710.6 413.1L714.3 408.3L720.9 409.1L716.8 414.4ZM703.6 411.6L707 407.3L714.3 408.3L710.6 413.1ZM708.7 402.9L708.8 398.4L716.2 398.3L716.2 403.3ZM704.2 389.9L699.6 386L705.8 384.5L710.9 388.8ZM699.6 386L693.7 382.5L699.2 380.6L705.8 384.5ZM692.8 387.6L687.7 384.5L693.7 382.5L699.6 386ZM693.7 382.5L686.7 379.4L691.4 377.2L699.2 380.6ZM674.6 379.6L666.9 377.9L670 374.9L678.7 376.9ZM672.7 372.2L662.4 370.7L663.9 368.2L675.2 369.8ZM670 374.9L660.7 373.6L662.4 370.7L672.7 372.2ZM666.9 377.9L658.8 376.7L660.7 373.6L670 374.9ZM660.7 373.6L651 372.9L651.6 369.9L662.4 370.7ZM658.8 376.7L650.3 376.1L651 372.9L660.7 373.6ZM641.7 376L633.2 376.6L631.5 373.4L641.2 372.8ZM630 370.5L619.5 371.9L617.2 369.5L628.6 368ZM633.2 376.6L625 377.7L622.1 374.7L631.5 373.4ZM619.5 371.9L609.7 374L606.5 371.7L617.2 369.5ZM625 377.7L617.2 379.3L613.3 376.5L622.1 374.7ZM617.2 379.3L610.1 381.4L605.2 378.9L613.3 376.5ZM610.1 381.4L603.8 384.1L598 381.9L605.2 378.9ZM592.6 380L585.9 383.8L580.4 382.4L587.9 378.2ZM598 381.9L591.9 385.4L585.9 383.8L592.6 380ZM598.6 387.1L594.4 390.4L587.1 389.2L591.9 385.4ZM587.1 389.2L583.8 393.3L576.7 392.6L580.5 388ZM594.4 390.4L591.5 394.1L583.8 393.3L587.1 389.2ZM576.7 392.6L574.6 397.5L568 397.3L570.4 392ZM591.5 394.1L590 397.9L582 397.7L583.8 393.3ZM582 397.7L581.8 402.1L574.4 402.5L574.6 397.5ZM590 397.9L589.9 401.7L581.8 402.1L582 397.7ZM574.4 402.5L576 407.4L569.4 408.2L567.7 402.8ZM581.8 402.1L583.3 406.5L576 407.4L574.4 402.5ZM589.9 401.7L591.2 405.6L583.3 406.5L581.8 402.1Z"/>
<path fill="#ff2d10" d="M599.8 404.7L602.2 407.8L594.1 409.4L591.3 405.7ZM637.3 400.1L637.8 400.7L628.6 402.5L627.6 401.3ZM647.1 399L647 398.8L637.8 400.7L637.3 400.1ZM656.8 397.8L656.1 397L665.1 395.2L666.4 396.6ZM666.4 396.6L665.1 395.2L673.8 393.5L675.7 395.5ZM675.7 395.5L673.8 393.5L682.2 391.8L684.6 394.4ZM610.7 406.1L613.6 408.4L605.7 410.7L602.2 407.8ZM628.6 402.5L630 403.6L621.7 406.1L619.5 404.3ZM647 398.8L646.8 398.7L638.4 401.2L637.8 400.7ZM665.1 395.2L663.4 393.9L671.3 391.6L673.8 393.5ZM673.8 393.5L671.3 391.6L678.9 389.4L682.2 391.8ZM613.6 408.4L617.3 410.6L610.4 413.4L605.7 410.7ZM621.7 406.1L624.5 407.6L617.3 410.6L613.6 408.4ZM646.8 398.7L646.7 398.6L639.3 401.6L638.4 401.2ZM655.2 396.3L654 395.6L661.1 392.7L663.4 393.9ZM624.5 407.6L627.9 409L621.8 412.4L617.3 410.6ZM654 395.6L652.6 395.1L658.5 391.7L661.1 392.7ZM668.1 389.9L664.3 388.5L669.8 385.3L674.7 387.2ZM621.8 412.4L627 413.9L622.4 417.6L616 415.7ZM627.9 409L631.7 410.1L627 413.9L621.8 412.4ZM640.2 402L641.4 402.3L636.5 406.2L634 405.5ZM652.6 395.1L650.9 394.6L655.6 390.9L658.5 391.7ZM627 413.9L632.6 415L629.5 419L622.4 417.6ZM641.4 402.3L642.6 402.6L639.2 406.8L636.5 406.2ZM646.2 398.5L645.9 398.4L642.6 402.6L641.4 402.3ZM655.6 390.9L652.4 390.3L655.5 386.4L660.1 387.3ZM660.1 387.3L655.5 386.4L658.4 382.8L664.3 383.9ZM629.5 419L637 419.9L635.4 423.9L626.4 422.8ZM635.9 410.9L640.4 411.5L638.7 415.7L632.6 415ZM639.2 406.8L642.1 407.1L640.4 411.5L635.9 410.9ZM645.9 398.4L645.6 398.4L647.3 394.1L649.2 394.3ZM645.6 398.4L645.3 398.4L645.2 402.8L643.9 402.7ZM645.6 398.4L645.3 398.4L645.4 394L647.3 394.1ZM647.3 394.1L645.4 394L645.5 389.8L649 389.9ZM649 389.9L645.5 389.8L645.7 385.7L650.6 385.9ZM650.6 385.9L645.7 385.7L645.8 381.8L652.2 382.1ZM644.7 420.2L652.5 420L653.9 424L644.6 424.3ZM645 411.6L649.6 411.5L651.1 415.8L644.8 416ZM645.3 398.4L645 398.4L646.5 402.7L645.2 402.8ZM645.3 398.4L645 398.4L643.5 394.1L645.4 394ZM645.4 394L643.5 394.1L642.1 389.9L645.5 389.8ZM645.5 389.8L642.1 389.9L640.7 385.9L645.7 385.7ZM645.7 385.7L640.7 385.9L639.3 382L645.8 381.8ZM652.5 420L660.1 419.2L662.9 423L653.9 424ZM649.6 411.5L654.1 411L657.1 415.2L651.1 415.8ZM648.1 407.1L651 406.8L654.1 411L649.6 411.5ZM645 398.4L644.7 398.4L647.8 402.6L646.5 402.7ZM645 398.4L644.7 398.4L641.7 394.3L643.5 394.1ZM643.5 394.1L641.7 394.3L638.7 390.2L642.1 389.9ZM642.1 389.9L638.7 390.2L635.8 386.3L640.7 385.9ZM657.1 415.2L662.8 414.1L667.2 417.9L660.1 419.2ZM651 406.8L653.7 406.3L658.3 410.3L654.1 411ZM647.8 402.6L649.1 402.4L653.7 406.3L651 406.8ZM638.7 390.2L635.5 390.8L631.2 387.1L635.8 386.3ZM667.2 417.9L673.8 416L679.2 419.3L671.4 421.4ZM662.8 414.1L668.1 412.7L673.8 416L667.2 417.9ZM658.3 410.3L662.2 409.2L668.1 412.7L662.8 414.1ZM649.1 402.4L650.2 402.1L656.2 405.7L653.7 406.3ZM635.5 390.8L632.5 391.6L626.9 388.3L631.2 387.1ZM631.2 387.1L626.9 388.3L621.5 385.1L627.1 383.7ZM662.2 409.2L665.6 407.9L672.7 410.9L668.1 412.7ZM656.2 405.7L658.5 404.8L665.6 407.9L662.2 409.2ZM638.3 395L636.8 395.5L629.8 392.6L632.5 391.6ZM626.9 388.3L623 389.7L616.6 386.9L621.5 385.1ZM665.6 407.9L668.5 406.3L676.5 408.8L672.7 410.9ZM651.2 401.7L652.1 401.3L660.3 403.8L658.5 404.8ZM644 398.6L643.8 398.7L652.1 401.3L651.2 401.7ZM644 398.6L643.8 398.7L635.6 396.2L636.8 395.5ZM636.8 395.5L635.6 396.2L627.5 393.7L629.8 392.6ZM629.8 392.6L627.5 393.7L619.8 391.3L623 389.7ZM676.5 408.8L679.6 406.5L688 408.3L684.3 411.2ZM668.5 406.3L670.8 404.6L679.6 406.5L676.5 408.8ZM652.1 401.3L652.7 400.8L661.8 402.7L660.3 403.8ZM643.8 398.7L643.6 398.8L652.7 400.8L652.1 401.3ZM635.6 396.2L634.6 396.9L625.7 395L627.5 393.7ZM627.5 393.7L625.7 395L617.1 393.2L619.8 391.3ZM688 408.3L690.6 405.2L699.1 406.3L696.1 410ZM670.8 404.6L672.4 402.8L681.7 404L679.6 406.5ZM661.8 402.7L662.9 401.5L672.4 402.8L670.8 404.6ZM652.7 400.8L653.2 400.2L662.9 401.5L661.8 402.7ZM643.6 398.8L643.5 398.9L653.2 400.2L652.7 400.8ZM634.6 396.9L633.9 397.7L624.4 396.4L625.7 395ZM625.7 395L624.4 396.4L615.2 395.2L617.1 393.2ZM617.1 393.2L615.2 395.2L606.3 394L608.8 391.4ZM690.6 405.2L692 401.9L700.6 402.4L699.1 406.3ZM662.9 401.5L663.5 400.2L673.3 400.8L672.4 402.8ZM643.5 398.9L643.4 399.1L653.5 399.7L653.2 400.2ZM624.4 396.4L623.6 397.9L614 397.3L615.2 395.2ZM663.5 400.2L663.6 399L673.4 398.8L673.3 400.8ZM653.5 399.7L653.5 399.1L663.6 399L663.5 400.2ZM643.4 399.1L643.4 399.2L633.3 399.3L633.4 398.5ZM683 398.7L682.2 396.1L691.1 395.4L692.1 398.6ZM663.6 399L663.2 397.7L672.8 396.9L673.4 398.8ZM643.4 399.2L643.5 399.3L633.5 400.2L633.3 399.3ZM613.6 399.6L614 401.8L604.7 402.5L604.2 399.7ZM691.1 395.4L688.8 392.3L696.8 391L699.5 394.7ZM682.2 396.1L680.4 393.6L688.8 392.3L691.1 395.4ZM643.5 399.3L643.5 399.5L653 398L653.4 398.5ZM643.5 399.3L643.5 399.5L634 401L633.5 400.2ZM623.7 401L624.6 402.5L615.3 403.9L614 401.8ZM685.5 389.4L681.2 386.8L687.7 384.5L692.8 387.6ZM661.2 395.3L659.5 394.3L667.1 391.7L669.6 393.3ZM643.7 399.6L643.8 399.7L651.7 397L652.5 397.4ZM643.7 399.6L643.8 399.7L635.9 402.4L634.8 401.7ZM617.3 406L620.1 407.9L612.5 410.5L608.9 408ZM674.3 389.2L670.2 387.3L676.1 384.5L681.2 386.8ZM667.1 391.7L664 390.3L670.2 387.3L674.3 389.2ZM659.5 394.3L657.5 393.4L664 390.3L667.1 391.7ZM643.8 399.7L644 399.8L637.2 403L635.9 402.4ZM627.9 405.2L630.4 406.3L623.6 409.5L620.1 407.9ZM676.1 384.5L670.2 382.6L674.6 379.6L681.6 381.9ZM670.2 387.3L665.4 385.8L670.2 382.6L676.1 384.5ZM664 390.3L660.4 389.1L665.4 385.8L670.2 387.3ZM644 399.8L644.3 399.9L649.8 396.2L650.8 396.5ZM637.2 403L638.7 403.6L633.2 407.3L630.4 406.3ZM644.3 399.9L644.5 399.9L648.6 395.9L649.8 396.2ZM644.3 399.9L644.5 399.9L640.4 404L638.7 403.6ZM638.7 403.6L640.4 404L636.3 408L633.2 407.3ZM633.2 407.3L636.3 408L632.2 412L627.7 410.9ZM627.7 410.9L632.2 412L628.2 415.9L622.3 414.5ZM663.7 381.1L656.7 380.1L658.8 376.7L666.9 377.9ZM656.5 388.2L652.3 387.6L654.6 383.7L660.2 384.6ZM652.6 392L649.8 391.6L652.3 387.6L656.5 388.2ZM648.6 395.9L647.4 395.7L649.8 391.6L652.6 392ZM644.5 399.9L644.8 400L647.4 395.7L648.6 395.9ZM644.5 399.9L644.8 400L642.3 404.3L640.4 404ZM636.3 408L639.7 408.5L637.1 412.8L632.2 412ZM654.6 383.7L648.7 383.3L649.5 379.6L656.7 380.1ZM644.8 400L645.1 400L646.1 395.6L647.4 395.7ZM644.8 400L645.1 400L644.2 404.4L642.3 404.3ZM642.3 404.3L644.2 404.4L643.2 408.8L639.7 408.5ZM639.7 408.5L643.2 408.8L642.3 413.2L637.1 412.8ZM637.1 412.8L642.3 413.2L641.3 417.5L634.6 417ZM648.7 383.3L642.8 383.3L642.2 379.5L649.5 379.6ZM646.1 395.6L644.7 395.6L644.1 391.4L647 391.4ZM645.1 400L645.4 400L646.1 404.4L644.2 404.4ZM644.2 404.4L646.1 404.4L646.8 408.8L643.2 408.8ZM643.2 408.8L646.8 408.8L647.5 413.2L642.3 413.2ZM642.8 383.3L637 383.6L635 380L642.2 379.5ZM644.7 395.6L643.4 395.7L641.2 391.5L644.1 391.4ZM646.1 404.4L648 404.3L650.3 408.6L646.8 408.8ZM635 380L628 380.9L625 377.7L633.2 376.6ZM639 387.5L634.8 388.1L631.3 384.4L637 383.6ZM641.2 391.5L638.4 391.9L634.8 388.1L639 387.5ZM645.7 400L646 399.9L642.2 395.9L643.4 395.7ZM650.3 408.6L653.8 408.1L657.6 412.2L652.6 412.9ZM646 399.9L646.3 399.9L651.6 403.6L649.9 404ZM657.6 412.2L662.2 411.1L667.4 414.8L661.3 416.2ZM621.5 382.3L615.5 384.1L610.1 381.4L617.2 379.3ZM626 385.5L621.2 387L615.5 384.1L621.5 382.3ZM641 396.1L639.9 396.5L633.5 393.2L635.8 392.5ZM646.3 399.9L646.5 399.8L653.2 403.1L651.6 403.6ZM651.6 403.6L653.2 403.1L659.8 406.5L656.9 407.4ZM656.9 407.4L659.8 406.5L666.4 409.8L662.2 411.1ZM639.9 396.5L639 396.9L631.4 394.1L633.5 393.2ZM646.5 399.8L646.7 399.7L654.5 402.5L653.2 403.1ZM624 391.4L621.4 393L613.4 390.9L616.9 388.8ZM639 396.9L638.2 397.3L629.7 395.1L631.4 394.1ZM646.7 399.7L646.9 399.6L638.2 397.3L639 396.9ZM662.3 405.4L664.3 404.1L672.9 406.3L669.9 408.2ZM669.9 408.2L672.9 406.3L681.2 408.5L677.4 410.9ZM613.4 390.9L610.6 393.2L602.3 391.8L605.7 388.9ZM638.2 397.3L637.6 397.9L628.4 396.3L629.7 395.1ZM655.6 401.9L656.5 401.1L665.8 402.7L664.3 404.1ZM664.3 404.1L665.8 402.7L675 404.3L672.9 406.3ZM602.3 391.8L599.9 394.8L591.5 394.1L594.4 390.4ZM619.3 394.7L617.9 396.6L608.7 395.7L610.6 393.2ZM647 399.5L647.1 399.4L657 400.3L656.5 401.1ZM656.5 401.1L657 400.3L666.8 401.2L665.8 402.7ZM617.9 396.6L617.2 398.5L607.7 398.3L608.7 395.7ZM627.5 397.5L627 398.7L617.2 398.5L617.9 396.6ZM676.4 402.1L677 399.9L686.4 400.2L685.7 403ZM607.7 398.3L607.7 400.9L598.6 401.3L598.6 398.1ZM627 398.7L627.1 400L617.3 400.5L617.2 398.5ZM637.1 399L637.1 399.6L627.1 400L627 398.7ZM657.3 399.5L657.2 398.6L667.1 398.2L667.2 399.7ZM677 399.9L676.8 397.7L686.1 397.3L686.4 400.2ZM607.7 400.9L608.7 403.5L599.7 404.6L598.6 401.3ZM617.3 400.5L618 402.4L608.7 403.5L607.7 400.9ZM627.1 400L627.6 401.3L618 402.4L617.3 400.5ZM637.1 399.6L637.3 400.1L627.6 401.3L627.1 400ZM647.2 399.1L647.1 399L637.3 400.1L637.1 399.6ZM647.2 399.1L647.1 399L656.8 397.8L657.2 398.6ZM657.2 398.6L656.8 397.8L666.4 396.7L667.1 398.2ZM667.1 398.2L666.4 396.7L675.7 395.6L676.8 397.7Z"/></g>

   <g opacity=".75"><path fill="#ff2100" d="M599.5 273.7L587.6 276.7L590.6 271.8L601.9 269ZM601.9 269L590.6 271.8L594.2 267.4L604.8 264.8ZM604.8 264.8L594.2 267.4L598.4 263.7L608.1 261.3ZM583.6 288L572.2 291.9L574.2 285.9L585.3 282.1ZM585.3 282.1L574.2 285.9L577 280.3L587.6 276.7ZM587.6 276.7L577 280.3L580.6 275.2L590.6 271.8ZM590.6 271.8L580.6 275.2L584.8 270.6L594.2 267.4ZM594.2 267.4L584.8 270.6L589.8 266.6L598.4 263.7ZM598.4 263.7L589.8 266.6L595.4 263.2L603.1 260.6ZM603.1 260.6L595.4 263.2L601.6 260.5L608.4 258.3ZM570.9 298.3L561.1 303L562.5 296.5L572.2 291.9ZM572.2 291.9L562.5 296.5L564.8 290.3L574.2 285.9ZM574.2 285.9L564.8 290.3L568 284.5L577 280.3ZM577 280.3L568 284.5L572 279.1L580.6 275.2ZM580.6 275.2L572 279.1L576.9 274.2L584.8 270.6ZM584.8 270.6L576.9 274.2L582.5 269.9L589.8 266.6ZM589.8 266.6L582.5 269.9L588.9 266.2L595.4 263.2ZM561.1 303L553.1 308.3L554.7 301.6L562.5 296.5ZM562.5 296.5L554.7 301.6L557.3 295.2L564.8 290.3ZM564.8 290.3L557.3 295.2L560.8 289.2L568 284.5ZM568 284.5L560.8 289.2L565.2 283.5L572 279.1ZM572 279.1L565.2 283.5L570.5 278.3L576.9 274.2ZM576.9 274.2L570.5 278.3L576.7 273.6L582.5 269.9ZM553.1 308.3L547.4 314L549.1 307.2L554.7 301.6ZM554.7 301.6L549.1 307.2L551.8 300.6L557.3 295.2ZM557.3 295.2L551.8 300.6L555.6 294.2L560.8 289.2ZM560.8 289.2L555.6 294.2L560.3 288.3L565.2 283.5ZM547.4 314L544.1 320.1L545.9 313.1L549.1 307.2ZM549.1 307.2L545.9 313.1L548.7 306.3L551.8 300.6Z"/></g><path d="M553.1 308.3L554.7 301.6M560.8 289.2L565.2 283.5M572 279.1L565.2 283.5M561.1 303L562.5 296.5M570.5 278.3L576.7 273.6M549.1 307.2L545.9 313.1M608.1 261.3L598.4 263.7M604.8 264.8L608.1 261.3M583.6 288L572.2 291.9M570.9 298.3L561.1 303M562.5 296.5L564.8 290.3M547.4 314L549.1 307.2M584.8 270.6L576.9 274.2M595.4 263.2L601.6 260.5M545.9 313.1L548.7 306.3M572.2 291.9L574.2 285.9M590.6 271.8L580.6 275.2M555.6 294.2L560.3 288.3M565.2 283.5L560.3 288.3M587.6 276.7L590.6 271.8M576.9 274.2L570.5 278.3M574.2 285.9L577 280.3M603.1 260.6L608.4 258.3M585.3 282.1L587.6 276.7M599.5 273.7L587.6 276.7M604.8 264.8L594.2 267.4M601.9 269L604.8 264.8M568 284.5L572 279.1M594.2 267.4L584.8 270.6M608.4 258.3L601.6 260.5M595.4 263.2L588.9 266.2M572.2 291.9L562.5 296.5M570.9 298.3L572.2 291.9M598.4 263.7L589.8 266.6M580.6 275.2L572 279.1M572 279.1L576.9 274.2M561.1 303L553.1 308.3M549.1 307.2L551.8 300.6M551.8 300.6L555.6 294.2M577 280.3L580.6 275.2M589.8 266.6L595.4 263.2M583.6 288L585.3 282.1M574.2 285.9L564.8 290.3M564.8 290.3L557.3 295.2M562.5 296.5L554.7 301.6M557.3 295.2L560.8 289.2M565.2 283.5L570.5 278.3M553.1 308.3L547.4 314M560.8 289.2L555.6 294.2M547.4 314L544.1 320.1M554.7 301.6L557.3 295.2M590.6 271.8L594.2 267.4M599.5 273.7L601.9 269M598.4 263.7L603.1 260.6M564.8 290.3L568 284.5M587.6 276.7L577 280.3M603.1 260.6L595.4 263.2M576.9 274.2L582.5 269.9M544.1 320.1L545.9 313.1M582.5 269.9L576.7 273.6M585.3 282.1L574.2 285.9M577 280.3L568 284.5M589.8 266.6L582.5 269.9M584.8 270.6L589.8 266.6M557.3 295.2L551.8 300.6M580.6 275.2L584.8 270.6M594.2 267.4L598.4 263.7M568 284.5L560.8 289.2M554.7 301.6L549.1 307.2M551.8 300.6L548.7 306.3M601.9 269L590.6 271.8M582.5 269.9L588.9 266.2" stroke="#008000" stroke-width=".8" fill="none" opacity=".5"/>
   <g opacity="0.75"><path fill="#ffa000" stroke="#ffa000" stroke-width=".5" d=""/>
<path fill="#ff9600" stroke="#ff9600" stroke-width=".5" d="M623.5 411L633.9 412.2L635.4 412.6L626.4 411.5ZM633.9 412.2L644.7 412.6L644.7 412.9L635.4 412.6ZM644.7 412.6L655.4 412.3L654.1 412.7L644.7 412.9ZM655.4 412.3L665.9 411.2L663.1 411.7L654.1 412.7Z"/>
<path fill="#ff8b00" stroke="#ff8b00" stroke-width=".5" d="M585.8 397.9L595.2 401.8L599.8 404.5L591.2 401ZM599.8 404.5L609.8 407.4L613.7 409L604.8 406.5ZM595.2 401.8L606.1 404.9L609.8 407.4L599.8 404.5ZM609.8 407.4L620.8 409.6L623.5 411L613.7 409ZM606.1 404.9L618.3 407.3L620.8 409.6L609.8 407.4ZM620.8 409.6L632.5 410.9L633.9 412.2L623.5 411ZM618.3 407.3L631.2 408.8L632.5 410.9L620.8 409.6ZM632.5 410.9L644.6 411.4L644.7 412.6L633.9 412.2ZM631.2 408.8L644.6 409.3L644.6 411.4L632.5 410.9ZM644.6 411.4L656.7 411L655.4 412.3L644.7 412.6ZM644.6 409.3L658 408.9L656.7 411L644.6 411.4ZM656.7 411L668.6 409.8L665.9 411.2L655.4 412.3ZM658 408.9L671 407.6L668.6 409.8L656.7 411ZM668.6 409.8L679.7 407.8L675.8 409.4L665.9 411.2ZM671 407.6L683.2 405.4L679.7 407.8L668.6 409.8ZM679.7 407.8L689.8 405L684.9 406.9L675.8 409.4ZM683.2 405.4L694.4 402.3L689.8 405L679.7 407.8ZM694.4 402.3L704.1 398.5L698.7 401.6L689.8 405ZM704.1 398.5L712.1 394.2L706 397.6L698.7 401.6Z"/>
<path fill="#ff8100" stroke="#ff8100" stroke-width=".5" d="M572.6 389.3L580.9 394.1L585.8 397.9L578 393.5ZM580.9 394.1L591.1 398.2L595.2 401.8L585.8 397.9ZM591.1 398.2L602.9 401.7L606.1 404.9L595.2 401.8ZM602.9 401.7L616 404.2L618.3 407.3L606.1 404.9ZM616 404.2L630 405.8L631.2 408.8L618.3 407.3ZM630 405.8L644.5 406.4L644.6 409.3L631.2 408.8ZM644.5 406.4L659.1 406L658 408.9L644.6 409.3ZM659.1 406L673.2 404.5L671 407.6L658 408.9ZM673.2 404.5L686.5 402.1L683.2 405.4L671 407.6ZM686.5 402.1L698.5 398.8L694.4 402.3L683.2 405.4ZM698.5 398.8L709 394.8L704.1 398.5L694.4 402.3ZM709 394.8L717.6 390.1L712.1 394.2L704.1 398.5Z"/>
<path fill="#ff7700" stroke="#ff7700" stroke-width=".5" d="M561.2 379L567.8 384.5L572.6 389.3L566.3 384.1ZM556.9 373.3L563.8 379.1L567.8 384.5L561.2 379ZM567.8 384.5L576.7 389.5L580.9 394.1L572.6 389.3ZM563.8 379.1L573.1 384.3L576.7 389.5L567.8 384.5ZM576.7 389.5L587.5 394L591.1 398.2L580.9 394.1ZM573.1 384.3L584.5 388.9L587.5 394L576.7 389.5ZM587.5 394L600.1 397.6L602.9 401.7L591.1 398.2ZM584.5 388.9L597.7 392.7L600.1 397.6L587.5 394ZM600.1 397.6L614.1 400.3L616 404.2L602.9 401.7ZM597.7 392.7L612.5 395.5L614.1 400.3L600.1 397.6ZM614.1 400.3L629 402L630 405.8L616 404.2ZM612.5 395.5L628.2 397.3L629 402L614.1 400.3ZM629 402L644.5 402.6L644.5 406.4L630 405.8ZM628.2 397.3L644.5 398L644.5 402.6L629 402ZM644.5 402.6L660 402.1L659.1 406L644.5 406.4ZM644.5 398L660.9 397.5L660 402.1L644.5 402.6ZM660 402.1L675.1 400.6L673.2 404.5L659.1 406ZM660.9 397.5L676.7 395.9L675.1 400.6L660 402.1ZM675.1 400.6L689.3 398L686.5 402.1L673.2 404.5ZM676.7 395.9L691.6 393.2L689.3 398L675.1 400.6ZM689.3 398L702.1 394.6L698.5 398.8L686.5 402.1ZM691.6 393.2L705.1 389.6L702.1 394.6L689.3 398ZM702.1 394.6L713.3 390.3L709 394.8L698.5 398.8ZM705.1 389.6L716.8 385.1L713.3 390.3L702.1 394.6ZM713.3 390.3L722.4 385.3L717.6 390.1L709 394.8ZM716.8 385.1L726.5 379.9L722.4 385.3L713.3 390.3ZM722.4 385.3L729.4 379.8L724.2 384.9L717.6 390.1ZM726.5 379.9L733.7 374.2L729.4 379.8L722.4 385.3ZM733.7 374.2L738.6 368.1L734 374L729.4 379.8Z"/>
<path fill="#ff6c00" stroke="#ff6c00" stroke-width=".5" d="M549 360.9L553.6 367.2L556.9 373.3L552.5 367.3ZM553.6 367.2L560.7 373.1L563.8 379.1L556.9 373.3ZM560.7 373.1L570.3 378.5L573.1 384.3L563.8 379.1ZM570.3 378.5L582.1 383.2L584.5 388.9L573.1 384.3ZM582.1 383.2L595.9 387.1L597.7 392.7L584.5 388.9ZM595.9 387.1L611.2 390L612.5 395.5L597.7 392.7ZM611.2 390L627.6 391.9L628.2 397.3L612.5 395.5ZM627.6 391.9L644.5 392.5L644.5 398L628.2 397.3ZM644.5 392.5L661.5 392L660.9 397.5L644.5 398ZM661.5 392L678 390.4L676.7 395.9L660.9 397.5ZM678 390.4L693.5 387.6L691.6 393.2L676.7 395.9ZM693.5 387.6L707.6 383.9L705.1 389.6L691.6 393.2ZM707.6 383.9L719.7 379.3L716.8 385.1L705.1 389.6ZM719.7 379.3L729.7 373.9L726.5 379.9L716.8 385.1ZM729.7 373.9L737.2 368.1L733.7 374.2L726.5 379.9ZM737.2 368.1L742.2 361.8L738.6 368.1L733.7 374.2Z"/>
<path fill="#ff6200" stroke="#ff6200" stroke-width=".5" d="M546.5 354.3L551.2 360.6L553.6 367.2L549 360.9ZM551.2 360.6L558.5 366.6L560.7 373.1L553.6 367.2ZM558.5 366.6L568.3 372.1L570.3 378.5L560.7 373.1ZM568.3 372.1L580.5 376.9L582.1 383.2L570.3 378.5ZM580.5 376.9L594.6 380.9L595.9 387.1L582.1 383.2ZM594.6 380.9L610.3 383.8L611.2 390L595.9 387.1ZM610.3 383.8L627.1 385.7L627.6 391.9L611.2 390ZM627.1 385.7L644.6 386.4L644.5 392.5L627.6 391.9ZM644.6 386.4L662 385.9L661.5 392L644.5 392.5ZM662 385.9L679 384.2L678 390.4L661.5 392ZM679 384.2L694.9 381.4L693.5 387.6L678 390.4ZM694.9 381.4L709.3 377.6L707.6 383.9L693.5 387.6ZM709.3 377.6L721.8 372.9L719.7 379.3L707.6 383.9ZM721.8 372.9L732 367.4L729.7 373.9L719.7 379.3ZM732 367.4L739.7 361.5L737.2 368.1L729.7 373.9ZM739.7 361.5L744.8 355.2L742.2 361.8L737.2 368.1Z"/>
<path fill="#ff5800" stroke="#ff5800" stroke-width=".5" d="M545 347.3L549.8 353.7L551.2 360.6L546.5 354.3ZM544.7 340.1L549.4 346.4L549.8 353.7L545 347.3ZM549.8 353.7L557.2 359.7L558.5 366.6L551.2 360.6ZM549.4 346.4L556.8 352.4L557.2 359.7L549.8 353.7ZM557.2 359.7L567.2 365.2L568.3 372.1L558.5 366.6ZM556.8 352.4L566.9 357.9L567.2 365.2L557.2 359.7ZM567.2 365.2L579.5 370L580.5 376.9L568.3 372.1ZM566.9 357.9L579.2 362.7L579.5 370L567.2 365.2ZM579.5 370L593.8 374L594.6 380.9L580.5 376.9ZM579.2 362.7L593.6 366.6L593.8 374L579.5 370ZM593.8 374L609.8 377L610.3 383.8L594.6 380.9ZM593.6 366.6L609.7 369.6L609.8 377L593.8 374ZM609.8 377L626.9 378.8L627.1 385.7L610.3 383.8ZM609.7 369.6L626.9 371.4L626.9 378.8L609.8 377ZM626.9 378.8L644.6 379.5L644.6 386.4L627.1 385.7ZM626.9 371.4L644.7 372.1L644.6 379.5L626.9 378.8ZM644.6 379.5L662.4 379L662 385.9L644.6 386.4ZM644.7 372.1L662.5 371.6L662.4 379L644.6 379.5ZM662.4 379L679.6 377.3L679 384.2L662 385.9ZM662.5 371.6L679.8 369.9L679.6 377.3L662.4 379ZM679.6 377.3L695.8 374.5L694.9 381.4L679 384.2ZM679.8 369.9L696.1 367.1L695.8 374.5L679.6 377.3ZM695.8 374.5L710.4 370.7L709.3 377.6L694.9 381.4ZM696.1 367.1L710.8 363.3L710.4 370.7L695.8 374.5ZM710.4 370.7L723.1 365.9L721.8 372.9L709.3 377.6ZM710.8 363.3L723.5 358.6L723.1 365.9L710.4 370.7ZM723.1 365.9L733.4 360.5L732 367.4L721.8 372.9ZM723.5 358.6L733.9 353.2L733.4 360.5L723.1 365.9ZM733.4 360.5L741.2 354.5L739.7 361.5L732 367.4ZM733.9 353.2L741.7 347.3L741.2 354.5L733.4 360.5ZM741.2 354.5L746.4 348.2L744.8 355.2L739.7 361.5ZM741.7 347.3L746.9 341L746.4 348.2L741.2 354.5ZM746.4 348.2L748.7 341.7L747.1 348.7L744.8 355.2ZM746.9 341L749.3 334.6L748.7 341.7L746.4 348.2ZM543 340.7L545 347.2L546.4 354.2L544.5 347.7ZM542.6 333.6L544.6 340L545 347.2L543 340.7Z"/>
<path fill="#ff4d00" stroke="#ff4d00" stroke-width=".5" d="M545.3 332.8L550.1 339L549.4 346.4L544.7 340.1ZM550.1 339L557.5 344.9L556.8 352.4L549.4 346.4ZM557.5 344.9L567.4 350.2L566.9 357.9L556.8 352.4ZM567.4 350.2L579.7 354.9L579.2 362.7L566.9 357.9ZM579.7 354.9L594.1 358.8L593.6 366.6L579.2 362.7ZM594.1 358.8L610 361.6L609.7 369.6L593.6 366.6ZM610 361.6L627.1 363.5L626.9 371.4L609.7 369.6ZM627.1 363.5L644.7 364.1L644.7 372.1L626.9 371.4ZM644.7 364.1L662.5 363.6L662.5 371.6L644.7 372.1ZM662.5 363.6L679.7 362L679.8 369.9L662.5 371.6ZM679.7 362L695.8 359.2L696.1 367.1L679.8 369.9ZM695.8 359.2L710.4 355.5L710.8 363.3L696.1 367.1ZM710.4 355.5L723.1 350.9L723.5 358.6L710.8 363.3ZM723.1 350.9L733.4 345.6L733.9 353.2L723.5 358.6ZM733.4 345.6L741.2 339.8L741.7 347.3L733.9 353.2ZM741.2 339.8L746.3 333.6L746.9 341L741.7 347.3ZM746.3 333.6L748.7 327.3L749.3 334.6L746.9 341ZM748.7 327.3L748.4 321L748.9 328.1L749.3 334.6ZM543.3 326.4L545.3 332.7L544.6 340L542.6 333.6Z"/>
<path fill="#ff4300" stroke="#ff4300" stroke-width=".5" d="M547.1 325.4L551.8 331.4L550.1 339L545.3 332.8ZM551.8 331.4L559.1 337.1L557.5 344.9L550.1 339ZM559.1 337.1L568.9 342.3L567.4 350.2L557.5 344.9ZM568.9 342.3L581 346.8L579.7 354.9L567.4 350.2ZM581 346.8L595.1 350.6L594.1 358.8L579.7 354.9ZM595.1 350.6L610.7 353.4L610 361.6L594.1 358.8ZM610.7 353.4L627.5 355.1L627.1 363.5L610 361.6ZM627.5 355.1L644.8 355.8L644.7 364.1L627.1 363.5ZM644.8 355.8L662.2 355.3L662.5 363.6L644.7 364.1ZM662.2 355.3L679.1 353.7L679.7 362L662.5 363.6ZM679.1 353.7L695 351L695.8 359.2L679.7 362ZM695 351L709.3 347.4L710.4 355.5L695.8 359.2ZM709.3 347.4L721.7 342.9L723.1 350.9L710.4 355.5ZM721.7 342.9L731.9 337.8L733.4 345.6L723.1 350.9ZM731.9 337.8L739.6 332.2L741.2 339.8L733.4 345.6ZM739.6 332.2L744.6 326.2L746.3 333.6L741.2 339.8ZM744.6 326.2L747 320.1L748.7 327.3L746.3 333.6ZM747 320.1L746.7 314L748.4 321L748.7 327.3ZM545.9 313.1L545.1 319.2L543.3 326.4L544.1 320.1ZM545.1 319.2L547.1 325.3L545.3 332.7L543.3 326.4Z"/>
<path fill="#ff3900" stroke="#ff3900" stroke-width=".5" d="M550 318.1L554.6 323.8L551.8 331.4L547.1 325.4ZM554.6 323.8L561.7 329.3L559.1 337.1L551.8 331.4ZM561.7 329.3L571.2 334.2L568.9 342.3L559.1 337.1ZM571.2 334.2L583 338.6L581 346.8L568.9 342.3ZM583 338.6L596.6 342.1L595.1 350.6L581 346.8ZM596.6 342.1L611.8 344.8L610.7 353.4L595.1 350.6ZM611.8 344.8L628.1 346.5L627.5 355.1L610.7 353.4ZM628.1 346.5L644.9 347.1L644.8 355.8L627.5 355.1ZM644.9 347.1L661.8 346.6L662.2 355.3L644.8 355.8ZM661.8 346.6L678.2 345.1L679.1 353.7L662.2 355.3ZM678.2 345.1L693.6 342.5L695 351L679.1 353.7ZM693.6 342.5L707.5 339.1L709.3 347.4L695 351ZM707.5 339.1L719.6 334.8L721.7 342.9L709.3 347.4ZM719.6 334.8L729.5 329.9L731.9 337.8L721.7 342.9ZM729.5 329.9L737 324.5L739.6 332.2L731.9 337.8ZM737 324.5L741.9 318.8L744.6 326.2L739.6 332.2ZM741.9 318.8L744.2 312.9L747 320.1L744.6 326.2ZM744.2 312.9L743.9 307.1L746.7 314L747 320.1ZM548.7 306.3L548 312.1L545.1 319.2L545.9 313.1ZM548 312.1L549.9 318L547.1 325.3L545.1 319.2Z"/>
<path fill="#ff2e00" stroke="#ff2e00" stroke-width=".5" d="M554 310.8L558.4 316.3L554.6 323.8L550 318.1ZM558.9 303.8L563.1 308.8L558.4 316.3L554 310.8ZM558.4 316.3L565.2 321.4L561.7 329.3L554.6 323.8ZM563.1 308.8L569.7 313.6L565.2 321.4L558.4 316.3ZM565.2 321.4L574.4 326.1L571.2 334.2L561.7 329.3ZM569.7 313.6L578.4 318L574.4 326.1L565.2 321.4ZM574.4 326.1L585.7 330.2L583 338.6L571.2 334.2ZM578.4 318L589.1 321.8L585.7 330.2L574.4 326.1ZM585.7 330.2L598.8 333.5L596.6 342.1L583 338.6ZM589.1 321.8L601.5 324.9L598.8 333.5L585.7 330.2ZM598.8 333.5L613.3 336.1L611.8 344.8L596.6 342.1ZM601.5 324.9L615.2 327.3L613.3 336.1L598.8 333.5ZM613.3 336.1L628.9 337.6L628.1 346.5L611.8 344.8ZM615.2 327.3L629.9 328.7L628.9 337.6L613.3 336.1ZM628.9 337.6L645 338.2L644.9 347.1L628.1 346.5ZM629.9 328.7L645.1 329.3L645 338.2L628.9 337.6ZM645 338.2L661.2 337.8L661.8 346.6L644.9 347.1ZM645.1 329.3L660.4 328.8L661.2 337.8L645 338.2ZM661.2 337.8L676.9 336.3L678.2 345.1L661.8 346.6ZM660.4 328.8L675.2 327.5L676.9 336.3L661.2 337.8ZM676.9 336.3L691.6 333.9L693.6 342.5L678.2 345.1ZM675.2 327.5L689.2 325.3L691.6 333.9L676.9 336.3ZM691.6 333.9L705 330.7L707.5 339.1L693.6 342.5ZM689.2 325.3L701.8 322.2L705 330.7L691.6 333.9ZM705 330.7L716.6 326.6L719.6 334.8L707.5 339.1ZM701.8 322.2L712.8 318.5L716.6 326.6L705 330.7ZM716.6 326.6L726.1 322L729.5 329.9L719.6 334.8ZM712.8 318.5L721.8 314.2L726.1 322L716.6 326.6ZM726.1 322L733.3 316.9L737 324.5L729.5 329.9ZM721.8 314.2L728.6 309.4L733.3 316.9L726.1 322ZM733.3 316.9L738.1 311.5L741.9 318.8L737 324.5ZM728.6 309.4L733.2 304.4L738.1 311.5L733.3 316.9ZM738.1 311.5L740.3 305.9L744.2 312.9L741.9 318.8ZM733.2 304.4L735.4 299.2L740.3 305.9L738.1 311.5ZM740.3 305.9L740.1 300.4L743.9 307.1L744.2 312.9ZM735.4 299.2L735.2 294L740.1 300.4L740.3 305.9ZM740.1 300.4L737.5 295L741.2 301.3L743.9 307.1ZM735.2 294L732.8 288.9L737.5 295L740.1 300.4ZM555.6 294.2L552.6 299.6L548.7 306.3L551.8 300.6ZM560.3 288.3L557.6 293.3L552.6 299.6L555.6 294.2ZM552.6 299.6L552 305.2L548 312.1L548.7 306.3ZM557.6 293.3L557 298.5L552 305.2L552.6 299.6ZM552 305.2L553.9 310.7L549.9 318L548 312.1ZM557 298.5L558.9 303.7L553.9 310.7L552 305.2Z"/>
<path fill="#ff2400" stroke="#ff2400" stroke-width=".5" d="M564.9 297L568.9 301.7L563.1 308.8L558.9 303.8ZM568.9 301.7L575 306L569.7 313.6L563.1 308.8ZM575 306L583.1 310.1L578.4 318L569.7 313.6ZM583.1 310.1L593.1 313.5L589.1 321.8L578.4 318ZM593.1 313.5L604.7 316.4L601.5 324.9L589.1 321.8ZM604.7 316.4L617.5 318.5L615.2 327.3L601.5 324.9ZM617.5 318.5L631.1 319.9L629.9 328.7L615.2 327.3ZM631.1 319.9L645.3 320.4L645.1 329.3L629.9 328.7ZM645.3 320.4L659.5 320L660.4 328.8L645.1 329.3ZM659.5 320L673.2 318.8L675.2 327.5L660.4 328.8ZM673.2 318.8L686.2 316.7L689.2 325.3L675.2 327.5ZM686.2 316.7L698 313.9L701.8 322.2L689.2 325.3ZM698 313.9L708.2 310.5L712.8 318.5L701.8 322.2ZM708.2 310.5L716.6 306.6L721.8 314.2L712.8 318.5ZM716.6 306.6L723 302.2L728.6 309.4L721.8 314.2ZM723 302.2L727.3 297.5L733.2 304.4L728.6 309.4ZM727.3 297.5L729.4 292.8L735.4 299.2L733.2 304.4ZM729.4 292.8L729.4 288L735.2 294L735.4 299.2ZM729.4 288L727.1 283.3L732.8 288.9L735.2 294ZM727.1 283.3L722.9 278.8L728.2 284.1L732.8 288.9ZM565.2 283.5L560.3 288.3L566 282.7L570.5 278.3ZM566 282.7L563.5 287.3L557.6 293.3L560.3 288.3ZM563.5 287.3L563.1 292.1L557 298.5L557.6 293.3ZM563.1 292.1L564.8 296.9L558.9 303.7L557 298.5Z"/>
<path fill="#ff1a00" stroke="#ff1a00" stroke-width=".5" d="M571.7 290.6L575.5 294.8L568.9 301.7L564.9 297ZM579.5 284.6L582.8 288.3L575.5 294.8L571.7 290.6ZM575.5 294.8L581.1 298.8L575 306L568.9 301.7ZM582.8 288.3L588 291.8L581.1 298.8L575.5 294.8ZM581.1 298.8L588.6 302.4L583.1 310.1L575 306ZM588 291.8L594.7 295L588.6 302.4L581.1 298.8ZM588.6 302.4L597.7 305.5L593.1 313.5L583.1 310.1ZM594.7 295L602.9 297.8L597.7 305.5L588.6 302.4ZM597.7 305.5L608.3 308.1L604.7 316.4L593.1 313.5ZM602.9 297.8L612.4 300.1L608.3 308.1L597.7 305.5ZM608.3 308.1L620 310L617.5 318.5L604.7 316.4ZM612.4 300.1L622.9 301.7L620 310L608.3 308.1ZM620 310L632.5 311.2L631.1 319.9L617.5 318.5ZM622.9 301.7L634 302.8L632.5 311.2L620 310ZM632.5 311.2L645.4 311.6L645.3 320.4L631.1 319.9ZM634 302.8L645.6 303.2L645.4 311.6L632.5 311.2ZM645.4 311.6L658.4 311.3L659.5 320L645.3 320.4ZM645.6 303.2L657.1 302.9L658.4 311.3L645.4 311.6ZM658.4 311.3L670.9 310.2L673.2 318.8L659.5 320ZM657.1 302.9L668.3 301.9L670.9 310.2L658.4 311.3ZM670.9 310.2L682.8 308.3L686.2 316.7L673.2 318.8ZM668.3 301.9L678.9 300.3L682.8 308.3L670.9 310.2ZM682.8 308.3L693.5 305.8L698 313.9L686.2 316.7ZM678.9 300.3L688.6 298.1L693.5 305.8L682.8 308.3ZM693.5 305.8L702.9 302.8L708.2 310.5L698 313.9ZM688.6 298.1L697 295.4L702.9 302.8L693.5 305.8ZM702.9 302.8L710.7 299.2L716.6 306.6L708.2 310.5ZM697 295.4L704 292.2L710.7 299.2L702.9 302.8ZM710.7 299.2L716.6 295.3L723 302.2L716.6 306.6ZM704 292.2L709.3 288.7L716.6 295.3L710.7 299.2ZM716.6 295.3L720.6 291.1L727.3 297.5L723 302.2ZM709.3 288.7L713 285L720.6 291.1L716.6 295.3ZM720.6 291.1L722.6 286.7L729.4 292.8L727.3 297.5ZM713 285L714.8 281.2L722.6 286.7L720.6 291.1ZM722.6 286.7L722.5 282.4L729.4 288L729.4 292.8ZM714.8 281.2L714.8 277.3L722.5 282.4L722.6 286.7ZM722.5 282.4L720.6 278.1L727.1 283.3L729.4 288ZM714.8 277.3L713.1 273.5L720.6 278.1L722.5 282.4ZM720.6 278.1L716.7 274.1L722.9 278.8L727.1 283.3ZM713.1 273.5L709.7 269.9L716.7 274.1L720.6 278.1ZM709.7 269.9L704.8 266.6L711.2 270.3L716.7 274.1ZM588.9 266.2L583.7 269.5L576.7 273.6L582.5 269.9ZM576.7 273.6L572.6 277.6L566 282.7L570.5 278.3ZM583.7 269.5L580.1 273.1L572.6 277.6L576.7 273.6ZM572.6 277.6L570.4 281.8L563.5 287.3L566 282.7ZM580.1 273.1L578.1 276.8L570.4 281.8L572.6 277.6ZM570.4 281.8L570 286.2L563.1 292.1L563.5 287.3ZM578.1 276.8L577.9 280.7L570 286.2L570.4 281.8ZM570 286.2L571.7 290.5L564.8 296.9L563.1 292.1ZM577.9 280.7L579.4 284.5L571.7 290.5L570 286.2Z"/>
<path fill="#ff0f00" stroke="#ff0f00" stroke-width=".5" d="M587.9 279.1L590.9 282.4L582.8 288.3L579.5 284.6ZM597 274.3L599.6 276.9L590.9 282.4L587.9 279.1ZM590.9 282.4L595.4 285.4L588 291.8L582.8 288.3ZM599.6 276.9L603.5 279.5L595.4 285.4L590.9 282.4ZM595.4 285.4L601.4 288.1L594.7 295L588 291.8ZM603.5 279.5L608.5 281.7L601.4 288.1L595.4 285.4ZM601.4 288.1L608.6 290.5L602.9 297.8L594.7 295ZM608.5 281.7L614.6 283.7L608.6 290.5L601.4 288.1ZM608.6 290.5L616.8 292.4L612.4 300.1L602.9 297.8ZM614.6 283.7L621.6 285.3L616.8 292.4L608.6 290.5ZM616.8 292.4L625.9 293.9L622.9 301.7L612.4 300.1ZM621.6 285.3L629.2 286.5L625.9 293.9L616.8 292.4ZM625.9 293.9L635.7 294.8L634 302.8L622.9 301.7ZM629.2 286.5L637.4 287.3L635.7 294.8L625.9 293.9ZM635.7 294.8L645.7 295.1L645.6 303.2L634 302.8ZM637.4 287.3L645.8 287.5L645.7 295.1L635.7 294.8ZM645.7 295.1L655.7 294.9L657.1 302.9L645.6 303.2ZM645.8 287.5L654.3 287.3L655.7 294.9L645.7 295.1ZM655.7 294.9L665.5 294L668.3 301.9L657.1 302.9ZM654.3 287.3L662.5 286.6L665.5 294L655.7 294.9ZM665.5 294L674.8 292.6L678.9 300.3L668.3 301.9ZM662.5 286.6L670.3 285.5L674.8 292.6L665.5 294ZM674.8 292.6L683.2 290.7L688.6 298.1L678.9 300.3ZM670.3 285.5L677.4 283.9L683.2 290.7L674.8 292.6ZM683.2 290.7L690.5 288.4L697 295.4L688.6 298.1ZM677.4 283.9L683.6 282L690.5 288.4L683.2 290.7ZM690.5 288.4L696.6 285.7L704 292.2L697 295.4ZM683.6 282L688.8 279.7L696.6 285.7L690.5 288.4ZM696.6 285.7L701.4 282.7L709.3 288.7L704 292.2ZM688.8 279.7L692.8 277.2L701.4 282.7L696.6 285.7ZM701.4 282.7L704.6 279.5L713 285L709.3 288.7ZM692.8 277.2L695.5 274.5L704.6 279.5L701.4 282.7ZM704.6 279.5L706.2 276.2L714.8 281.2L713 285ZM695.5 274.5L697 271.8L706.2 276.2L704.6 279.5ZM706.2 276.2L706.3 272.8L714.8 277.3L714.8 281.2ZM697 271.8L697.1 269L706.3 272.8L706.2 276.2ZM706.3 272.8L704.9 269.5L713.1 273.5L714.8 277.3ZM697.1 269L696 266.2L704.9 269.5L706.3 272.8ZM704.9 269.5L702 266.4L709.7 269.9L713.1 273.5ZM696 266.2L693.5 263.5L702 266.4L704.9 269.5ZM702 266.4L697.7 263.5L704.8 266.6L709.7 269.9ZM693.5 263.5L689.9 261.1L697.7 263.5L702 266.4ZM697.7 263.5L692.1 260.8L698.4 263.5L704.8 266.6ZM689.9 261.1L685.3 258.9L692.1 260.8L697.7 263.5ZM685.3 258.9L679.7 256.9L685.5 258.5L692.1 260.8ZM614.1 256.7L608.4 258.6L601.6 260.5L608.4 258.3ZM601.6 260.5L595.9 263.1L588.9 266.2L595.4 263.2ZM608.4 258.6L603.6 260.8L595.9 263.1L601.6 260.5ZM595.9 263.1L591.4 266L583.7 269.5L588.9 266.2ZM603.6 260.8L599.8 263.2L591.4 266L595.9 263.1ZM591.4 266L588.3 269.1L580.1 273.1L583.7 269.5ZM599.8 263.2L597.2 265.9L588.3 269.1L591.4 266ZM588.3 269.1L586.6 272.4L578.1 276.8L580.1 273.1ZM597.2 265.9L595.8 268.6L586.6 272.4L588.3 269.1ZM586.6 272.4L586.5 275.7L577.9 280.7L578.1 276.8ZM595.8 268.6L595.8 271.4L586.5 275.7L586.6 272.4ZM586.5 275.7L587.9 279.1L579.4 284.5L577.9 280.7ZM595.8 271.4L597 274.2L587.9 279.1L586.5 275.7Z"/>
<path fill="#ff0500" stroke="#ff0500" stroke-width=".5" d="M606.7 270L608.8 272.2L599.6 276.9L597 274.3ZM616.8 266.5L618.4 268L608.8 272.2L606.7 270ZM627.2 263.6L628.3 264.7L618.4 268L616.8 266.5ZM637.8 261.6L638.3 262.1L628.3 264.7L627.2 263.6ZM648.4 260.3L648.3 260.2L638.3 262.1L637.8 261.6ZM648.4 260.3L648.3 260.2L658.3 259.2L659 259.9ZM659 259.9L658.3 259.2L668 259L669.4 260.2ZM669.4 260.2L668 259L677.4 259.6L679.4 261.4ZM679.4 261.4L677.4 259.6L686.4 261L689.1 263.2ZM608.8 272.2L612 274.2L603.5 279.5L599.6 276.9ZM618.4 268L620.8 269.5L612 274.2L608.8 272.2ZM628.3 264.7L629.8 265.6L620.8 269.5L618.4 268ZM638.3 262.1L639 262.5L629.8 265.6L628.3 264.7ZM648.3 260.2L648.2 260.1L639 262.5L638.3 262.1ZM648.3 260.2L648.2 260.1L657.2 258.6L658.3 259.2ZM658.3 259.2L657.2 258.6L666.1 257.9L668 259ZM668 259L666.1 257.9L674.6 258L677.4 259.6ZM677.4 259.6L674.6 258L682.8 258.9L686.4 261ZM612 274.2L616 276L608.5 281.7L603.5 279.5ZM620.8 269.5L623.8 270.9L616 276L612 274.2ZM629.8 265.6L631.8 266.5L623.8 270.9L620.8 269.5ZM639 262.5L639.9 262.9L631.8 266.5L629.8 265.6ZM648.2 260.1L648 260.1L639.9 262.9L639 262.5ZM648.2 260.1L648 260.1L655.9 258.1L657.2 258.6ZM657.2 258.6L655.9 258.1L663.7 256.9L666.1 257.9ZM666.1 257.9L663.7 256.9L671.1 256.6L674.6 258ZM674.6 258L671.1 256.6L678.3 257.1L682.8 258.9ZM616 276L620.9 277.5L614.6 283.7L608.5 281.7ZM623.8 270.9L627.5 272L620.9 277.5L616 276ZM631.8 266.5L634.2 267.2L627.5 272L623.8 270.9ZM639.9 262.9L641 263.2L634.2 267.2L631.8 266.5ZM648 260.1L647.7 260L641 263.2L639.9 262.9ZM648 260.1L647.7 260L654.4 257.6L655.9 258.1ZM655.9 258.1L654.4 257.6L660.8 256.1L663.7 256.9ZM663.7 256.9L660.8 256.1L667 255.4L671.1 256.6ZM671.1 256.6L667 255.4L673 255.5L678.3 257.1ZM620.9 277.5L626.5 278.8L621.6 285.3L614.6 283.7ZM627.5 272L631.7 273L626.5 278.8L620.9 277.5ZM634.2 267.2L636.9 267.8L631.7 273L627.5 272ZM641 263.2L642.2 263.5L636.9 267.8L634.2 267.2ZM647.7 260L647.4 259.9L642.2 263.5L641 263.2ZM647.7 260L647.4 259.9L652.6 257.2L654.4 257.6ZM654.4 257.6L652.6 257.2L657.6 255.4L660.8 256.1ZM660.8 256.1L657.6 255.4L662.4 254.4L667 255.4ZM667 255.4L662.4 254.4L667 254.3L673 255.5ZM626.5 278.8L632.7 279.8L629.2 286.5L621.6 285.3ZM631.7 273L636.2 273.6L632.7 279.8L626.5 278.8ZM636.9 267.8L639.9 268.3L636.2 273.6L631.7 273ZM642.2 263.5L643.5 263.7L639.9 268.3L636.9 267.8ZM647.4 259.9L647.1 259.9L643.5 263.7L642.2 263.5ZM647.4 259.9L647.1 259.9L650.7 257L652.6 257.2ZM652.6 257.2L650.7 257L654.1 254.9L657.6 255.4ZM657.6 255.4L654.1 254.9L657.5 253.7L662.4 254.4ZM662.4 254.4L657.5 253.7L660.6 253.4L667 254.3ZM632.7 279.8L639.2 280.3L637.4 287.3L629.2 286.5ZM636.2 273.6L641.1 274.1L639.2 280.3L632.7 279.8ZM639.9 268.3L643 268.5L641.1 274.1L636.2 273.6ZM643.5 263.7L644.9 263.8L643 268.5L639.9 268.3ZM647.1 259.9L646.8 259.9L644.9 263.8L643.5 263.7ZM647.1 259.9L646.8 259.9L648.7 256.8L650.7 257ZM650.7 257L648.7 256.8L650.5 254.6L654.1 254.9ZM654.1 254.9L650.5 254.6L652.2 253.2L657.5 253.7ZM657.5 253.7L652.2 253.2L653.8 252.8L660.6 253.4ZM639.2 280.3L646 280.6L645.8 287.5L637.4 287.3ZM641.1 274.1L646.1 274.2L646 280.6L639.2 280.3ZM643 268.5L646.3 268.6L646.1 274.2L641.1 274.1ZM644.9 263.8L646.4 263.8L646.3 268.6L643 268.5ZM646.8 259.9L646.5 259.8L646.4 263.8L644.9 263.8ZM646.8 259.9L646.5 259.8L646.6 256.7L648.7 256.8ZM648.7 256.8L646.6 256.7L646.7 254.5L650.5 254.6ZM650.5 254.6L646.7 254.5L646.8 253.1L652.2 253.2ZM652.2 253.2L646.8 253.1L646.9 252.6L653.8 252.8ZM646 280.6L652.7 280.4L654.3 287.3L645.8 287.5ZM646.1 274.2L651.1 274.1L652.7 280.4L646 280.6ZM646.3 268.6L649.5 268.6L651.1 274.1L646.1 274.2ZM646.4 263.8L647.8 263.8L649.5 268.6L646.3 268.6ZM646.5 259.8L646.2 259.9L647.8 263.8L646.4 263.8ZM646.5 259.8L646.2 259.9L644.5 256.8L646.6 256.7ZM646.6 256.7L644.5 256.8L642.9 254.6L646.7 254.5ZM646.7 254.5L642.9 254.6L641.4 253.2L646.8 253.1ZM646.8 253.1L641.4 253.2L639.9 252.7L646.9 252.6ZM652.7 280.4L659.3 279.8L662.5 286.6L654.3 287.3ZM651.1 274.1L656 273.7L659.3 279.8L652.7 280.4ZM649.5 268.6L652.7 268.3L656 273.7L651.1 274.1ZM647.8 263.8L649.2 263.7L652.7 268.3L649.5 268.6ZM646.2 259.9L645.9 259.9L649.2 263.7L647.8 263.8ZM646.2 259.9L645.9 259.9L642.5 256.9L644.5 256.8ZM644.5 256.8L642.5 256.9L639.3 254.8L642.9 254.6ZM642.9 254.6L639.3 254.8L636.1 253.6L641.4 253.2ZM641.4 253.2L636.1 253.6L633.1 253.3L639.9 252.7ZM659.3 279.8L665.6 278.9L670.3 285.5L662.5 286.6ZM656 273.7L660.7 273L665.6 278.9L659.3 279.8ZM652.7 268.3L655.6 267.9L660.7 273L656 273.7ZM649.2 263.7L650.6 263.5L655.6 267.9L652.7 268.3ZM645.9 259.9L645.6 259.9L650.6 263.5L649.2 263.7ZM645.9 259.9L645.6 259.9L640.6 257.2L642.5 256.9ZM642.5 256.9L640.6 257.2L635.7 255.3L639.3 254.8ZM639.3 254.8L635.7 255.3L631.1 254.3L636.1 253.6ZM636.1 253.6L631.1 254.3L626.7 254.2L633.1 253.3ZM665.6 278.9L671.2 277.7L677.4 283.9L670.3 285.5ZM660.7 273L664.9 272.1L671.2 277.7L665.6 278.9ZM655.6 267.9L658.4 267.3L664.9 272.1L660.7 273ZM650.6 263.5L651.8 263.2L658.4 267.3L655.6 267.9ZM645.6 259.9L645.3 260L651.8 263.2L650.6 263.5ZM645.6 259.9L645.3 260L638.8 257.6L640.6 257.2ZM640.6 257.2L638.8 257.6L632.5 256L635.7 255.3ZM635.7 255.3L632.5 256L626.4 255.3L631.1 254.3ZM631.1 254.3L626.4 255.3L620.7 255.4L626.7 254.2ZM671.2 277.7L676.2 276.1L683.6 282L677.4 283.9ZM664.9 272.1L668.6 271L676.2 276.1L671.2 277.7ZM658.4 267.3L660.8 266.6L668.6 271L664.9 272.1ZM651.8 263.2L652.9 262.9L660.8 266.6L658.4 267.3ZM645.3 260L645 260.1L652.9 262.9L651.8 263.2ZM645.3 260L645 260.1L637.2 258L638.8 257.6ZM638.8 257.6L637.2 258L629.6 256.8L632.5 256ZM632.5 256L629.6 256.8L622.3 256.5L626.4 255.3ZM626.4 255.3L622.3 256.5L615.3 256.9L620.7 255.4ZM676.2 276.1L680.4 274.4L688.8 279.7L683.6 282ZM668.6 271L671.8 269.7L680.4 274.4L676.2 276.1ZM660.8 266.6L662.9 265.7L671.8 269.7L668.6 271ZM652.9 262.9L653.8 262.5L662.9 265.7L660.8 266.6ZM645 260.1L644.8 260.1L653.8 262.5L652.9 262.9ZM645 260.1L644.8 260.1L635.9 258.6L637.2 258ZM637.2 258L635.9 258.6L627.1 257.8L629.6 256.8ZM629.6 256.8L627.1 257.8L618.7 257.9L622.3 256.5ZM622.3 256.5L618.7 257.9L610.6 258.7L615.3 256.9ZM680.4 274.4L683.7 272.4L692.8 277.2L688.8 279.7ZM671.8 269.7L674.2 268.2L683.7 272.4L680.4 274.4ZM662.9 265.7L664.5 264.8L674.2 268.2L671.8 269.7ZM653.8 262.5L654.6 262.1L664.5 264.8L662.9 265.7ZM644.8 260.1L644.6 260.2L654.6 262.1L653.8 262.5ZM644.8 260.1L644.6 260.2L634.8 259.2L635.9 258.6ZM635.9 258.6L634.8 259.2L625.1 258.9L627.1 257.8ZM627.1 257.8L625.1 258.9L615.8 259.5L618.7 257.9ZM618.7 257.9L615.8 259.5L606.9 260.8L610.6 258.7ZM683.7 272.4L686 270.2L695.5 274.5L692.8 277.2ZM674.2 268.2L675.9 266.6L686 270.2L683.7 272.4ZM664.5 264.8L665.6 263.8L675.9 266.6L674.2 268.2ZM654.6 262.1L655.1 261.6L665.6 263.8L664.5 264.8ZM644.6 260.2L644.5 260.3L655.1 261.6L654.6 262.1ZM644.6 260.2L644.5 260.3L634 259.8L634.8 259.2ZM634.8 259.2L634 259.8L623.7 260.1L625.1 258.9ZM625.1 258.9L623.7 260.1L613.7 261.2L615.8 259.5ZM615.8 259.5L613.7 261.2L604.1 263L606.9 260.8ZM686 270.2L687.2 268L697 271.8L695.5 274.5ZM675.9 266.6L676.9 265L687.2 268L686 270.2ZM665.6 263.8L666.3 262.7L676.9 265L675.9 266.6ZM655.1 261.6L655.4 261.2L666.3 262.7L665.6 263.8ZM644.5 260.3L644.5 260.4L655.4 261.2L655.1 261.6ZM644.5 260.3L644.5 260.4L633.6 260.5L634 259.8ZM634 259.8L633.6 260.5L622.8 261.4L623.7 260.1ZM623.7 260.1L622.8 261.4L612.4 263L613.7 261.2ZM613.7 261.2L612.4 263L602.4 265.4L604.1 263ZM687.2 268L687.3 265.8L697.1 269L697 271.8ZM676.9 265L677 263.3L687.3 265.8L687.2 268ZM666.3 262.7L666.4 261.6L677 263.3L676.9 265ZM655.4 261.2L655.5 260.7L666.4 261.6L666.3 262.7ZM644.5 260.4L644.4 260.6L655.5 260.7L655.4 261.2ZM644.5 260.4L644.4 260.6L633.4 261.2L633.6 260.5ZM633.6 260.5L633.4 261.2L622.6 262.7L622.8 261.4ZM622.8 261.4L622.6 262.7L612 264.9L612.4 263ZM612.4 263L612 264.9L601.8 267.8L602.4 265.4ZM687.3 265.8L686.4 263.6L696 266.2L697.1 269ZM677 263.3L676.4 261.7L686.4 263.6L687.3 265.8ZM666.4 261.6L666 260.5L676.4 261.7L677 263.3ZM655.5 260.7L655.3 260.2L666 260.5L666.4 261.6ZM644.4 260.6L644.5 260.7L655.3 260.2L655.5 260.7ZM644.4 260.6L644.5 260.7L633.6 261.9L633.4 261.2ZM633.4 261.2L633.6 261.9L622.9 264L622.6 262.7ZM622.6 262.7L622.9 264L612.4 266.7L612 264.9ZM612 264.9L612.4 266.7L602.3 270.3L601.8 267.8ZM686.4 263.6L684.5 261.4L693.5 263.5L696 266.2ZM676.4 261.7L675 260.1L684.5 261.4L686.4 263.6ZM666 260.5L665.1 259.5L675 260.1L676.4 261.7ZM655.3 260.2L654.9 259.7L665.1 259.5L666 260.5ZM644.5 260.7L644.6 260.8L654.9 259.7L655.3 260.2ZM644.5 260.7L644.6 260.8L634.2 262.6L633.6 261.9ZM633.6 261.9L634.2 262.6L623.9 265.2L622.9 264ZM622.9 264L623.9 265.2L613.8 268.6L612.4 266.7ZM612.4 266.7L613.8 268.6L604.1 272.7L602.3 270.3ZM684.5 261.4L681.6 259.4L689.9 261.1L693.5 263.5ZM675 260.1L672.9 258.6L681.6 259.4L684.5 261.4ZM665.1 259.5L663.7 258.5L672.9 258.6L675 260.1ZM654.9 259.7L654.3 259.3L663.7 258.5L665.1 259.5ZM644.6 260.8L644.7 260.9L654.3 259.3L654.9 259.7ZM644.6 260.8L644.7 260.9L635 263.2L634.2 262.6ZM634.2 262.6L635 263.2L625.5 266.4L623.9 265.2ZM623.9 265.2L625.5 266.4L616 270.3L613.8 268.6ZM613.8 268.6L616 270.3L606.9 274.9L604.1 272.7ZM681.6 259.4L677.9 257.6L685.3 258.9L689.9 261.1ZM672.9 258.6L670.1 257.2L677.9 257.6L681.6 259.4ZM663.7 258.5L661.9 257.7L670.1 257.2L672.9 258.6ZM654.3 259.3L653.5 258.9L661.9 257.7L663.7 258.5ZM644.7 260.9L644.9 261L653.5 258.9L654.3 259.3ZM644.7 260.9L644.9 261L636.2 263.8L635 263.2ZM635 263.2L636.2 263.8L627.6 267.5L625.5 266.4ZM625.5 266.4L627.6 267.5L619.1 271.9L616 270.3ZM616 270.3L619.1 271.9L610.8 277L606.9 274.9ZM677.9 257.6L673.4 256.1L679.7 256.9L685.3 258.9ZM670.1 257.2L666.7 256.1L673.4 256.1L677.9 257.6ZM661.9 257.7L659.7 256.9L666.7 256.1L670.1 257.2ZM653.5 258.9L652.5 258.5L659.7 256.9L661.9 257.7ZM644.9 261L645.1 261L652.5 258.5L653.5 258.9ZM644.9 261L645.1 261L637.6 264.4L636.2 263.8ZM636.2 263.8L637.6 264.4L630.2 268.5L627.6 267.5ZM627.6 267.5L630.2 268.5L622.9 273.3L619.1 271.9ZM619.1 271.9L622.9 273.3L615.7 278.9L610.8 277ZM673.4 256.1L668.2 254.8L673.3 255.3L679.7 256.9ZM666.7 256.1L662.8 255.1L668.2 254.8L673.4 256.1ZM659.7 256.9L657.2 256.2L662.8 255.1L666.7 256.1ZM652.5 258.5L651.3 258.3L657.2 256.2L659.7 256.9ZM645.1 261L645.4 261.1L651.3 258.3L652.5 258.5ZM645.1 261L645.4 261.1L639.3 264.8L637.6 264.4ZM637.6 264.4L639.3 264.8L633.3 269.3L630.2 268.5ZM630.2 268.5L633.3 269.3L627.3 274.5L622.9 273.3ZM622.9 273.3L627.3 274.5L621.5 280.5L615.7 278.9ZM668.2 254.8L662.5 253.8L666.2 254.1L673.3 255.3ZM662.8 255.1L658.6 254.3L662.5 253.8L668.2 254.8ZM657.2 256.2L654.4 255.7L658.6 254.3L662.8 255.1ZM651.3 258.3L650.1 258L654.4 255.7L657.2 256.2ZM645.4 261.1L645.7 261.2L650.1 258L651.3 258.3ZM645.4 261.1L645.7 261.2L641.2 265.1L639.3 264.8ZM639.3 264.8L641.2 265.1L636.7 269.9L633.3 269.3ZM633.3 269.3L636.7 269.9L632.2 275.5L627.3 274.5ZM627.3 274.5L632.2 275.5L627.9 281.7L621.5 280.5ZM662.5 253.8L656.4 253.1L658.7 253.2L666.2 254.1ZM658.6 254.3L654 253.8L656.4 253.1L662.5 253.8ZM654.4 255.7L651.4 255.4L654 253.8L658.6 254.3ZM650.1 258L648.7 257.9L651.4 255.4L654.4 255.7ZM645.7 261.2L646 261.2L648.7 257.9L650.1 258ZM645.7 261.2L646 261.2L643.2 265.4L641.2 265.1ZM641.2 265.1L643.2 265.4L640.4 270.4L636.7 269.9ZM636.7 269.9L640.4 270.4L637.6 276.1L632.2 275.5ZM632.2 275.5L637.6 276.1L634.9 282.6L627.9 281.7ZM656.4 253.1L650.1 252.7L650.9 252.8L658.7 253.2ZM654 253.8L649.2 253.5L650.1 252.7L656.4 253.1ZM651.4 255.4L648.3 255.2L649.2 253.5L654 253.8ZM648.7 257.9L647.3 257.8L648.3 255.2L651.4 255.4ZM646 261.2L646.3 261.2L647.3 257.8L648.7 257.9ZM646 261.2L646.3 261.2L645.3 265.5L643.2 265.4ZM643.2 265.4L645.3 265.5L644.2 270.6L640.4 270.4ZM640.4 270.4L644.2 270.6L643.2 276.4L637.6 276.1ZM637.6 276.1L643.2 276.4L642.1 283L634.9 282.6ZM649.2 253.5L644.4 253.5L643.7 252.7L650.1 252.7ZM648.3 255.2L645.1 255.2L644.4 253.5L649.2 253.5ZM647.3 257.8L645.9 257.8L645.1 255.2L648.3 255.2ZM646.3 261.2L646.6 261.2L645.9 257.8L647.3 257.8ZM646.3 261.2L646.6 261.2L647.4 265.5L645.3 265.5ZM645.3 265.5L647.4 265.5L648.1 270.6L644.2 270.6ZM644.2 270.6L648.1 270.6L648.9 276.5L643.2 276.4ZM643.2 276.4L648.9 276.5L649.6 283L642.1 283ZM643.1 252.7L635.3 253.1L637.4 253L643.7 252.7ZM644.4 253.5L639.6 253.8L637.4 253L643.7 252.7ZM645.1 255.2L642 255.4L639.6 253.8L644.4 253.5ZM645.9 257.8L644.4 257.9L642 255.4L645.1 255.2ZM646.6 261.2L646.9 261.2L644.4 257.9L645.9 257.8ZM646.6 261.2L646.9 261.2L649.5 265.4L647.4 265.5ZM647.4 265.5L649.5 265.4L652 270.4L648.1 270.6ZM648.1 270.6L652 270.4L654.5 276.2L648.9 276.5ZM648.9 276.5L654.5 276.2L656.9 282.6L649.6 283ZM637.4 253L631.3 253.7L627.7 253.9L635.3 253.1ZM639.6 253.8L635 254.3L631.3 253.7L637.4 253ZM642 255.4L639 255.7L635 254.3L639.6 253.8ZM644.4 257.9L643.1 258L639 255.7L642 255.4ZM646.9 261.2L647.3 261.2L643.1 258L644.4 257.9ZM646.9 261.2L647.3 261.2L651.5 265.2L649.5 265.4ZM649.5 265.4L651.5 265.2L655.7 270L652 270.4ZM652 270.4L655.7 270L659.9 275.6L654.5 276.2ZM654.5 276.2L659.9 275.6L663.9 281.8L656.9 282.6ZM631.3 253.7L625.5 254.6L620.6 255.1L627.7 253.9ZM635 254.3L630.7 255L625.5 254.6L631.3 253.7ZM639 255.7L636.2 256.2L630.7 255L635 254.3ZM643.1 258L641.8 258.2L636.2 256.2L639 255.7ZM647.3 261.2L647.5 261.1L641.8 258.2L643.1 258ZM647.3 261.2L647.5 261.1L653.4 264.8L651.5 265.2ZM651.5 265.2L653.4 264.8L659.2 269.4L655.7 270ZM655.7 270L659.2 269.4L664.9 274.7L659.9 275.6ZM659.9 275.6L664.9 274.7L670.4 280.7L663.9 281.8ZM625.5 254.6L620.3 255.9L614.1 256.7L620.6 255.1ZM630.7 255L626.8 255.9L620.3 255.9L625.5 254.6ZM636.2 256.2L633.6 256.8L626.8 255.9L630.7 255ZM641.8 258.2L640.6 258.5L633.6 256.8L636.2 256.2ZM647.5 261.1L647.8 261L640.6 258.5L641.8 258.2ZM647.5 261.1L647.8 261L655.1 264.4L653.4 264.8ZM653.4 264.8L655.1 264.4L662.3 268.6L659.2 269.4ZM659.2 269.4L662.3 268.6L669.4 273.5L664.9 274.7ZM664.9 274.7L669.4 273.5L676.3 279.1L670.4 280.7ZM620.3 255.9L615.6 257.5L608.4 258.6L614.1 256.7ZM626.8 255.9L623.3 257.1L615.6 257.5L620.3 255.9ZM633.6 256.8L631.3 257.6L623.3 257.1L626.8 255.9ZM640.6 258.5L639.6 258.9L631.3 257.6L633.6 256.8ZM647.8 261L648 261L639.6 258.9L640.6 258.5ZM647.8 261L648 261L656.5 263.9L655.1 264.4ZM655.1 264.4L656.5 263.9L665 267.6L662.3 268.6ZM662.3 268.6L665 267.6L673.3 272.1L669.4 273.5ZM669.4 273.5L673.3 272.1L681.4 277.3L676.3 279.1ZM615.6 257.5L611.8 259.2L603.6 260.8L608.4 258.6ZM623.3 257.1L620.4 258.4L611.8 259.2L615.6 257.5ZM631.3 257.6L629.5 258.4L620.4 258.4L623.3 257.1ZM639.6 258.9L638.8 259.2L629.5 258.4L631.3 257.6ZM648 261L648.2 260.9L638.8 259.2L639.6 258.9ZM648 261L648.2 260.9L657.7 263.3L656.5 263.9ZM656.5 263.9L657.7 263.3L667.2 266.5L665 267.6ZM665 267.6L667.2 266.5L676.5 270.5L673.3 272.1ZM673.3 272.1L676.5 270.5L685.4 275.2L681.4 277.3ZM611.8 259.2L608.8 261.2L599.8 263.2L603.6 260.8ZM620.4 258.4L618.2 259.9L608.8 261.2L611.8 259.2ZM629.5 258.4L628 259.4L618.2 259.9L620.4 258.4ZM638.8 259.2L638.1 259.7L628 259.4L629.5 258.4ZM648.2 260.9L648.4 260.8L638.1 259.7L638.8 259.2ZM648.2 260.9L648.4 260.8L658.7 262.7L657.7 263.3ZM657.7 263.3L658.7 262.7L668.8 265.4L667.2 266.5ZM667.2 266.5L668.8 265.4L678.8 268.8L676.5 270.5ZM676.5 270.5L678.8 268.8L688.5 273L685.4 275.2ZM608.8 261.2L606.7 263.3L597.2 265.9L599.8 263.2ZM618.2 259.9L616.7 261.5L606.7 263.3L608.8 261.2ZM628 259.4L627.1 260.4L616.7 261.5L618.2 259.9ZM638.1 259.7L637.7 260.1L627.1 260.4L628 259.4ZM648.4 260.8L648.5 260.7L637.7 260.1L638.1 259.7ZM648.4 260.8L648.5 260.7L659.3 262L658.7 262.7ZM658.7 262.7L659.3 262L669.9 264.1L668.8 265.4ZM668.8 265.4L669.9 264.1L680.3 267L678.8 268.8ZM678.8 268.8L680.3 267L690.3 270.6L688.5 273ZM606.7 263.3L605.6 265.5L595.8 268.6L597.2 265.9ZM616.7 261.5L615.9 263.1L605.6 265.5L606.7 263.3ZM627.1 260.4L626.6 261.5L615.9 263.1L616.7 261.5ZM637.7 260.1L637.5 260.6L626.6 261.5L627.1 260.4ZM648.5 260.7L648.5 260.6L637.5 260.6L637.7 260.1ZM648.5 260.7L648.5 260.6L659.5 261.3L659.3 262ZM659.3 262L659.5 261.3L670.4 262.8L669.9 264.1ZM669.9 264.1L670.4 262.8L680.9 265.1L680.3 267ZM680.3 267L680.9 265.1L691.1 268.1L690.3 270.6ZM605.6 265.5L605.6 267.7L595.8 271.4L595.8 268.6ZM615.9 263.1L616 264.8L605.6 267.7L605.6 265.5ZM626.6 261.5L626.6 262.6L616 264.8L615.9 263.1ZM637.5 260.6L637.5 261.1L626.6 262.6L626.6 261.5ZM648.5 260.6L648.5 260.5L637.5 261.1L637.5 260.6ZM648.5 260.6L648.5 260.5L659.4 260.6L659.5 261.3ZM659.5 261.3L659.4 260.6L670.2 261.5L670.4 262.8ZM670.4 262.8L670.2 261.5L680.6 263.2L680.9 265.1ZM680.9 265.1L680.6 263.2L690.7 265.7L691.1 268.1ZM605.6 267.7L606.7 270L597 274.2L595.8 271.4ZM616 264.8L616.8 266.4L606.7 270L605.6 267.7ZM626.6 262.6L627.2 263.6L616.8 266.4L616 264.8ZM637.5 261.1L637.8 261.6L627.2 263.6L626.6 262.6ZM648.5 260.5L648.4 260.3L637.8 261.6L637.5 261.1ZM648.5 260.5L648.4 260.3L659 259.9L659.4 260.6ZM659.4 260.6L659 259.9L669.4 260.2L670.2 261.5ZM670.2 261.5L669.4 260.2L679.5 261.4L680.6 263.2ZM680.6 263.2L679.5 261.4L689.1 263.3L690.7 265.7Z"/></g>
   <path d="M632.5 410.9L631.2 408.8M546.5 354.3L551.2 360.6M563.5 287.3L563.1 292.1M675.2 327.5L689.2 325.3M662.5 371.6L679.8 369.9M661.2 337.8L660.4 328.8M741.9 318.8L744.2 312.9M694.9 381.4L695.8 374.5M729.4 379.8L734 374M716.6 306.6L723 302.2M702.9 302.8L710.7 299.2M626.9 378.8L626.9 371.4M679.7 407.8L689.8 405M583 338.6L596.6 342.1M544.1 320.1L545.9 313.1M597.7 305.5L602.9 297.8M732 367.4L739.7 361.5M660.9 397.5L676.7 395.9M645.1 329.3L645.3 320.4M570 286.2L577.9 280.7M627.7 253.9L620.6 255.1M644.5 392.5L644.6 386.4M701.4 282.7L704.6 279.5M595.9 263.1L591.4 266M686.5 402.1L689.3 398M733.4 345.6L731.9 337.8M571.7 290.6L579.5 284.6M698 313.9L693.5 305.8M710.8 363.3L710.4 355.5M716.6 295.3L709.3 288.7M656.7 411L658 408.9M620.8 409.6L618.3 407.3M543 340.7L542.6 333.6M694.4 402.3L698.5 398.8M693.5 263.5L684.5 261.4M679.7 362L679.1 353.7M579.4 284.5L587.9 279.1M635.7 294.8L637.4 287.3M549 360.9L546.5 354.3M595.4 263.2L601.6 260.5M587.5 394L584.5 388.9M689.3 398L702.1 394.6M608.5 281.7L614.6 283.7M563.1 292.1L564.8 296.9M620.6 255.1L625.5 254.6M598.8 333.5L601.5 324.9M563.1 308.8L569.7 313.6M713 285L704.6 279.5M734 374L738.6 368.1M658.4 311.3L670.9 310.2M628.1 346.5L644.9 347.1M570.5 278.3L576.7 273.6M704 292.2L709.3 288.7M603.6 260.8L611.8 259.2M604.7 316.4L617.5 318.5M729.5 329.9L726.1 322M554 310.8L558.4 316.3M721.7 342.9L719.6 334.8M594.6 380.9L610.3 383.8M552.5 367.3L556.9 373.3M614.6 283.7L621.6 285.3M740.1 300.4L737.5 295M743.9 307.1L741.2 301.3M544.5 347.7L543 340.7M583.1 310.1L588.6 302.4M729.4 288L722.5 282.4M620 310L622.9 301.7M585.8 397.9L580.9 394.1M645 338.2L645.1 329.3M571.7 290.5L579.4 284.5M697.1 269L696 266.2M586.5 275.7L587.9 279.1M567.2 365.2L579.5 370M739.7 361.5L741.2 354.5M744.8 355.2L746.4 348.2M676.9 336.3L691.6 333.9M543.3 326.4L545.3 332.7M550.1 339L551.8 331.4M564.9 297L571.7 290.6M588.6 302.4L594.7 295M566.3 384.1L572.6 389.3M580.1 273.1L588.3 269.1M571.7 290.6L575.5 294.8M712.1 394.2L717.6 390.1M733.2 304.4L727.3 297.5M582.8 288.3L590.9 282.4M581 346.8L583 338.6M551.8 331.4L554.6 323.8M594.1 358.8L610 361.6M643.1 252.7L643.7 252.7M732.8 288.9L728.2 284.1M733.9 353.2L733.4 345.6M710.8 363.3L723.5 358.6M694.4 402.3L704.1 398.5M644.7 372.1L662.5 371.6M608.6 290.5L616.8 292.4M748.4 321L746.7 314M722.6 286.7L714.8 281.2M579.7 354.9L594.1 358.8M693.5 305.8L702.9 302.8M614.1 400.3L629 402M644.9 347.1L645 338.2M601.4 288.1L608.6 290.5M644.7 412.9L644.7 412.6M723.1 350.9L721.7 342.9M644.5 398L660.9 397.5M557 298.5L558.9 303.7M598.8 333.5L613.3 336.1M591.2 401L585.8 397.9M741.2 339.8L746.3 333.6M610.3 383.8L609.8 377M602.9 297.8L612.4 300.1M558.4 316.3L565.2 321.4M623.5 411L633.9 412.2M654.3 287.3L652.7 280.4M577.9 280.7L579.4 284.5M578.4 318L589.1 321.8M662.4 379L662.5 371.6M738.1 311.5L733.2 304.4M696 266.2L686.4 263.6M626.9 378.8L644.6 379.5M738.6 368.1L742.2 361.8M630 405.8L629 402M716.6 326.6L712.8 318.5M747 320.1L744.2 312.9M604.8 406.5L613.7 409M644.6 379.5L662.4 379M682.8 308.3L678.9 300.3M735.2 294L729.4 288M737.2 368.1L739.7 361.5M645.4 311.6L645.6 303.2M644.7 412.6L655.4 412.3M645.3 320.4L659.5 320M695.8 359.2L710.4 355.5M595.4 263.2L588.9 266.2M733.2 304.4L735.4 299.2M610 361.6L627.1 363.5M709.3 288.7L713 285M635.7 294.8L645.7 295.1M620.6 255.1L614.1 256.7M683.2 405.4L694.4 402.3M733.9 353.2L741.7 347.3M627.1 363.5L644.7 364.1M655.7 294.9L654.3 287.3M663.1 411.7L665.9 411.2M697 271.8L697.1 269M608.4 258.6L615.6 257.5M724.2 384.9L729.4 379.8M713 285L714.8 281.2M662.5 363.6L662.2 355.3M660 402.1L660.9 397.5M709.3 347.4L707.5 339.1M570.5 278.3L566 282.7M723.1 365.9L723.5 358.6M704.1 398.5L709 394.8M597.7 392.7L612.5 395.5M628.9 337.6L629.9 328.7M597 274.3L599.6 276.9M662.5 286.6L659.3 279.8M729.5 329.9L737 324.5M628.2 397.3L627.6 391.9M635.3 253.1L627.7 253.9M678.2 345.1L693.6 342.5M588.9 266.2L595.9 263.1M593.8 374L593.6 366.6M644.8 355.8L644.9 347.1M581.1 298.8L588 291.8M614.1 256.7L608.4 258.6M657.1 302.9L668.3 301.9M716.6 306.6L710.7 299.2M613.7 409L609.8 407.4M679.7 407.8L683.2 405.4M666.2 254.1L658.7 253.2M565.2 283.5L560.3 288.3M732 367.4L733.4 360.5M712.8 318.5L721.8 314.2M611.2 390L610.3 383.8M733.3 316.9L728.6 309.4M748.7 327.3L747 320.1M686.2 316.7L682.8 308.3M733.7 374.2L737.2 368.1M709 394.8L717.6 390.1M609.7 369.6L626.9 371.4M552 305.2L553.9 310.7M655.4 412.3L665.9 411.2M673.2 318.8L686.2 316.7M548 312.1L549.9 318M587.9 279.1L597 274.3M643.1 252.7L635.3 253.1M682.8 308.3L693.5 305.8M697 295.4L704 292.2M695.8 374.5L710.4 370.7M660.4 328.8L675.2 327.5M560.7 373.1L570.3 378.5M559.1 337.1L561.7 329.3M595.8 271.4L597 274.2M545.3 332.8L550.1 339M599.8 263.2L608.8 261.2M741.7 347.3L746.9 341M595.9 263.1L603.6 260.8M558.5 366.6L557.2 359.7M735.4 299.2L729.4 292.8M747.1 348.7L748.7 341.7M716.8 385.1L726.5 379.9M644.7 364.1L662.5 363.6M568.9 301.7L575.5 294.8M546.5 354.3L545 347.3M697.1 269L687.3 265.8M560.3 288.3L566 282.7M557.6 293.3L563.5 287.3M698.4 263.5L692.1 260.8M692.1 260.8L685.5 258.5M575.5 294.8L582.8 288.3M744.6 326.2L741.9 318.8M738.1 311.5L740.3 305.9M696 266.2L693.5 263.5M581.1 298.8L588.6 302.4M675.8 409.4L679.7 407.8M557.2 359.7L567.2 365.2M692.8 277.2L695.5 274.5M558.9 303.8L563.1 308.8M729.7 373.9L732 367.4M654.1 412.7L663.1 411.7M594.1 358.8L595.1 350.6M595.4 285.4L603.5 279.5M698.7 401.6L704.1 398.5M695.5 274.5L697 271.8M576.7 273.6L583.7 269.5M583.7 269.5L580.1 273.1M593.1 313.5L604.7 316.4M644.7 412.9L654.1 412.7M595.2 401.8L606.1 404.9M557.5 344.9L559.1 337.1M722.5 282.4L714.8 277.3M645 338.2L661.2 337.8M611.8 344.8L613.3 336.1M631.2 408.8L644.6 409.3M704 292.2L696.6 285.7M590.9 282.4L595.4 285.4M747 320.1L746.7 314M635.3 253.1L637.4 253M588.3 269.1L597.2 265.9M609.8 377L626.9 378.8M580.1 273.1L578.1 276.8M711.2 270.3L704.8 266.6M571.2 334.2L574.4 326.1M629.2 286.5L632.7 279.8M573.1 384.3L570.3 378.5M544.7 340.1L549.4 346.4M675.1 400.6L689.3 398M627.5 355.1L628.1 346.5M628.9 337.6L645 338.2M746.3 333.6L744.6 326.2M551.2 360.6L549.8 353.7M628.2 397.3L644.5 398M595.9 387.1L594.6 380.9M593.8 374L609.8 377M614.6 283.7L620.9 277.5M726.5 379.9L729.7 373.9M645.4 311.6L658.4 311.3M595.8 268.6L605.6 265.5M599.8 404.5L595.2 401.8M613.7 409L623.5 411M548.7 306.3L552.6 299.6M569.7 313.6L575 306M586.5 275.7L595.8 271.4M697 295.4L690.5 288.4M704.1 398.5L712.1 394.2M550 318.1L554.6 323.8M617.5 318.5L631.1 319.9M591.2 401L599.8 404.5M740.3 305.9L735.4 299.2M697 271.8L687.2 268M723.5 358.6L733.9 353.2M545 347.3L544.7 340.1M566.9 357.9L567.4 350.2M741.2 354.5L741.7 347.3M659.5 320L658.4 311.3M693.5 305.8L688.6 298.1M728.6 309.4L733.2 304.4M658 408.9L659.1 406M689.2 325.3L701.8 322.2M627.1 363.5L627.5 355.1M679.1 353.7L678.2 345.1M668.3 301.9L678.9 300.3M658.4 311.3L657.1 302.9M712.8 318.5L708.2 310.5M597.7 392.7L595.9 387.1M599.8 263.2L597.2 265.9M722.5 282.4L720.6 278.1M719.7 379.3L721.8 372.9M634 302.8L635.7 294.8M644.6 409.3L658 408.9M558.5 366.6L568.3 372.1M591.1 398.2L602.9 401.7M621.6 285.3L626.5 278.8M596.6 342.1L598.8 333.5M565.2 283.5L570.5 278.3M709 394.8L713.3 390.3M714.8 277.3L706.3 272.8M549.9 318L553.9 310.7M625.9 293.9L629.2 286.5M723.1 365.9L733.4 360.5M601.6 260.5L595.9 263.1M645.8 287.5L646 280.6M739.6 332.2L744.6 326.2M588.9 266.2L583.7 269.5M635.4 412.6L633.9 412.2M735.4 299.2L735.2 294M678 390.4L679 384.2M557.6 293.3L557 298.5M615.2 327.3L617.5 318.5M691.6 333.9L705 330.7M675.8 409.4L684.9 406.9M744.6 326.2L747 320.1M677.4 283.9L683.6 282M713.1 273.5L709.7 269.9M545.1 319.2L547.1 325.3M662.5 286.6L670.3 285.5M685.3 258.9L679.7 256.9M748.7 327.3L748.4 321M729.7 373.9L737.2 368.1M671 407.6L673.2 404.5M683.2 405.4L686.5 402.1M742.2 361.8L744.8 355.2M595.4 285.4L601.4 288.1M704.8 266.6L698.4 263.5M557.5 344.9L567.4 350.2M702 266.4L693.5 263.5M608.4 258.3L614.1 256.7M572.6 277.6L570.4 281.8M733.3 316.9L738.1 311.5M748.7 341.7L749.3 334.6M568.9 342.3L571.2 334.2M746.7 314L743.9 307.1M720.6 291.1L713 285M553.6 367.2L551.2 360.6M746.3 333.6L748.7 327.3M597 274.3L606.7 270M597.2 265.9L595.8 268.6M731.9 337.8L729.5 329.9M627.5 355.1L644.8 355.8M568.3 372.1L567.2 365.2M726.5 379.9L733.7 374.2M595.8 268.6L595.8 271.4M744.2 312.9L743.9 307.1M548.7 306.3L548 312.1M657.1 302.9L655.7 294.9M676.7 395.9L691.6 393.2M595.9 387.1L611.2 390M694.9 381.4L709.3 377.6M644.5 402.6L660 402.1M708.2 310.5L702.9 302.8M549.4 346.4L556.8 352.4M569.7 313.6L578.4 318M662.2 355.3L679.1 353.7M688.8 279.7L692.8 277.2M691.6 393.2L705.1 389.6M659.1 406L673.2 404.5M626.4 411.5L635.4 412.6M695.5 274.5L686 270.2M645.7 295.1L645.8 287.5M709.7 269.9L702 266.4M583.7 269.5L591.4 266M606.1 404.9L618.3 407.3M695.8 374.5L696.1 367.1M589.1 321.8L601.5 324.9M706.3 272.8L704.9 269.5M721.8 314.2L716.6 306.6M613.3 336.1L628.9 337.6M701.8 322.2L698 313.9M552 305.2L557 298.5M655.4 412.3L656.7 411M548 312.1L552 305.2M650.9 252.8L650.1 252.7M629.9 328.7L645.1 329.3M610.7 353.4L611.8 344.8M644.6 386.4L662 385.9M679.8 369.9L679.7 362M558.9 303.7L564.8 296.9M668.6 409.8L671 407.6M618.3 407.3L631.2 408.8M673.3 255.3L668.2 254.8M710.4 370.7L723.1 365.9M567.4 350.2L579.7 354.9M578.1 276.8L586.6 272.4M545.9 313.1L548.7 306.3M634 302.8L645.6 303.2M556.9 373.3L563.8 379.1M565.2 321.4L574.4 326.1M547.1 325.4L551.8 331.4M621.6 285.3L629.2 286.5M723.5 358.6L723.1 350.9M579.2 362.7L593.6 366.6M563.8 379.1L573.1 384.3M585.7 330.2L589.1 321.8M596.6 342.1L611.8 344.8M579.5 284.6L582.8 288.3M714.8 277.3L713.1 273.5M644.5 406.4L644.5 402.6M611.8 344.8L628.1 346.5M557.2 359.7L556.8 352.4M689.9 261.1L685.3 258.9M597.7 305.5L608.3 308.1M584.5 388.9L597.7 392.7M719.7 379.3L729.7 373.9M570.3 378.5L568.3 372.1M645.6 303.2L645.7 295.1M662 385.9L662.4 379M679.1 353.7L695 351M698.5 398.8L709 394.8M629.2 286.5L637.4 287.3M568.9 301.7L575 306M670.9 310.2L668.3 301.9M566 282.7L572.6 277.6M549.8 353.7L557.2 359.7M631.2 408.8L630 405.8M705 330.7L701.8 322.2M654.1 412.7L655.4 412.3M551.2 360.6L558.5 366.6M574.4 326.1L578.4 318M704.6 279.5L695.5 274.5M593.6 366.6L609.7 369.6M679.6 377.3L679.8 369.9M593.1 313.5L597.7 305.5M632.5 311.2L634 302.8M579.5 370L579.2 362.7M595.2 401.8L591.1 398.2M665.9 411.2L668.6 409.8M726.1 322L721.8 314.2M661.5 392L678 390.4M701.8 322.2L712.8 318.5M612.4 300.1L616.8 292.4M595.1 350.6L596.6 342.1M572.6 389.3L567.8 384.5M600.1 397.6L597.7 392.7M645.1 329.3L660.4 328.8M748.9 328.1L748.4 321M644.5 392.5L661.5 392M661.2 337.8L676.9 336.3M716.6 295.3L720.6 291.1M620.8 409.6L632.5 410.9M709.3 377.6L721.8 372.9M741.2 354.5L746.4 348.2M545.9 313.1L545.1 319.2M719.6 334.8L729.5 329.9M720.6 291.1L722.6 286.7M612.5 395.5L628.2 397.3M746.4 348.2L748.7 341.7M570 286.2L571.7 290.5M731.9 337.8L739.6 332.2M679 384.2L679.6 377.3M706.2 276.2L706.3 272.8M546.4 354.2L545 347.2M583 338.6L585.7 330.2M586.6 272.4L586.5 275.7M717.6 390.1L724.2 384.9M677.4 283.9L671.2 277.7M656.7 411L668.6 409.8M660.9 397.5L661.5 392M704.9 269.5L696 266.2M608.4 258.3L601.6 260.5M675.2 327.5L673.2 318.8M633.9 412.2L632.5 410.9M689.2 325.3L686.2 316.7M549 360.9L553.6 367.2M679.7 256.9L673.4 256.1M721.8 314.2L728.6 309.4M620 310L632.5 311.2M585.8 397.9L595.2 401.8M563.1 292.1L570 286.2M739.7 361.5L744.8 355.2M544.6 340L545.3 332.7M632.5 311.2L645.4 311.6M744.2 312.9L740.3 305.9M693.5 263.5L689.9 261.1M588.6 302.4L597.7 305.5M723 302.2L716.6 295.3M601.6 260.5L608.4 258.6M578.1 276.8L577.9 280.7M689.8 405L694.4 402.3M679.7 362L695.8 359.2M662.5 371.6L662.5 363.6M544.5 347.7L546.4 354.2M595.1 350.6L610.7 353.4M600.1 397.6L614.1 400.3M554 310.8L558.9 303.8M602.9 401.7L616 404.2M551.8 331.4L559.1 337.1M608.5 281.7L616 276M552.5 367.3L549 360.9M665.5 294L662.5 286.6M591.1 398.2L587.5 394M629 402L628.2 397.3M662.4 379L679.6 377.3M616.8 292.4L625.9 293.9M563.1 308.8L568.9 301.7M567.8 384.5L576.7 389.5M691.6 333.9L689.2 325.3M688.8 279.7L680.4 274.4M691.6 393.2L693.5 387.6M713.1 273.5L704.9 269.5M610.7 353.4L627.5 355.1M606.1 404.9L602.9 401.7M729.4 292.8L722.6 286.7M644.9 347.1L661.8 346.6M693.6 342.5L691.6 333.9M597 274.2L606.7 270M644.5 398L644.5 392.5M553.9 310.7L558.9 303.7M708.2 310.5L716.6 306.6M741.2 339.8L739.6 332.2M610.3 383.8L627.1 385.7M705 330.7L716.6 326.6M683.2 290.7L677.4 283.9M721.8 372.9L732 367.4M583.1 310.1L593.1 313.5M704.9 269.5L702 266.4M623.5 411L620.8 409.6M676.9 336.3L675.2 327.5M550.1 339L557.5 344.9M568.3 372.1L580.5 376.9M710.4 370.7L710.8 363.3M552.6 299.6L552 305.2M661.8 346.6L678.2 345.1M559.1 337.1L568.9 342.3M608.6 290.5L614.6 283.7M612.4 300.1L622.9 301.7M572.6 389.3L580.9 394.1M673.2 404.5L675.1 400.6M714.8 281.2L714.8 277.3M579.7 354.9L581 346.8M582.8 288.3L588 291.8M644.6 379.5L644.7 372.1M654.3 287.3L662.5 286.6M565.2 321.4L569.7 313.6M563.8 379.1L560.7 373.1M557 298.5L563.1 292.1M588 291.8L594.7 295M737.2 368.1L742.2 361.8M602.9 297.8L608.6 290.5M645.3 320.4L645.4 311.6M644.7 372.1L644.7 364.1M603.5 279.5L612 274.2M561.7 329.3L565.2 321.4M690.5 288.4L696.6 285.7M610 361.6L610.7 353.4M614.1 400.3L612.5 395.5M601.4 288.1L608.5 281.7M706.3 272.8L697.1 269M555.6 294.2L560.3 288.3M709.3 288.7L701.4 282.7M698.5 398.8L702.1 394.6M727.1 283.3L720.6 278.1M629 402L644.5 402.6M558.4 316.3L563.1 308.8M629.9 328.7L631.1 319.9M604.8 406.5L599.8 404.5M688.6 298.1L683.2 290.7M578.4 318L583.1 310.1M633.9 412.2L644.7 412.6M578 393.5L572.6 389.3M593.6 366.6L594.1 358.8M679.7 256.9L673.3 255.3M609.8 407.4L606.1 404.9M678.2 345.1L676.9 336.3M716.8 385.1L719.7 379.3M576.7 273.6L572.6 277.6M644.8 355.8L662.2 355.3M693.5 387.6L707.6 383.9M580.5 376.9L594.6 380.9M655.7 294.9L665.5 294M662.5 363.6L679.7 362M733.4 360.5L733.9 353.2M611.2 390L627.6 391.9M719.6 334.8L716.6 326.6M644.6 411.4L644.6 409.3M644.7 412.6L644.6 411.4M709.3 377.6L710.4 370.7M566 282.7L563.5 287.3M689.8 405L698.7 401.6M594.7 295L601.4 288.1M673.2 318.8L670.9 310.2M576.7 389.5L573.1 384.3M670.9 310.2L682.8 308.3M577.9 280.7L586.5 275.7M579.2 362.7L579.7 354.9M679.6 377.3L695.8 374.5M746.9 341L746.3 333.6M554.6 323.8L558.4 316.3M591.4 266L588.3 269.1M666.2 254.1L662.5 253.8M551.8 300.6L555.6 294.2M717.6 390.1L722.4 385.3M587.9 279.1L590.9 282.4M722.4 385.3L726.5 379.9M674.8 292.6L670.3 285.5M685.5 258.5L679.7 256.9M670.3 285.5L677.4 283.9M693.6 342.5L707.5 339.1M644.7 364.1L644.8 355.8M582.5 269.9L576.7 273.6M714.8 281.2L706.2 276.2M582.1 383.2L595.9 387.1M716.6 326.6L726.1 322M707.6 383.9L709.3 377.6M560.3 288.3L557.6 293.3M720.6 278.1L716.7 274.1M660.4 328.8L659.5 320M737 324.5L733.3 316.9M578 393.5L585.8 397.9M665.5 294L674.8 292.6M595.8 271.4L605.6 267.7M575.5 294.8L581.1 298.8M616 404.2L614.1 400.3M706.2 276.2L697 271.8M733.7 374.2L738.6 368.1M749.3 334.6L748.9 328.1M545.3 332.8L547.1 325.4M713.3 390.3L716.8 385.1M609.7 369.6L610 361.6M626.9 371.4L627.1 363.5M692.8 277.2L683.7 272.4M599.6 276.9L608.8 272.2M556.8 352.4L566.9 357.9M705.1 389.6L707.6 383.9M622.9 301.7L625.9 293.9M580.9 394.1L576.7 389.5M547.1 325.4L550 318.1M746.4 348.2L746.9 341M586.6 272.4L595.8 268.6M658.7 253.2L656.4 253.1M678.9 300.3L674.8 292.6M695 351L693.6 342.5M696.6 285.7L688.8 279.7M603.5 279.5L608.5 281.7M721.8 372.9L723.1 365.9M561.7 329.3L571.2 334.2M741.7 347.3L741.2 339.8M746.9 341L749.3 334.6M588.3 269.1L586.6 272.4M727.1 283.3L722.9 278.8M542.6 333.6L544.6 340M635.4 412.6L644.7 412.9M723 302.2L727.3 297.5M558.9 303.8L564.9 297M571.2 334.2L583 338.6M683.6 282L688.8 279.7M688.6 298.1L697 295.4M727.3 297.5L729.4 292.8M627.6 391.9L644.5 392.5M692.1 260.8L685.3 258.9M729.4 292.8L729.4 288M722.4 385.3L729.4 379.8M552.6 299.6L557.6 293.3M609.8 407.4L620.8 409.6M733.4 360.5L741.2 354.5M602.9 401.7L600.1 397.6M588 291.8L595.4 285.4M555.6 294.2L552.6 299.6M616.8 292.4L621.6 285.3M567.8 384.5L563.8 379.1M617.5 318.5L620 310M544.7 340.1L545.3 332.8M599.8 404.5L609.8 407.4M626.9 371.4L644.7 372.1M566.9 357.9L579.2 362.7M590.9 282.4L599.6 276.9M697.7 263.5L689.9 261.1M609.8 377L609.7 369.6M631.1 319.9L645.3 320.4M737.5 295L732.8 288.9M543 340.7L545 347.2M573.1 384.3L584.5 388.9M668.3 301.9L665.5 294M673.2 404.5L686.5 402.1M675.1 400.6L676.7 395.9M695 351L709.3 347.4M696.6 285.7L701.4 282.7M637.4 287.3L645.8 287.5M545 347.3L549.8 353.7M550 318.1L554 310.8M686.5 402.1L698.5 398.8M659.5 320L673.2 318.8M658 408.9L671 407.6M560.7 373.1L558.5 366.6M601.5 324.9L615.2 327.3M587.5 394L600.1 397.6M716.7 274.1L709.7 269.9M693.5 387.6L694.9 381.4M674.8 292.6L683.2 290.7M625.9 293.9L635.7 294.8M576.7 389.5L587.5 394M690.5 288.4L683.6 282M707.6 383.9L719.7 379.3M645.8 287.5L654.3 287.3M698.7 401.6L706 397.6M661.8 346.6L661.2 337.8M678 390.4L693.5 387.6M615.2 327.3L629.9 328.7M561.2 379L556.9 373.3M707.5 339.1L719.6 334.8M705.1 389.6L716.8 385.1M627.1 385.7L626.9 378.8M728.6 309.4L723 302.2M570.4 281.8L578.1 276.8M684.9 406.9L689.8 405M632.5 410.9L644.6 411.4M685.3 258.9L677.9 257.6M671 407.6L683.2 405.4M697.7 263.5L692.1 260.8M582.5 269.9L588.9 266.2M658.7 253.2L650.9 252.8M564.9 297L568.9 301.7M713.3 390.3L722.4 385.3M678.9 300.3L688.6 298.1M702 266.4L697.7 263.5M544.1 320.1L543.3 326.4M644.6 409.3L644.5 406.4M581 346.8L595.1 350.6M710.7 299.2L704 292.2M749.3 334.6L748.7 327.3M644.6 411.4L656.7 411M670.3 285.5L665.6 278.9M733.4 345.6L741.2 339.8M721.7 342.9L731.9 337.8M744.8 355.2L747.1 348.7M568.9 342.3L581 346.8M698 313.9L708.2 310.5M729.4 379.8L733.7 374.2M722.9 278.8L716.7 274.1M594.7 295L602.9 297.8M545.1 319.2L548 312.1M553.6 367.2L560.7 373.1M597.2 265.9L606.7 263.3M554.6 323.8L561.7 329.3M701.4 282.7L692.8 277.2M710.4 355.5L709.3 347.4M702.1 394.6L705.1 389.6M739.6 332.2L737 324.5M551.8 300.6L548.7 306.3M567.2 365.2L566.9 357.9M704.8 266.6L697.7 263.5M704.6 279.5L706.2 276.2M702.9 302.8L697 295.4M740.3 305.9L740.1 300.4M580.5 376.9L579.5 370M676.7 395.9L678 390.4M566.3 384.1L561.2 379M741.2 301.3L737.5 295M726.1 322L733.3 316.9M660 402.1L675.1 400.6M575 306L581.1 298.8M608.3 308.1L612.4 300.1M591.4 266L599.8 263.2M706 397.6L712.1 394.2M563.5 287.3L570.4 281.8M696.1 367.1L695.8 359.2M645.7 295.1L655.7 294.9M741.9 318.8L738.1 311.5M545 347.2L544.6 340M728.2 284.1L722.9 278.8M683.6 282L676.2 276.1M572.6 277.6L580.1 273.1M603.6 260.8L599.8 263.2M729.4 288L727.1 283.3M722.6 286.7L722.5 282.4M737 324.5L741.9 318.8M564.8 296.9L571.7 290.5M570.4 281.8L570 286.2M627.7 253.9L631.3 253.7M679.8 369.9L696.1 367.1M543.3 326.4L545.1 319.2M616 404.2L630 405.8M668.6 409.8L679.7 407.8M673.3 255.3L666.2 254.1M567.4 350.2L568.9 342.3M630 405.8L644.5 406.4M662.2 355.3L661.8 346.6M599.6 276.9L603.5 279.5M547.1 325.3L549.9 318M622.9 301.7L634 302.8M659.1 406L660 402.1M580.9 394.1L591.1 398.2M727.3 297.5L720.6 291.1M720.6 278.1L713.1 273.5M556.9 373.3L553.6 367.2M627.6 391.9L627.1 385.7M710.7 299.2L716.6 295.3M589.1 321.8L593.1 313.5M644.5 402.6L644.5 398M549.4 346.4L550.1 339M556.8 352.4L557.5 344.9M582.1 383.2L580.5 376.9M628.1 346.5L628.9 337.6M626.4 411.5L623.5 411M604.7 316.4L608.3 308.1M709.7 269.9L704.8 266.6M702.1 394.6L713.3 390.3M594.6 380.9L593.8 374M570.3 378.5L582.1 383.2M740.1 300.4L735.2 294M743.9 307.1L740.1 300.4M613.3 336.1L615.2 327.3M585.7 330.2L598.8 333.5M627.1 385.7L644.6 386.4M709.3 347.4L721.7 342.9M644.6 386.4L644.6 379.5M574.4 326.1L585.7 330.2M608.3 308.1L620 310M579.5 284.6L587.9 279.1M696.1 367.1L710.8 363.3M723.1 350.9L733.4 345.6M631.1 319.9L632.5 311.2M618.3 407.3L616 404.2M716.7 274.1L711.2 270.3M665.9 411.2L675.8 409.4M662 385.9L679 384.2M689.9 261.1L681.6 259.4M637.4 287.3L639.2 280.3M584.5 388.9L582.1 383.2M686.2 316.7L698 313.9M689.3 398L691.6 393.2M735.2 294L732.8 288.9M732.8 288.9L727.1 283.3M601.5 324.9L604.7 316.4M542.6 333.6L543.3 326.4M579.5 370L593.8 374M561.2 379L567.8 384.5M614.1 256.7L620.3 255.9M695.8 359.2L695 351M644.5 406.4L659.1 406M587.9 279.1L597 274.2M545.3 332.7L547.1 325.3M683.2 290.7L690.5 288.4M710.4 355.5L723.1 350.9M612.5 395.5L611.2 390M645.6 303.2L657.1 302.9M679 384.2L694.9 381.4M661.5 392L662 385.9M608.4 258.6L603.6 260.8M707.5 339.1L705 330.7M549.8 353.7L549.4 346.4M575 306L583.1 310.1" stroke="#008000" stroke-width="0.9" fill="none"/><path d="M652.7 280.4L651.1 274.1M626.4 255.3L620.7 255.4M652.7 268.3L649.2 263.7M645.7 261.2L641.2 265.1M637.2 258L629.6 256.8M642 255.4L644.4 257.9M640.6 258.5L647.8 261M646.8 253.1L646.9 252.6M622.9 273.3L615.7 278.9M648.2 260.1L657.2 258.6M676.9 265L666.3 262.7M639.9 268.3L643.5 263.7M648.5 260.7L659.3 262M613.8 268.6L604.1 272.7M635 254.3L639 255.7M644.4 253.5L645.1 255.2M648 261L656.5 263.9M659.3 262L669.9 264.1M632.2 275.5L627.9 281.7M648.7 256.8L650.5 254.6M659.7 256.9L652.5 258.5M648.7 257.9L646 261.2M626.5 278.8L631.7 273M645 260.1L637.2 258M633.4 261.2L622.6 262.7M667.2 266.5L676.5 270.5M676.4 261.7L666 260.5M622.8 261.4L612.4 263M637.8 261.6L648.4 260.3M626.6 261.5L637.5 260.6M613.7 261.2L604.1 263M675.9 266.6L665.6 263.8M648.3 260.2L658.3 259.2M662.9 265.7L653.8 262.5M648.9 276.5L649.6 283M631.3 253.7L635 254.3M651.4 255.4L648.7 257.9M644.4 260.6L633.4 261.2M650.7 257L654.1 254.9M655.4 261.2L644.5 260.4M646.7 254.5L646.8 253.1M669.9 264.1L680.3 267M644.7 260.9L635 263.2M645.1 255.2L645.9 257.8M636.2 273.6L639.9 268.3M652.2 253.2L653.8 252.8M612.4 266.7L602.3 270.3M636.9 267.8L642.2 263.5M648.1 270.6L648.9 276.5M654 253.8L651.4 255.4M655.1 264.4L662.3 268.6M627.2 263.6L637.8 261.6M665.1 259.5L654.9 259.7M668.2 254.8L662.8 255.1M673.3 272.1L681.4 277.3M645.3 260L638.8 257.6M636.2 256.2L641.8 258.2M627.5 272L634.2 267.2M686 270.2L675.9 266.6M646.2 259.9L644.5 256.8M620.3 255.9L626.8 255.9M671.8 269.7L662.9 265.7M639.6 253.8L642 255.4M669.4 273.5L676.3 279.1M654.3 259.3L644.7 260.9M631.3 257.6L639.6 258.9M637.7 260.1L648.5 260.7M664.9 272.1L658.4 267.3M647.4 265.5L648.1 270.6M616.8 266.4L627.2 263.6M648.4 260.3L659 259.9M656.4 253.1L654 253.8M652.6 257.2L657.6 255.4M648.5 260.6L659.5 261.3M650.5 254.6L652.2 253.2M631.7 273L636.9 267.8M640.6 257.2L635.7 255.3M662.3 268.6L669.4 273.5M651.8 263.2L645.3 260M657.2 256.2L651.3 258.3M647.3 257.8L646.3 261.2M671.1 256.6L678.3 257.1M612 264.9L601.8 267.8M680.9 265.1L691.1 268.1M628.3 264.7L638.3 262.1M633.6 261.9L622.9 264M651.3 258.3L645.4 261.1M618.7 257.9L610.6 258.7M638.1 259.7L648.4 260.8M680.4 274.4L671.8 269.7M647.4 259.9L652.6 257.2M637.5 261.1L648.5 260.5M654.5 276.2L656.9 282.6M646.5 259.8L646.6 256.7M658.4 267.3L651.8 263.2M654.6 262.1L644.6 260.2M648.3 255.2L647.3 257.8M644.5 260.7L633.6 261.9M605.6 265.5L615.9 263.1M674.6 258L682.8 258.9M611.8 259.2L620.4 258.4M656 273.7L652.7 268.3M679.5 261.4L689.1 263.3M644.4 257.9L646.9 261.2M631.8 266.5L639.9 262.9M643.5 263.7L647.1 259.9M658.6 254.3L654.4 255.7M660.8 256.1L667 255.4M645.9 259.9L642.5 256.9M664.5 264.8L654.6 262.1M622.3 256.5L615.3 256.9M620.8 269.5L629.8 265.6M643.7 252.7L644.4 253.5M662.4 254.4L667 254.3M659.2 269.4L664.9 274.7M646.8 259.9L648.7 256.8M642.5 256.9L639.3 254.8M646.4 263.8L646.5 259.8M652.5 258.5L645.1 261M628 259.4L638.1 259.7M665.6 278.9L660.7 273M651.5 265.2L655.7 270M666.3 262.7L655.4 261.2M655.3 260.2L644.5 260.7M638.8 257.6L632.5 256M674.2 268.2L664.5 264.8M641.8 258.2L647.5 261.1M635 263.2L625.5 266.4M686.4 263.6L676.4 261.7M638.8 259.2L648.2 260.9M647.7 260L654.4 257.6M655.6 267.9L650.6 263.5M653.8 262.5L644.8 260.1M616 264.8L626.6 262.6M649.2 263.7L645.9 259.9M659.4 260.6L670.2 261.5M606.7 263.3L616.7 261.5M670.4 262.8L680.9 265.1M666 260.5L655.3 260.2M644.5 256.8L642.9 254.6M608.8 272.2L618.4 268M635.9 258.6L627.1 257.8M650.1 258L645.7 261.2M633.6 260.5L622.8 261.4M666.1 257.9L674.6 258M683.7 272.4L674.2 268.2M644.6 260.8L634.2 262.6M648.4 260.8L658.7 262.7M615.8 259.5L606.9 260.8M650.1 252.7L649.2 253.5M648 260.1L655.9 258.1M647.5 261.1L653.4 264.8M661.9 257.7L653.5 258.9M637.6 276.1L634.9 282.6M636.7 269.9L632.2 275.5M660.8 266.6L652.9 262.9M666.7 256.1L659.7 256.9M646.6 256.7L646.7 254.5M648.2 260.9L657.7 263.3M652.9 262.9L645 260.1M667 255.4L673 255.5M637.4 253L639.6 253.8M632.7 279.8L636.2 273.6M670.2 261.5L680.6 263.2M606.7 270L616.8 266.5M623.8 270.9L631.8 266.5M639.6 258.9L648 261M616.7 261.5L627.1 260.4M641.4 253.2L639.9 252.7M657.5 253.7L660.6 253.4M615.9 263.1L626.6 261.5M623.7 260.1L613.7 261.2M644.9 261L636.2 263.8M643 268.5L644.9 263.8M620.4 258.4L629.5 258.4M657.2 258.6L666.1 257.9M640.4 270.4L637.6 276.1M645.6 259.9L640.6 257.2M639 255.7L643.1 258M652 270.4L654.5 276.2M647.8 263.8L646.2 259.9M649.2 253.5L648.3 255.2M679.4 261.4L689.1 263.2M654.1 254.9L657.5 253.7M638.3 262.1L648.3 260.2M631.1 254.3L626.7 254.2M634 259.8L623.7 260.1M647.3 261.2L651.5 265.2M687.2 268L676.9 265M623.9 265.2L613.8 268.6M648.4 260.3L659 259.9M649.5 268.6L647.8 263.8M644.5 260.3L634 259.8M663.7 258.5L654.3 259.3M649.5 265.4L652 270.4M654.9 259.7L644.6 260.8M618.2 259.9L628 259.4M627.1 257.8L618.7 257.9M623.3 257.1L631.3 257.6M680.3 267L690.3 270.6M666.4 261.6L655.5 260.7M627.2 263.6L637.8 261.6M662.5 253.8L658.6 254.3M654.4 257.6L660.8 256.1M634.2 262.6L623.9 265.2M647.8 261L655.1 264.4M612 274.2L620.8 269.5M657.6 255.4L662.4 254.4M681.6 259.4L672.9 258.6M662.8 255.1L657.2 256.2M659 259.9L669.4 260.2M643.2 276.4L642.1 283M646.9 261.2L649.5 265.4M655.1 261.6L644.5 260.3M615.6 257.5L623.3 257.1M659.3 279.8L656 273.7M637.6 264.4L630.2 268.5M654.4 255.7L650.1 258M645.9 257.8L646.6 261.2M646 261.2L643.2 265.4M676.2 276.1L668.6 271M677 263.3L666.4 261.6M671.2 277.7L664.9 272.1M644.2 270.6L643.2 276.4M655.7 270L659.9 275.6M644.9 263.8L646.8 259.9M641 263.2L647.7 260M630.7 255L636.2 256.2M635.7 255.3L631.1 254.3M678.8 268.8L688.5 273M605.6 267.7L616 264.8M680.6 263.2L690.7 265.7M644.5 260.4L633.6 260.5M627.1 260.4L637.7 260.1M625.1 258.9L615.8 259.5M651.1 274.1L649.5 268.6M676.5 270.5L685.4 275.2M646.6 261.2L647.4 265.5M653.4 264.8L659.2 269.4M633.6 256.8L640.6 258.5M670.1 257.2L661.9 257.7M668.8 265.4L678.8 268.8M659 259.9L669.4 260.2M656.5 263.9L665 267.6M625.5 254.6L630.7 255M616 276L623.8 270.9M616.8 266.5L627.2 263.6M632.5 256L626.4 255.3M641.2 265.1L636.7 269.9M634.2 267.2L641 263.2M660.7 273L655.6 267.9M646 280.6L646.1 274.2M673.4 256.1L666.7 256.1M639.9 262.9L648 260.1M655.5 260.7L644.4 260.6M646.1 274.2L646.3 268.6M630.2 268.5L622.9 273.3M625.5 266.4L616 270.3M646.3 261.2L645.3 265.5M612.4 263L602.4 265.4M639.3 264.8L633.3 269.3M637.8 261.6L648.4 260.3M677.9 257.6L670.1 257.2M658.3 259.2L668 259M664.9 274.7L670.4 280.7M658.7 262.7L668.8 265.4M663.7 256.9L671.1 256.6M618.4 268L628.3 264.7M626.8 255.9L633.6 256.8M669.4 260.2L679.5 261.4M634.8 259.2L625.1 258.9M645.4 261.1L639.3 264.8M645.3 265.5L644.2 270.6M643.2 265.4L640.4 270.4M668.6 271L660.8 266.6M650.6 263.5L645.6 259.9M646.3 268.6L646.4 263.8M648.5 260.5L659.4 260.6M655.9 258.1L663.7 256.9M606.7 270L616.8 266.4M642.9 254.6L641.4 253.2M644.6 260.2L634.8 259.2M653.5 258.9L644.9 261M620.9 277.5L627.5 272M641.1 274.1L643 268.5M637.5 260.6L648.5 260.6M636.1 253.6L633.1 253.3M627.6 267.5L619.1 271.9M657.7 263.3L667.2 266.5M622.9 264L612.4 266.7M619.1 271.9L610.8 277M629.5 258.4L638.8 259.2M659.9 275.6L663.9 281.8M675 260.1L665.1 259.5M672.9 258.6L663.7 258.5M669.4 260.2L679.4 261.4M647.1 259.9L650.7 257M665 267.6L673.3 272.1M627.3 274.5L621.5 280.5M677.4 259.6L686.4 261M639.3 254.8L636.1 253.6M659.5 261.3L670.4 262.8M665.6 263.8L655.1 261.6M629.8 265.6L639 262.5M642.2 263.5L647.4 259.9M639.2 280.3L641.1 274.1M645.1 261L637.6 264.4M639 262.5L648.2 260.1M643.1 258L647.3 261.2M687.3 265.8L677 263.3M629.6 256.8L622.3 256.5M636.2 263.8L627.6 267.5M633.3 269.3L627.3 274.5M668 259L677.4 259.6M616 270.3L606.9 274.9M626.6 262.6L637.5 261.1M684.5 261.4L675 260.1M608.8 261.2L618.2 259.9M644.8 260.1L635.9 258.6M622.6 262.7L612 264.9" stroke="#008000" stroke-width="0.9" fill="none"/><path d="M616.8 266.5L618.4 268L608.8 272.2L606.7 270ZM627.2 263.6L628.3 264.7L618.4 268L616.8 266.5ZM637.8 261.6L638.3 262.1L628.3 264.7L627.2 263.6ZM648.4 260.3L648.3 260.2L638.3 262.1L637.8 261.6ZM648.4 260.3L648.3 260.2L658.3 259.2L659 259.9ZM659 259.9L658.3 259.2L668 259L669.4 260.2ZM618.4 268L620.8 269.5L612 274.2L608.8 272.2ZM628.3 264.7L629.8 265.6L620.8 269.5L618.4 268ZM638.3 262.1L639 262.5L629.8 265.6L628.3 264.7ZM648.2 260.1L648 260.1L639.9 262.9L639 262.5ZM648.2 260.1L648 260.1L655.9 258.1L657.2 258.6ZM666.1 257.9L663.7 256.9L671.1 256.6L674.6 258ZM648 260.1L647.7 260L641 263.2L639.9 262.9ZM663.7 256.9L660.8 256.1L667 255.4L671.1 256.6ZM671.1 256.6L667 255.4L673 255.5L678.3 257.1ZM634.2 267.2L636.9 267.8L631.7 273L627.5 272ZM647.7 260L647.4 259.9L642.2 263.5L641 263.2ZM654.4 257.6L652.6 257.2L657.6 255.4L660.8 256.1ZM660.8 256.1L657.6 255.4L662.4 254.4L667 255.4ZM667 255.4L662.4 254.4L667 254.3L673 255.5ZM631.7 273L636.2 273.6L632.7 279.8L626.5 278.8ZM639.9 268.3L643 268.5L641.1 274.1L636.2 273.6ZM647.1 259.9L646.8 259.9L648.7 256.8L650.7 257ZM641.1 274.1L646.1 274.2L646 280.6L639.2 280.3ZM644.9 263.8L646.4 263.8L646.3 268.6L643 268.5ZM646.8 259.9L646.5 259.8L646.6 256.7L648.7 256.8ZM648.7 256.8L646.6 256.7L646.7 254.5L650.5 254.6ZM652.2 253.2L646.8 253.1L646.9 252.6L653.8 252.8ZM646.6 256.7L644.5 256.8L642.9 254.6L646.7 254.5ZM646.8 253.1L641.4 253.2L639.9 252.7L646.9 252.6ZM651.1 274.1L656 273.7L659.3 279.8L652.7 280.4ZM649.5 268.6L652.7 268.3L656 273.7L651.1 274.1ZM644.5 256.8L642.5 256.9L639.3 254.8L642.9 254.6ZM641.4 253.2L636.1 253.6L633.1 253.3L639.9 252.7ZM656 273.7L660.7 273L665.6 278.9L659.3 279.8ZM652.7 268.3L655.6 267.9L660.7 273L656 273.7ZM645.9 259.9L645.6 259.9L650.6 263.5L649.2 263.7ZM636.1 253.6L631.1 254.3L626.7 254.2L633.1 253.3ZM655.6 267.9L658.4 267.3L664.9 272.1L660.7 273ZM664.9 272.1L668.6 271L676.2 276.1L671.2 277.7ZM658.4 267.3L660.8 266.6L668.6 271L664.9 272.1ZM645.3 260L645 260.1L637.2 258L638.8 257.6ZM660.8 266.6L662.9 265.7L671.8 269.7L668.6 271ZM637.2 258L635.9 258.6L627.1 257.8L629.6 256.8ZM671.8 269.7L674.2 268.2L683.7 272.4L680.4 274.4ZM653.8 262.5L654.6 262.1L664.5 264.8L662.9 265.7ZM644.8 260.1L644.6 260.2L654.6 262.1L653.8 262.5ZM644.8 260.1L644.6 260.2L634.8 259.2L635.9 258.6ZM635.9 258.6L634.8 259.2L625.1 258.9L627.1 257.8ZM664.5 264.8L665.6 263.8L675.9 266.6L674.2 268.2ZM644.6 260.2L644.5 260.3L634 259.8L634.8 259.2ZM634.8 259.2L634 259.8L623.7 260.1L625.1 258.9ZM625.1 258.9L623.7 260.1L613.7 261.2L615.8 259.5ZM665.6 263.8L666.3 262.7L676.9 265L675.9 266.6ZM613.7 261.2L612.4 263L602.4 265.4L604.1 263ZM676.9 265L677 263.3L687.3 265.8L687.2 268ZM666.3 262.7L666.4 261.6L677 263.3L676.9 265ZM622.8 261.4L622.6 262.7L612 264.9L612.4 263ZM612.4 263L612 264.9L601.8 267.8L602.4 265.4ZM666.4 261.6L666 260.5L676.4 261.7L677 263.3ZM655.5 260.7L655.3 260.2L666 260.5L666.4 261.6ZM644.4 260.6L644.5 260.7L655.3 260.2L655.5 260.7ZM644.4 260.6L644.5 260.7L633.6 261.9L633.4 261.2ZM633.4 261.2L633.6 261.9L622.9 264L622.6 262.7ZM612 264.9L612.4 266.7L602.3 270.3L601.8 267.8ZM655.3 260.2L654.9 259.7L665.1 259.5L666 260.5ZM644.5 260.7L644.6 260.8L654.9 259.7L655.3 260.2ZM633.6 261.9L634.2 262.6L623.9 265.2L622.9 264ZM622.9 264L623.9 265.2L613.8 268.6L612.4 266.7ZM644.6 260.8L644.7 260.9L654.3 259.3L654.9 259.7ZM634.2 262.6L635 263.2L625.5 266.4L623.9 265.2ZM623.9 265.2L625.5 266.4L616 270.3L613.8 268.6ZM613.8 268.6L616 270.3L606.9 274.9L604.1 272.7ZM663.7 258.5L661.9 257.7L670.1 257.2L672.9 258.6ZM654.3 259.3L653.5 258.9L661.9 257.7L663.7 258.5ZM644.7 260.9L644.9 261L653.5 258.9L654.3 259.3ZM635 263.2L636.2 263.8L627.6 267.5L625.5 266.4ZM625.5 266.4L627.6 267.5L619.1 271.9L616 270.3ZM616 270.3L619.1 271.9L610.8 277L606.9 274.9ZM670.1 257.2L666.7 256.1L673.4 256.1L677.9 257.6ZM661.9 257.7L659.7 256.9L666.7 256.1L670.1 257.2ZM636.2 263.8L637.6 264.4L630.2 268.5L627.6 267.5ZM627.6 267.5L630.2 268.5L622.9 273.3L619.1 271.9ZM666.7 256.1L662.8 255.1L668.2 254.8L673.4 256.1ZM659.7 256.9L657.2 256.2L662.8 255.1L666.7 256.1ZM652.5 258.5L651.3 258.3L657.2 256.2L659.7 256.9ZM645.1 261L645.4 261.1L639.3 264.8L637.6 264.4ZM630.2 268.5L633.3 269.3L627.3 274.5L622.9 273.3ZM662.8 255.1L658.6 254.3L662.5 253.8L668.2 254.8ZM657.2 256.2L654.4 255.7L658.6 254.3L662.8 255.1ZM651.3 258.3L650.1 258L654.4 255.7L657.2 256.2ZM645.4 261.1L645.7 261.2L650.1 258L651.3 258.3ZM627.3 274.5L632.2 275.5L627.9 281.7L621.5 280.5ZM654.4 255.7L651.4 255.4L654 253.8L658.6 254.3ZM650.1 258L648.7 257.9L651.4 255.4L654.4 255.7ZM648.3 255.2L645.1 255.2L644.4 253.5L649.2 253.5ZM643.2 276.4L648.9 276.5L649.6 283L642.1 283ZM648.9 276.5L654.5 276.2L656.9 282.6L649.6 283ZM639.6 253.8L635 254.3L631.3 253.7L637.4 253ZM644.4 257.9L643.1 258L639 255.7L642 255.4ZM646.9 261.2L647.3 261.2L643.1 258L644.4 257.9ZM635 254.3L630.7 255L625.5 254.6L631.3 253.7ZM639 255.7L636.2 256.2L630.7 255L635 254.3ZM647.3 261.2L647.5 261.1L653.4 264.8L651.5 265.2ZM641.8 258.2L640.6 258.5L633.6 256.8L636.2 256.2ZM647.5 261.1L647.8 261L640.6 258.5L641.8 258.2ZM626.8 255.9L623.3 257.1L615.6 257.5L620.3 255.9ZM640.6 258.5L639.6 258.9L631.3 257.6L633.6 256.8ZM647.8 261L648 261L639.6 258.9L640.6 258.5ZM662.3 268.6L665 267.6L673.3 272.1L669.4 273.5ZM639.6 258.9L638.8 259.2L629.5 258.4L631.3 257.6ZM673.3 272.1L676.5 270.5L685.4 275.2L681.4 277.3ZM638.8 259.2L638.1 259.7L628 259.4L629.5 258.4ZM648.2 260.9L648.4 260.8L638.1 259.7L638.8 259.2ZM676.5 270.5L678.8 268.8L688.5 273L685.4 275.2ZM618.2 259.9L616.7 261.5L606.7 263.3L608.8 261.2ZM648.4 260.8L648.5 260.7L659.3 262L658.7 262.7ZM616.7 261.5L615.9 263.1L605.6 265.5L606.7 263.3ZM637.7 260.1L637.5 260.6L626.6 261.5L627.1 260.4ZM648.5 260.7L648.5 260.6L659.5 261.3L659.3 262ZM648.5 260.6L648.5 260.5L659.4 260.6L659.5 261.3ZM626.6 262.6L627.2 263.6L616.8 266.4L616 264.8ZM637.5 261.1L637.8 261.6L627.2 263.6L626.6 262.6ZM659.4 260.6L659 259.9L669.4 260.2L670.2 261.5Z" fill="#ff4340"/><path d="M644.9 261L645.1 261M631.7 273L636.2 273.6M686 270.2L687.2 268M622.9 264L623.9 265.2M639 262.5L639.9 262.9M643.1 258L641.8 258.2M663.7 258.5L661.9 257.7M679.4 261.4L677.4 259.6M659.9 275.6L664.9 274.7M657.7 263.3L658.7 262.7M631.3 257.6L629.5 258.4M623.9 265.2L625.5 266.4M645.4 261.1L645.7 261.2M639.6 253.8L635 254.3M659.5 261.3L659.4 260.6M619.1 271.9L622.9 273.3M665.6 263.8L666.3 262.7M639.2 280.3L646 280.6M608.8 261.2L606.7 263.3M649.5 268.6L652.7 268.3M686.4 261L682.8 258.9M654.9 259.7L654.3 259.3M687.3 265.8L686.4 263.6M680.3 267L680.9 265.1M612 264.9L612.4 266.7M602.4 265.4L601.8 267.8M644.6 260.2L644.5 260.3M680.9 265.1L680.6 263.2M627.6 267.5L630.2 268.5M618.7 257.9L615.8 259.5M627.2 263.6L628.3 264.7M634.2 262.6L635 263.2M662.8 255.1L658.6 254.3M622.6 262.7L622.9 264M643.2 276.4L648.9 276.5M647.1 259.9L646.8 259.9M662.5 253.8L656.4 253.1M649.6 283L656.9 282.6M654.4 257.6L652.6 257.2M659.4 260.6L659 259.9M627.3 274.5L632.2 275.5M659.3 279.8L665.6 278.9M648.7 257.9L647.3 257.8M644.5 260.7L644.6 260.8M620.8 269.5L623.8 270.9M662.4 254.4L657.5 253.7M681.6 259.4L677.9 257.6M659 259.9L658.3 259.2M665.6 278.9L671.2 277.7M648.2 260.1L648 260.1M651.5 265.2L653.4 264.8M647.8 261L648 261M647.7 260L647.4 259.9M637.2 258L635.9 258.6M656.5 263.9L657.7 263.3M648 261L648.2 260.9M675.9 266.6L676.9 265M616 264.8L616.8 266.4M625.5 254.6L620.3 255.9M668 259L666.1 257.9M644.4 257.9L643.1 258M604.1 263L602.4 265.4M639.9 252.7L633.1 253.3M659.7 256.9L657.2 256.2M651.1 274.1L656 273.7M659.2 269.4L662.3 268.6M653.8 262.5L654.6 262.1M638.8 259.2L638.1 259.7M628 259.4L627.1 260.4M605.6 267.7L606.7 270M642 255.4L639 255.7M625.1 258.9L623.7 260.1M658.7 262.7L659.3 262M689.1 263.2L686.4 261M662.9 265.7L664.5 264.8M680.6 263.2L679.5 261.4M686.4 263.6L684.5 261.4M652.7 268.3L655.6 267.9M670.1 257.2L666.7 256.1M648.9 276.5L654.5 276.2M663.9 281.8L670.4 280.7M648.4 260.8L648.5 260.7M655.6 267.9L658.4 267.3M651.4 255.4L648.3 255.2M631.3 253.7L625.5 254.6M648.5 260.7L648.5 260.6M636.7 269.9L640.4 270.4M613.8 268.6L616 270.3M644.4 260.6L644.5 260.7M670.4 262.8L670.2 261.5M606.7 270L608.8 272.2M626.6 261.5L626.6 262.6M633.6 256.8L631.3 257.6M616.8 266.5L618.4 268M664.9 272.1L668.6 271M639.9 262.9L641 263.2M646.1 274.2L651.1 274.1M641.2 265.1L643.2 265.4M666.1 257.9L663.7 256.9M634.2 267.2L636.9 267.8M639.6 258.9L638.8 259.2M639.3 264.8L641.2 265.1M677.9 257.6L673.4 256.1M633.6 260.5L633.4 261.2M658.3 259.2L657.2 258.6M615.7 278.9L621.5 280.5M663.7 256.9L660.8 256.1M645.1 255.2L642 255.4M618.4 268L620.8 269.5M655.1 264.4L656.5 263.9M647.8 263.8L649.2 263.7M646 280.6L652.7 280.4M626.8 255.9L623.3 257.1M634.8 259.2L634 259.8M691.1 268.1L690.7 265.7M656.9 282.6L663.9 281.8M646.3 261.2L646.6 261.2M637.4 253L631.3 253.7M647.4 265.5L649.5 265.4M638.1 259.7L637.7 260.1M643 268.5L646.3 268.6M648.5 260.6L648.5 260.5M640.6 257.2L638.8 257.6M620.4 258.4L618.2 259.9M621.5 280.5L627.9 281.7M665.1 259.5L663.7 258.5M668.2 254.8L662.5 253.8M655.9 258.1L654.4 257.6M653.5 258.9L652.5 258.5M660.8 266.6L662.9 265.7M633.6 261.9L634.2 262.6M636.1 253.6L631.1 254.3M648.5 260.5L648.4 260.3M652 270.4L655.7 270M648.2 260.9L648.4 260.8M631.1 254.3L626.4 255.3M610.6 258.7L606.9 260.8M642.9 254.6L639.3 254.8M647.4 259.9L647.1 259.9M620.9 277.5L626.5 278.8M666.4 261.6L666 260.5M658.4 267.3L660.8 266.6M646.3 268.6L649.5 268.6M675 260.1L672.9 258.6M677.4 259.6L674.6 258M687.2 268L687.3 265.8M639.3 254.8L635.7 255.3M605.6 265.5L605.6 267.7M652.5 258.5L651.3 258.3M644.5 260.3L644.5 260.4M682.8 258.9L678.3 257.1M674.6 258L671.1 256.6M672.9 258.6L670.1 257.2M616 270.3L619.1 271.9M612 274.2L616 276M669.4 260.2L668 259M654.4 255.7L651.4 255.4M662.3 268.6L665 267.6M654.6 262.1L655.1 261.6M681.4 277.3L685.4 275.2M618.2 259.9L616.7 261.5M668.6 271L671.8 269.7M641.8 258.2L640.6 258.5M636.2 263.8L637.6 264.4M633.3 269.3L636.7 269.9M643.7 252.7L637.4 253M648.7 256.8L646.6 256.7M646.8 259.9L646.5 259.8M652.7 280.4L659.3 279.8M626.5 278.8L632.7 279.8M610.8 277L615.7 278.9M646.9 252.6L639.9 252.7M604.1 272.7L606.9 274.9M633.4 261.2L633.6 261.9M684.5 261.4L681.6 259.4M643.5 263.7L644.9 263.8M657.6 255.4L654.1 254.9M646.5 259.8L646.2 259.9M648.3 255.2L645.1 255.2M626.6 262.6L627.2 263.6M642.5 256.9L640.6 257.2M660.8 256.1L657.6 255.4M640.6 258.5L639.6 258.9M634.9 282.6L642.1 283M620.7 255.4L615.3 256.9M671.2 277.7L676.2 276.1M674.2 268.2L675.9 266.6M622.3 256.5L618.7 257.9M645.7 261.2L646 261.2M676.2 276.1L680.4 274.4M659.3 262L659.5 261.3M666 260.5L665.1 259.5M645.9 259.9L645.6 259.9M664.5 264.8L665.6 263.8M629.6 256.8L627.1 257.8M666.3 262.7L666.4 261.6M635.7 255.3L632.5 256M632.2 275.5L637.6 276.1M646.8 253.1L641.4 253.2M606.7 263.3L605.6 265.5M615.9 263.1L616 264.8M639.9 268.3L643 268.5M647.5 261.1L647.8 261M625.5 266.4L627.6 267.5M644.5 260.4L644.4 260.6M668.8 265.4L669.9 264.1M655.5 260.7L655.3 260.2M650.1 252.7L643.7 252.7M650.7 257L648.7 256.8M676.3 279.1L681.4 277.3M646.7 254.5L642.9 254.6M669.9 264.1L670.4 262.8M623.7 260.1L622.8 261.4M652.9 262.9L653.8 262.5M636.2 273.6L641.1 274.1M656.4 253.1L650.1 252.7M652.6 257.2L650.7 257M626.7 254.2L620.7 255.4M648.3 260.2L648.2 260.1M673.4 256.1L668.2 254.8M657.2 258.6L655.9 258.1M640.4 270.4L644.2 270.6M644.7 260.9L644.9 261M645.6 259.9L645.3 260M639 255.7L636.2 256.2M651.8 263.2L652.9 262.9M648 260.1L647.7 260M661.9 257.7L659.7 256.9M612.4 263L612 264.9M634 259.8L633.6 260.5M620.3 255.9L615.6 257.5M606.9 274.9L610.8 277M680.4 274.4L683.7 272.4M623.3 257.1L620.4 258.4M669.4 273.5L673.3 272.1M646.6 256.7L644.5 256.8M627.5 272L631.7 273M637.7 260.1L637.5 260.6M637.5 260.6L637.5 261.1M627.1 257.8L625.1 258.9M647.3 257.8L645.9 257.8M647.3 261.2L647.5 261.1M649.5 265.4L651.5 265.2M654.1 254.9L650.5 254.6M645.9 257.8L644.4 257.9M653.8 252.8L646.9 252.6M651.3 258.3L650.1 258M642.2 263.5L643.5 263.7M601.8 267.8L602.3 270.3M677 263.3L676.4 261.7M641 263.2L642.2 263.5M655.3 260.2L654.9 259.7M629.5 258.4L628 259.4M615.6 257.5L611.8 259.2M638.8 257.6L637.2 258M657.2 256.2L654.4 255.7M665 267.6L667.2 266.5M655.1 261.6L655.4 261.2M671.1 256.6L667 255.4M637.5 261.1L637.8 261.6M642.1 283L649.6 283M628.3 264.7L629.8 265.6M688.5 273L690.3 270.6M637.6 264.4L639.3 264.8M646 261.2L646.3 261.2M629.8 265.6L631.8 266.5M667 254.3L660.6 253.4M656 273.7L660.7 273M645.1 261L645.4 261.1M655.7 270L659.2 269.4M626.4 255.3L622.3 256.5M653.4 264.8L655.1 264.4M644.9 263.8L646.4 263.8M622.9 273.3L627.3 274.5M670.4 280.7L676.3 279.1M635.9 258.6L634.8 259.2M630.7 255L626.8 255.9M646.9 261.2L647.3 261.2M646.4 263.8L647.8 263.8M658.6 254.3L654 253.8M678.8 268.8L680.3 267M644.8 260.1L644.6 260.2M644.4 253.5L639.6 253.8M627.9 281.7L634.9 282.6M631.8 266.5L634.2 267.2M654.5 276.2L659.9 275.6M646.6 261.2L646.9 261.2M660.7 273L664.9 272.1M644.5 256.8L642.5 256.9M637.6 276.1L643.2 276.4M606.9 260.8L604.1 263M637.8 261.6L638.3 262.1M666.7 256.1L662.8 255.1M673 255.5L667 254.3M635 263.2L636.2 263.8M650.1 258L648.7 257.9M644.2 270.6L648.1 270.6M649.2 263.7L650.6 263.5M685.4 275.2L688.5 273M635 254.3L630.7 255M611.8 259.2L608.8 261.2M602.3 270.3L604.1 272.7M676.9 265L677 263.3M632.5 256L629.6 256.8M608.8 272.2L612 274.2M660.6 253.4L653.8 252.8M630.2 268.5L633.3 269.3M676.5 270.5L678.8 268.8M683.7 272.4L686 270.2M667 255.4L662.4 254.4M645 260.1L644.8 260.1M690.7 265.7L689.1 263.3M612.4 266.7L613.8 268.6M676.4 261.7L675 260.1M627.1 260.4L626.6 261.5M615.8 259.5L613.7 261.2M667.2 266.5L668.8 265.4M655.4 261.2L655.5 260.7M613.7 261.2L612.4 263M664.9 274.7L669.4 273.5M622.8 261.4L622.6 262.7M646.2 259.9L645.9 259.9M632.7 279.8L639.2 280.3M641.1 274.1L646.1 274.2M678.3 257.1L673 255.5M644.6 260.8L644.7 260.9M623.8 270.9L627.5 272M616 276L620.9 277.5M616.7 261.5L615.9 263.1M657.5 253.7L652.2 253.2M652.2 253.2L646.8 253.1M633.1 253.3L626.7 254.2M671.8 269.7L674.2 268.2M643.2 265.4L645.3 265.5M670.2 261.5L669.4 260.2M654.3 259.3L653.5 258.9M636.9 267.8L639.9 268.3M648.1 270.6L652 270.4M650.6 263.5L651.8 263.2M641.4 253.2L636.1 253.6M648.4 260.3L648.3 260.2M654 253.8L649.2 253.5M645.3 265.5L647.4 265.5M615.3 256.9L610.6 258.7M649.2 253.5L644.4 253.5M673.3 272.1L676.5 270.5M650.5 254.6L646.7 254.5M690.3 270.6L691.1 268.1M645.3 260L645 260.1M636.2 256.2L633.6 256.8M638.3 262.1L639 262.5" stroke="#008000" stroke-width="1" fill="none" shape-rendering="crispEdges"/>
   <path d="M529.7 370.7L521 236.8M529.7 370.7L570 456.7M570 456.7L772.7 430.7M529.7 370.7L511.1 372.8M529.4 365.7L517.2 367.1M529 360.8L516.9 362.1M528.7 355.7L516.5 357.1M528.4 350.7L516.1 352M528 345.6L509.1 347.6M527.7 340.5L515.4 341.8M527.4 335.4L515 336.7M527 330.2L514.7 331.5M526.7 325L514.3 326.3M526.4 319.7L507.2 321.7M526 314.4L513.5 315.7M525.7 309.1L513.1 310.4M525.3 303.8L512.7 305M525 298.4L512.3 299.7M524.6 293L505.1 294.9M524.3 287.5L511.5 288.8M523.9 282L511.1 283.3M523.6 276.5L510.7 277.7M523.2 270.9L510.3 272.2M522.8 265.3L503 267.2M522.5 259.7L509.5 260.9M522.1 254L509.1 255.2M521.7 248.3L508.7 249.5M521.3 242.6L508.3 243.7M521 236.8L500.8 238.5M570 456.7L548.8 459.4M568.2 452.8L554.5 454.5M566.4 448.9L552.8 450.6M564.6 445.1L551 446.8M562.8 441.3L549.3 443M561 437.5L540.4 440.1M559.3 433.8L546 435.5M557.6 430.2L544.3 431.8M555.9 426.6L542.7 428.2M554.2 423L541.1 424.6M552.5 419.4L532.5 421.9M550.9 415.9L537.9 417.5M549.3 412.5L536.4 414M547.7 409L534.8 410.6M546.1 405.7L533.3 407.2M544.5 402.3L525 404.6M543 399L530.3 400.5M541.4 395.7L528.8 397.2M539.9 392.5L527.4 393.9M538.4 389.3L525.9 390.7M536.9 386.1L517.8 388.3M535.4 382.9L523.1 384.3M534 379.8L521.7 381.2M532.5 376.8L520.3 378.1M531.1 373.7L519 375.1M529.7 370.7L511.1 372.8M570 456.7L574.7 466.7M578.4 455.6L581.6 462.1M586.8 454.6L590 461M595.2 453.5L598.4 459.9M603.5 452.4L606.8 458.8M611.8 451.3L617.1 461.2M620.1 450.3L623.6 456.7M628.3 449.2L631.9 455.6M636.6 448.2L640.2 454.5M644.8 447.1L648.5 453.4M652.9 446.1L658.8 455.8M661.1 445L665 451.3M669.2 444L673.2 450.2M677.3 442.9L681.3 449.2M685.4 441.9L689.5 448.1M693.5 440.9L699.9 450.4M701.5 439.8L705.7 446M709.5 438.8L713.8 445M717.5 437.8L721.9 443.9M725.5 436.8L729.9 442.9M733.4 435.7L740.3 445.2M741.3 434.7L745.9 440.8M749.2 433.7L753.8 439.8M757.1 432.7L761.8 438.7M764.9 431.7L769.7 437.7M772.7 430.7L780.2 440" stroke="#000" stroke-width="1" fill="none"/>
   <g font-size="11" fill="#000" stroke="#000" stroke-width=".2"><text x="506.6" y="376.8" text-anchor="end">-0.999821</text>
<text x="504.6" y="351.6" text-anchor="end">-0.599892</text>
<text x="502.7" y="325.7" text-anchor="end">-0.199964</text>
<text x="500.6" y="298.9" text-anchor="end">0.199964</text>
<text x="498.5" y="271.2" text-anchor="end">0.599892</text>
<text x="496.3" y="242.5" text-anchor="end">0.999821</text>
<text x="544.3" y="463.9" text-anchor="end">-0.997844</text>
<text x="535.9" y="444.6" text-anchor="end">-0.598706</text>
<text x="528" y="426.4" text-anchor="end">-0.199569</text>
<text x="520.5" y="409.1" text-anchor="end">0.199569</text>
<text x="513.3" y="392.8" text-anchor="end">0.598706</text>
<text x="506.6" y="377.3" text-anchor="end">0.997844</text>
<text x="576.2" y="480.7" text-anchor="middle">-0.998684</text>
<text x="618.6" y="475.2" text-anchor="middle">-0.599857</text>
<text x="660.3" y="469.8" text-anchor="middle">-0.20103</text>
<text x="701.4" y="464.4" text-anchor="middle">0.197796</text>
<text x="741.8" y="459.2" text-anchor="middle">0.596623</text></g>
   <g font-size="11" font-weight="bold" fill="#8b0000" text-anchor="middle">
    <text x="438.6" y="313">Z axis</text><text x="462" y="418">Y axis</text><text x="679" y="478">X axis</text>
   </g>
  </svg>
 </div>
</div>
</body></html>
